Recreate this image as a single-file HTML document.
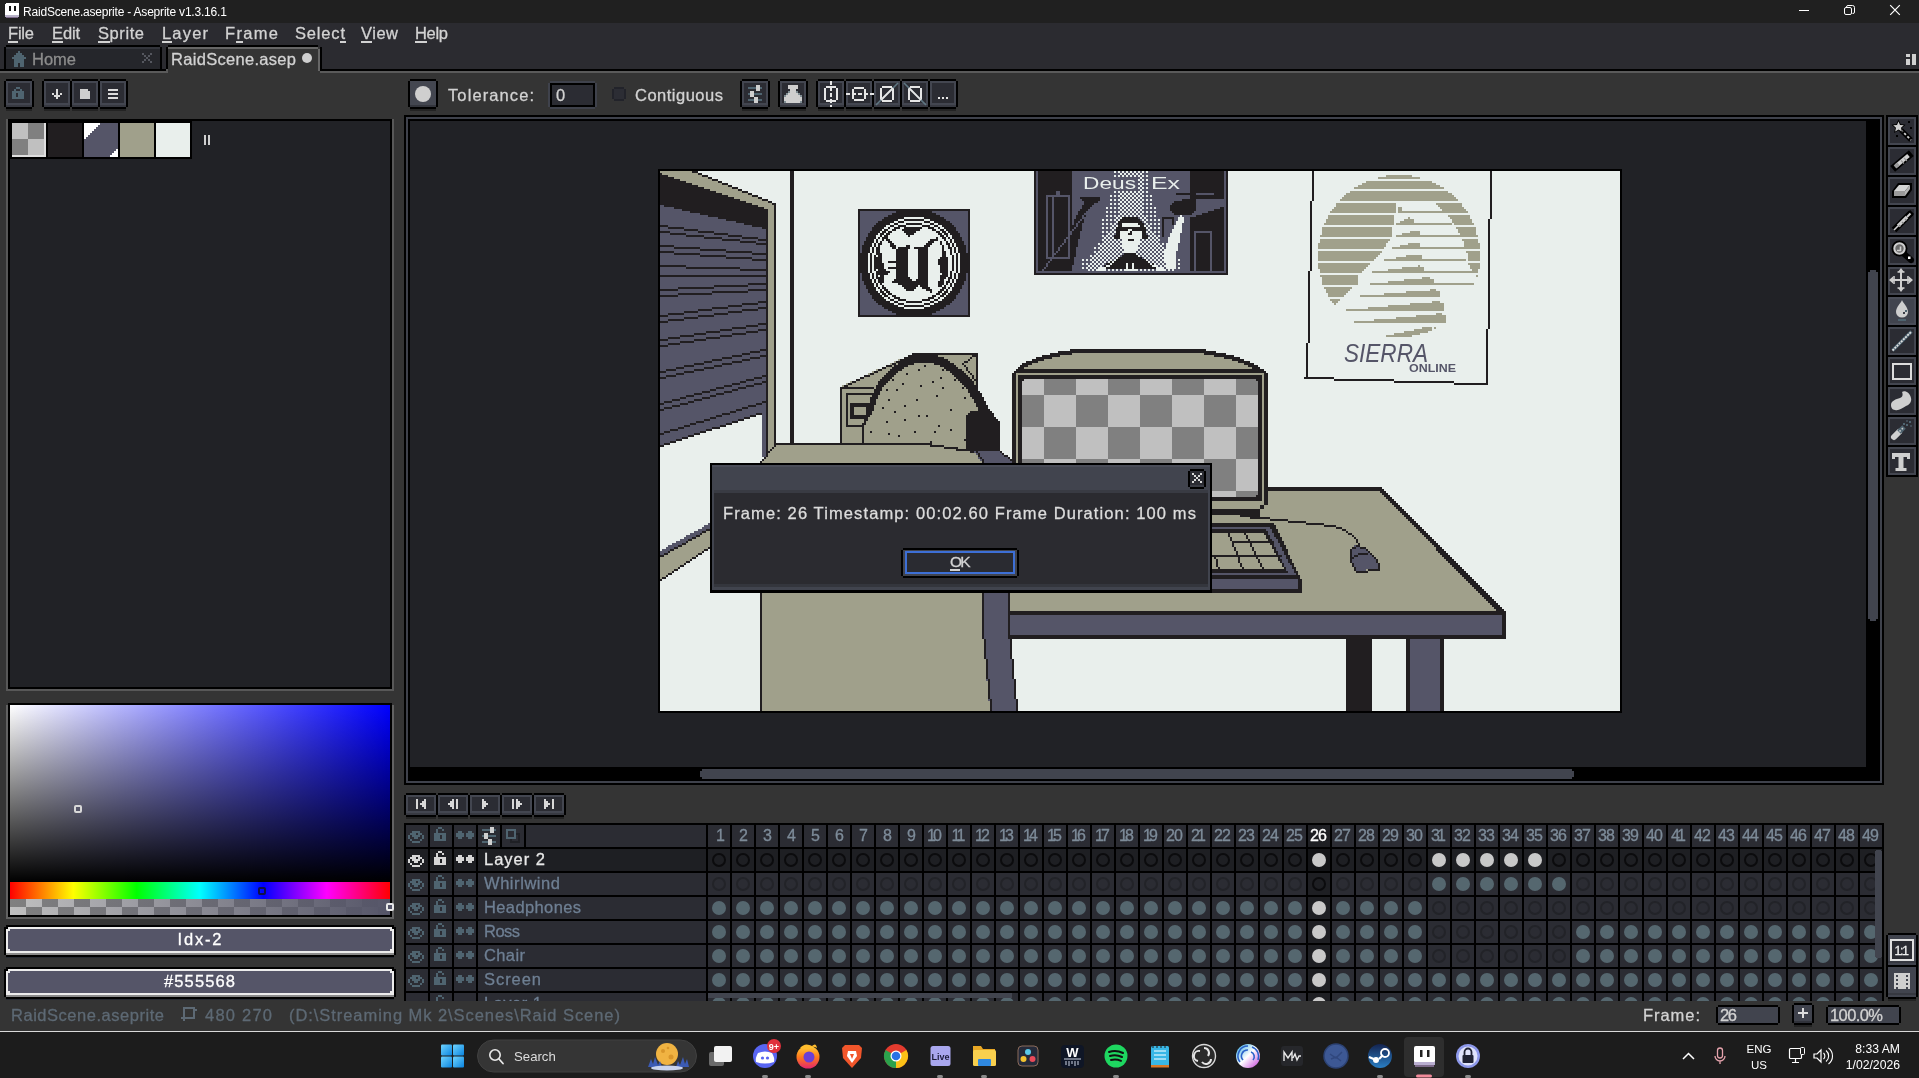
<!DOCTYPE html><html><head><meta charset="utf-8"><title>RaidScene.aseprite - Aseprite v1.3.16.1</title><style>
html,body{margin:0;padding:0}
body{width:1919px;height:1078px;overflow:hidden;background:#343434;position:relative;font-family:"Liberation Sans",sans-serif}
#r{position:absolute;left:0;top:0;width:1919px;height:1078px;overflow:hidden;will-change:transform}
#r div,#r span,#r svg{position:absolute;display:block}
#r svg svg, #r svg *{position:static}
.t{white-space:pre;line-height:normal;font-family:"Liberation Sans",sans-serif;-webkit-text-stroke:0.3px}
.w{white-space:pre;line-height:normal;font-family:"Liberation Sans",sans-serif}
.m u{text-decoration:none;background:linear-gradient(#d2d2d2,#d2d2d2) no-repeat 0 100%/100% 2px;padding-bottom:1px}
</style></head><body><div id="r"><!-- gen_base --><div style="left:0px;top:0px;width:1919px;height:23px;background:#202020;"></div><svg style="left:4px;top:3px" width="16" height="16" viewBox="0 0 16 16" shape-rendering="crispEdges"><rect x="1" y="0" width="14" height="13" rx="2" fill="#fff"/><rect x="1" y="12" width="14" height="2" fill="#b9b3c9"/><rect x="2" y="14" width="12" height="1" fill="#7d6b8a"/><rect x="5" y="3" width="2" height="5" fill="#111"/><rect x="10" y="3" width="2" height="5" fill="#111"/></svg><span class="w" style="left:23px;top:5px;font-size:12px;color:#fff;letter-spacing:-0.2px">RaidScene.aseprite - Aseprite v1.3.16.1</span><svg style="left:1780px;top:0" width="139" height="23" viewBox="0 0 139 23"><g stroke="#fff" stroke-width="1" fill="none"><path d="M19 10.5h10"/><rect x="64.5" y="7.500" width="7" height="7" rx="1.5"/><path d="M66.500 7.500v-0.500a1.500 1.500 0 0 1 1.500-1.500h4.500a2 2 0 0 1 2 2v4.500a1.500 1.500 0 0 1-1.500 1.500h-0.500"/><path d="M110.200 5.200l9.600 9.600M119.800 5.200l-9.600 9.600" stroke-width="1.200"/></g></svg><div style="left:0px;top:23px;width:1919px;height:48px;background:#2b2b30;"></div><span class="t m" style="left:8px;top:24.07px;font-size:16.5px;color:#d2d2d2;letter-spacing:-0.19px;"><u>F</u>ile</span><span class="t m" style="left:52px;top:24.07px;font-size:16.5px;color:#d2d2d2;letter-spacing:-0.14px;"><u>E</u>dit</span><span class="t m" style="left:98px;top:24.07px;font-size:16.5px;color:#d2d2d2;letter-spacing:0.58px;"><u>S</u>prite</span><span class="t m" style="left:162px;top:24.07px;font-size:16.5px;color:#d2d2d2;letter-spacing:1.18px;"><u>L</u>ayer</span><span class="t m" style="left:225px;top:24.07px;font-size:16.5px;color:#d2d2d2;letter-spacing:1.33px;">F<u>r</u>ame</span><span class="t m" style="left:295px;top:24.07px;font-size:16.5px;color:#d2d2d2;letter-spacing:0.83px;">Selec<u>t</u></span><span class="t m" style="left:361px;top:24.07px;font-size:16.5px;color:#d2d2d2;letter-spacing:0.51px;"><u>V</u>iew</span><span class="t m" style="left:415px;top:24.07px;font-size:16.5px;color:#d2d2d2;letter-spacing:-0.31px;"><u>H</u>elp</span><div style="left:0px;top:69px;width:1919px;height:2px;background:#000;"></div><div style="left:0px;top:71px;width:1919px;height:2px;background:#5a5a5a;"></div><div style="left:6px;top:45px;width:154px;height:2px;background:#000;"></div><div style="left:4px;top:47px;width:2px;height:22px;background:#000;"></div><div style="left:160px;top:47px;width:2px;height:22px;background:#000;"></div><div style="left:6px;top:47px;width:154px;height:22px;background:#25262b;"></div><div style="left:6px;top:47px;width:154px;height:2px;background:#33353c;"></div><svg style="left:12px;top:51px" width="14" height="16" viewBox="0 0 7 8" shape-rendering="crispEdges"><path d="M3 0h1v1h1v1h1v1h1v1h-1v4h-2v-2h-1v2h-2v-4h-1v-1h1v-1h1v-1h1z" fill="#4f6470"/></svg><span class="t" style="left:32px;top:50.07px;font-size:16.5px;color:#8c8c8c;letter-spacing:-0.0px;">Home</span><svg style="left:142px;top:53px" width="10" height="10" viewBox="0 0 5 5" shape-rendering="crispEdges"><path d="M0 0h1v1h-1zM4 0h1v1h-1zM1 1h1v1h-1zM3 1h1v1h-1zM2 2h1v1h-1zM1 3h1v1h-1zM3 3h1v1h-1zM0 4h1v1h-1zM4 4h1v1h-1z" fill="#55575f"/></svg><div style="left:168px;top:45px;width:150px;height:2px;background:#000;"></div><div style="left:166px;top:47px;width:2px;height:22px;background:#000;"></div><div style="left:320px;top:47px;width:2px;height:24px;background:#000;"></div><div style="left:168px;top:47px;width:152px;height:26px;background:#343434;"></div><div style="left:168px;top:47px;width:150px;height:2px;background:#666;"></div><div style="left:318px;top:49px;width:2px;height:22px;background:#666;"></div><div style="left:166px;top:47px;width:2px;height:2px;background:#000;"></div><div style="left:164px;top:69px;width:4px;height:2px;background:#000;"></div><div style="left:164px;top:71px;width:4px;height:2px;background:#5a5a5a;"></div><div style="left:166px;top:69px;width:2px;height:4px;background:#5a5a5a;"></div><span class="t" style="left:171px;top:50.07px;font-size:16.5px;color:#d2d2d2;letter-spacing:0.3px;">RaidScene.asep</span><div style="left:302px;top:53px;width:10px;height:10px;border-radius:5px;background:#cfcfcf"></div><div style="left:1906px;top:54px;width:4px;height:3px;background:#d0d0d0;"></div><div style="left:1906px;top:59px;width:4px;height:6px;background:#d0d0d0;"></div><div style="left:1912px;top:54px;width:4px;height:11px;background:#d0d0d0;"></div>
<!-- gen_left --><div style="left:6px;top:109px;width:26px;height:2px;background:#232323;"></div><div style="left:6px;top:79px;width:26px;height:30px;background:#000;"></div><div style="left:4px;top:81px;width:30px;height:26px;background:#000;"></div><div style="left:6px;top:81px;width:26px;height:26px;background:#434650;"></div><div style="left:6px;top:105px;width:26px;height:2px;background:#373941;"></div><div style="left:8px;top:83px;width:22px;height:20px;background:#2b2c33;"></div><svg style="left:12px;top:87px" width="12" height="12" viewBox="0 0 6 6" shape-rendering="crispEdges"><rect x="2" y="0" width="2" height="1" fill="#4f6470"/><rect x="1" y="1" width="1" height="1" fill="#4f6470"/><rect x="4" y="1" width="1" height="1" fill="#4f6470"/><rect x="0" y="2" width="6" height="1" fill="#4f6470"/><rect x="0" y="3" width="2" height="1" fill="#4f6470"/><rect x="3" y="3" width="3" height="1" fill="#4f6470"/><rect x="0" y="4" width="2" height="1" fill="#4f6470"/><rect x="3" y="4" width="3" height="1" fill="#4f6470"/><rect x="0" y="5" width="6" height="1" fill="#4f6470"/></svg><div style="left:44px;top:109px;width:26px;height:2px;background:#232323;"></div><div style="left:44px;top:79px;width:26px;height:30px;background:#000;"></div><div style="left:42px;top:81px;width:30px;height:26px;background:#000;"></div><div style="left:44px;top:81px;width:26px;height:26px;background:#434650;"></div><div style="left:44px;top:105px;width:26px;height:2px;background:#373941;"></div><div style="left:46px;top:83px;width:22px;height:20px;background:#2b2c33;"></div><div style="left:72px;top:109px;width:26px;height:2px;background:#232323;"></div><div style="left:72px;top:79px;width:26px;height:30px;background:#000;"></div><div style="left:70px;top:81px;width:30px;height:26px;background:#000;"></div><div style="left:72px;top:81px;width:26px;height:26px;background:#434650;"></div><div style="left:72px;top:105px;width:26px;height:2px;background:#373941;"></div><div style="left:74px;top:83px;width:22px;height:20px;background:#2b2c33;"></div><div style="left:100px;top:109px;width:26px;height:2px;background:#232323;"></div><div style="left:100px;top:79px;width:26px;height:30px;background:#000;"></div><div style="left:98px;top:81px;width:30px;height:26px;background:#000;"></div><div style="left:100px;top:81px;width:26px;height:26px;background:#434650;"></div><div style="left:100px;top:105px;width:26px;height:2px;background:#373941;"></div><div style="left:102px;top:83px;width:22px;height:20px;background:#2b2c33;"></div><svg style="left:52px;top:89px" width="10" height="10" viewBox="0 0 5 5" shape-rendering="crispEdges"><rect x="2" y="0" width="1" height="1" fill="#dcdcdc"/><rect x="2" y="1" width="1" height="1" fill="#dcdcdc"/><rect x="0" y="2" width="1" height="1" fill="#dcdcdc"/><rect x="2" y="2" width="1" height="1" fill="#dcdcdc"/><rect x="4" y="2" width="1" height="1" fill="#dcdcdc"/><rect x="1" y="3" width="3" height="1" fill="#dcdcdc"/><rect x="2" y="4" width="1" height="1" fill="#dcdcdc"/></svg><svg style="left:80px;top:89px" width="10" height="10" viewBox="0 0 5 5" shape-rendering="crispEdges"><rect x="0" y="0" width="4" height="1" fill="#cfcfcf"/><rect x="0" y="1" width="5" height="1" fill="#cfcfcf"/><rect x="0" y="2" width="5" height="1" fill="#cfcfcf"/><rect x="0" y="3" width="5" height="1" fill="#cfcfcf"/><rect x="0" y="4" width="5" height="1" fill="#cfcfcf"/></svg><svg style="left:108px;top:89px" width="10" height="10" viewBox="0 0 5 5" shape-rendering="crispEdges"><rect x="0" y="0" width="5" height="1" fill="#dcdcdc"/><rect x="0" y="2" width="5" height="1" fill="#dcdcdc"/><rect x="0" y="4" width="5" height="1" fill="#dcdcdc"/></svg><div style="left:6px;top:119px;width:388px;height:572px;background:#585858;"></div><div style="left:8px;top:119px;width:384px;height:570px;background:#000;"></div><div style="left:10px;top:121px;width:380px;height:566px;background:#212226;"></div><div style="left:10px;top:119px;width:182px;height:40px;background:#000;"></div><div style="left:12px;top:123px;width:34px;height:34px;background:#c0c0c0;"></div><div style="left:28px;top:123px;width:16px;height:16px;background:#808080;"></div><div style="left:12px;top:139px;width:16px;height:16px;background:#808080;"></div><div style="left:44px;top:123px;width:2px;height:34px;background:#dedede;"></div><div style="left:12px;top:155px;width:34px;height:2px;background:#dedede;"></div><div style="left:48px;top:123px;width:34px;height:34px;background:#211e20;"></div><div style="left:84px;top:123px;width:34px;height:34px;background:#555568;"></div><svg style="left:84px;top:123px" width="34" height="34" viewBox="0 0 17 17" shape-rendering="crispEdges"><path d="M0 0h8v1h-1v1h-1v1h-1v1h-1v1h-1v1h-1v1h-1v1h-1z" fill="#fff"/><path d="M17 17h-4v-1h1v-1h1v-1h1v-1h1z" fill="#fff"/></svg><div style="left:120px;top:123px;width:34px;height:34px;background:#a0a08b;"></div><div style="left:156px;top:123px;width:34px;height:34px;background:#e9efec;"></div><div style="left:204px;top:135px;width:2px;height:10px;background:#cfcfcf;"></div><div style="left:208px;top:135px;width:2px;height:10px;background:#cfcfcf;"></div><div style="left:6px;top:705px;width:388px;height:214px;background:#626262;"></div><div style="left:8px;top:703px;width:384px;height:214px;background:#000;"></div><div style="left:10px;top:705px;width:380px;height:177px;background:linear-gradient(to bottom,rgba(0,0,0,0),#000),linear-gradient(to right,#fff,#0000ff)"></div><div style="left:10px;top:882px;width:380px;height:17px;background:linear-gradient(to right,#f00 0%,#ff0 16.66%,#0f0 33.33%,#0ff 50%,#00f 66.66%,#f0f 83.33%,#f00 100%)"></div><div style="left:10px;top:899px;width:380px;height:16px;background:linear-gradient(to right,rgba(85,85,104,0),rgba(85,85,104,1)),repeating-conic-gradient(#c0c0c0 0% 25%,#808080 0% 50%) 0 0/32px 16px"></div><div style="left:74px;top:805px;width:4px;height:4px;border:2px solid #d8d8d8;border-radius:2px"></div><div style="left:258px;top:887px;width:4px;height:4px;border:2px solid #10104a;border-radius:2px"></div><div style="left:386px;top:903px;width:4px;height:4px;border:2px solid #e8e8e8;border-radius:2px;background:#555568"></div><div style="left:6px;top:957px;width:388px;height:1px;background:#262a31;"></div><div style="left:6px;top:925px;width:388px;height:32px;background:#000;"></div><div style="left:4px;top:927px;width:392px;height:28px;background:#000;"></div><div style="left:6px;top:927px;width:388px;height:26px;background:#ececec;"></div><div style="left:6px;top:953px;width:388px;height:2px;background:#8a8a8a;"></div><div style="left:8px;top:929px;width:384px;height:22px;background:#555568;"></div><div style="left:6px;top:927px;width:2px;height:2px;background:#000;"></div><div style="left:392px;top:927px;width:2px;height:2px;background:#000;"></div><div style="left:8px;top:929px;width:2px;height:2px;background:#ececec;"></div><div style="left:390px;top:929px;width:2px;height:2px;background:#ececec;"></div><div style="left:8px;top:949px;width:2px;height:2px;background:#ececec;"></div><div style="left:390px;top:949px;width:2px;height:2px;background:#ececec;"></div><span class="t" style="left:177.5px;top:930.07px;font-size:16.5px;color:#fff;letter-spacing:1.83px;">Idx-2</span><div style="left:6px;top:999px;width:388px;height:1px;background:#262a31;"></div><div style="left:6px;top:967px;width:388px;height:32px;background:#000;"></div><div style="left:4px;top:969px;width:392px;height:28px;background:#000;"></div><div style="left:6px;top:969px;width:388px;height:26px;background:#ececec;"></div><div style="left:6px;top:995px;width:388px;height:2px;background:#8a8a8a;"></div><div style="left:8px;top:971px;width:384px;height:22px;background:#555568;"></div><div style="left:6px;top:969px;width:2px;height:2px;background:#000;"></div><div style="left:392px;top:969px;width:2px;height:2px;background:#000;"></div><div style="left:8px;top:971px;width:2px;height:2px;background:#ececec;"></div><div style="left:390px;top:971px;width:2px;height:2px;background:#ececec;"></div><div style="left:8px;top:991px;width:2px;height:2px;background:#ececec;"></div><div style="left:390px;top:991px;width:2px;height:2px;background:#ececec;"></div><span class="t" style="left:164.0px;top:972.07px;font-size:16.5px;color:#fff;letter-spacing:1.13px;">#555568</span>
<!-- gen_ctx --><div style="left:410px;top:109px;width:26px;height:2px;background:#232323;"></div><div style="left:410px;top:79px;width:26px;height:30px;background:#000;"></div><div style="left:408px;top:81px;width:30px;height:26px;background:#000;"></div><div style="left:410px;top:81px;width:26px;height:26px;background:#434650;"></div><div style="left:410px;top:105px;width:26px;height:2px;background:#33353d;"></div><div style="left:412px;top:83px;width:22px;height:20px;background:#434650;"></div><div style="left:415px;top:86px;width:16px;height:16px;border-radius:50%;background:#cfcfcf"></div><span class="t" style="left:448px;top:86.07px;font-size:16.5px;color:#d2d2d2;letter-spacing:1.1px;">Tolerance:</span><div style="left:550px;top:81px;width:45px;height:28px;background:#3f424c;"></div><div style="left:548px;top:83px;width:49px;height:24px;background:#3f424c;"></div><div style="left:550px;top:83px;width:45px;height:24px;background:#000;"></div><div style="left:552px;top:85px;width:41px;height:20px;background:#2b2c33;"></div><span class="t" style="left:556px;top:86.07px;font-size:16.5px;color:#d2d2d2;letter-spacing:-1.18px;">0</span><div style="left:614px;top:87px;width:10px;height:14px;background:#22232a;"></div><div style="left:612px;top:89px;width:14px;height:10px;background:#22232a;"></div><div style="left:614px;top:89px;width:10px;height:10px;background:#2c2d34;"></div><span class="t" style="left:635px;top:86.07px;font-size:16.5px;color:#d2d2d2;letter-spacing:0.5px;">Contiguous</span><div style="left:742px;top:109px;width:26px;height:2px;background:#232323;"></div><div style="left:742px;top:79px;width:26px;height:30px;background:#000;"></div><div style="left:740px;top:81px;width:30px;height:26px;background:#000;"></div><div style="left:742px;top:81px;width:26px;height:26px;background:#434650;"></div><div style="left:742px;top:105px;width:26px;height:2px;background:#373941;"></div><div style="left:744px;top:83px;width:22px;height:20px;background:#2b2c33;"></div><svg style="left:748px;top:85px" width="14" height="18" viewBox="0 0 7 9" shape-rendering="crispEdges"><rect x="4" y="0" width="2" height="1" fill="#cfcfcf"/><rect x="0" y="1" width="4" height="1" fill="#4f6470"/><rect x="4" y="1" width="2" height="1" fill="#cfcfcf"/><rect x="6" y="1" width="1" height="1" fill="#4f6470"/><rect x="4" y="2" width="2" height="1" fill="#cfcfcf"/><rect x="1" y="3" width="2" height="1" fill="#cfcfcf"/><rect x="0" y="4" width="1" height="1" fill="#4f6470"/><rect x="1" y="4" width="2" height="1" fill="#cfcfcf"/><rect x="3" y="4" width="4" height="1" fill="#4f6470"/><rect x="1" y="5" width="2" height="1" fill="#cfcfcf"/><rect x="3" y="6" width="2" height="1" fill="#cfcfcf"/><rect x="0" y="7" width="3" height="1" fill="#4f6470"/><rect x="3" y="7" width="2" height="1" fill="#cfcfcf"/><rect x="5" y="7" width="2" height="1" fill="#4f6470"/><rect x="3" y="8" width="2" height="1" fill="#cfcfcf"/></svg><div style="left:780px;top:109px;width:26px;height:2px;background:#232323;"></div><div style="left:780px;top:79px;width:26px;height:30px;background:#000;"></div><div style="left:778px;top:81px;width:30px;height:26px;background:#000;"></div><div style="left:780px;top:81px;width:26px;height:26px;background:#434650;"></div><div style="left:780px;top:105px;width:26px;height:2px;background:#373941;"></div><div style="left:782px;top:83px;width:22px;height:20px;background:#2b2c33;"></div><svg style="left:784px;top:85px" width="18" height="18" viewBox="0 0 9 9" shape-rendering="crispEdges"><rect x="2" y="0" width="5" height="1" fill="#cfcfcf"/><rect x="2" y="1" width="5" height="1" fill="#cfcfcf"/><rect x="3" y="2" width="3" height="1" fill="#cfcfcf"/><rect x="2" y="3" width="1" height="1" fill="#7f8d93"/><rect x="3" y="3" width="3" height="1" fill="#cfcfcf"/><rect x="6" y="3" width="1" height="1" fill="#7f8d93"/><rect x="1" y="4" width="1" height="1" fill="#7f8d93"/><rect x="2" y="4" width="5" height="1" fill="#cfcfcf"/><rect x="7" y="4" width="1" height="1" fill="#7f8d93"/><rect x="0" y="5" width="1" height="1" fill="#7f8d93"/><rect x="1" y="5" width="7" height="1" fill="#cfcfcf"/><rect x="8" y="5" width="1" height="1" fill="#7f8d93"/><rect x="0" y="6" width="9" height="1" fill="#cfcfcf"/><rect x="0" y="7" width="9" height="1" fill="#cfcfcf"/><rect x="0" y="8" width="1" height="1" fill="#7f8d93"/><rect x="1" y="8" width="7" height="1" fill="#cfcfcf"/><rect x="8" y="8" width="1" height="1" fill="#7f8d93"/></svg><div style="left:818px;top:109px;width:26px;height:2px;background:#232323;"></div><div style="left:818px;top:79px;width:26px;height:30px;background:#000;"></div><div style="left:816px;top:81px;width:30px;height:26px;background:#000;"></div><div style="left:818px;top:81px;width:26px;height:26px;background:#434650;"></div><div style="left:818px;top:105px;width:26px;height:2px;background:#373941;"></div><div style="left:820px;top:83px;width:22px;height:20px;background:#2b2c33;"></div><div style="left:846px;top:109px;width:26px;height:2px;background:#232323;"></div><div style="left:846px;top:79px;width:26px;height:30px;background:#000;"></div><div style="left:844px;top:81px;width:30px;height:26px;background:#000;"></div><div style="left:846px;top:81px;width:26px;height:26px;background:#434650;"></div><div style="left:846px;top:105px;width:26px;height:2px;background:#373941;"></div><div style="left:848px;top:83px;width:22px;height:20px;background:#2b2c33;"></div><div style="left:874px;top:109px;width:26px;height:2px;background:#232323;"></div><div style="left:874px;top:79px;width:26px;height:30px;background:#000;"></div><div style="left:872px;top:81px;width:30px;height:26px;background:#000;"></div><div style="left:874px;top:81px;width:26px;height:26px;background:#434650;"></div><div style="left:874px;top:105px;width:26px;height:2px;background:#373941;"></div><div style="left:876px;top:83px;width:22px;height:20px;background:#2b2c33;"></div><div style="left:902px;top:109px;width:26px;height:2px;background:#232323;"></div><div style="left:902px;top:79px;width:26px;height:30px;background:#000;"></div><div style="left:900px;top:81px;width:30px;height:26px;background:#000;"></div><div style="left:902px;top:81px;width:26px;height:26px;background:#434650;"></div><div style="left:902px;top:105px;width:26px;height:2px;background:#373941;"></div><div style="left:904px;top:83px;width:22px;height:20px;background:#2b2c33;"></div><div style="left:930px;top:109px;width:26px;height:2px;background:#232323;"></div><div style="left:930px;top:79px;width:26px;height:30px;background:#000;"></div><div style="left:928px;top:81px;width:30px;height:26px;background:#000;"></div><div style="left:930px;top:81px;width:26px;height:26px;background:#434650;"></div><div style="left:930px;top:105px;width:26px;height:2px;background:#373941;"></div><div style="left:932px;top:83px;width:22px;height:20px;background:#2b2c33;"></div><svg style="left:816px;top:79px" width="142" height="30" viewBox="0 0 142 30" shape-rendering="crispEdges" fill="none" stroke-width="2"><path d="M9 9v12M21 9v12M10 8h10M10 22h10" stroke="#e6e6e6"/><path d="M15 2v26" stroke="#e6e6e6" stroke-dasharray="4 2"/><path d="M37 10v10M49 10v10M38 9h10M38 21h10" stroke="#e6e6e6"/><path d="M30 15h28" stroke="#e6e6e6" stroke-dasharray="4 2"/><path d="M65 9v12M77 9v12M66 8h10M66 22h10" stroke="#e6e6e6"/><path d="M60 26L82 4" stroke="#5f7682" shape-rendering="auto" stroke-width="1.600"/><path d="M65 21L77 9" stroke="#e6e6e6" shape-rendering="auto" stroke-width="1.800"/><path d="M93 9v12M105 9v12M94 8h10M94 22h10" stroke="#e6e6e6"/><path d="M88 4L110 26" stroke="#5f7682" shape-rendering="auto" stroke-width="1.600"/><path d="M93 9L105 21" stroke="#e6e6e6" shape-rendering="auto" stroke-width="1.800"/><path d="M122 19h2M126 19h2M130 19h2" stroke="#e6e6e6"/></svg>
<!-- gen_editor --><div style="left:404px;top:115px;width:1480px;height:670px;background:#000;"></div><div style="left:406px;top:117px;width:1476px;height:666px;background:#3f424c;"></div><div style="left:408px;top:119px;width:1472px;height:662px;background:#000;"></div><div style="left:410px;top:121px;width:1456px;height:646px;background:#212226;"></div><div style="left:1868px;top:272px;width:10px;height:347px;background:#41444e;"></div><div style="left:1870px;top:270px;width:6px;height:351px;background:#41444e;"></div><div style="left:702px;top:769px;width:870px;height:10px;background:#41444e;"></div><div style="left:700px;top:771px;width:874px;height:6px;background:#41444e;"></div><div style="left:658px;top:169px;width:964px;height:544px;background:#000;"></div><div style="left:1886px;top:115px;width:32px;height:32px;background:#000;"></div><div style="left:1888px;top:117px;width:28px;height:28px;background:#434650;"></div><div style="left:1890px;top:119px;width:24px;height:24px;background:#2b2c33;"></div><div style="left:1886px;top:145px;width:32px;height:32px;background:#000;"></div><div style="left:1888px;top:147px;width:28px;height:28px;background:#434650;"></div><div style="left:1890px;top:149px;width:24px;height:24px;background:#2b2c33;"></div><div style="left:1886px;top:175px;width:32px;height:32px;background:#000;"></div><div style="left:1888px;top:177px;width:28px;height:28px;background:#434650;"></div><div style="left:1890px;top:179px;width:24px;height:24px;background:#2b2c33;"></div><div style="left:1886px;top:205px;width:32px;height:32px;background:#000;"></div><div style="left:1888px;top:207px;width:28px;height:28px;background:#434650;"></div><div style="left:1890px;top:209px;width:24px;height:24px;background:#2b2c33;"></div><div style="left:1886px;top:235px;width:32px;height:32px;background:#000;"></div><div style="left:1888px;top:237px;width:28px;height:28px;background:#434650;"></div><div style="left:1890px;top:239px;width:24px;height:24px;background:#2b2c33;"></div><div style="left:1886px;top:265px;width:32px;height:32px;background:#000;"></div><div style="left:1888px;top:267px;width:28px;height:28px;background:#434650;"></div><div style="left:1890px;top:269px;width:24px;height:24px;background:#2b2c33;"></div><div style="left:1886px;top:295px;width:32px;height:32px;background:#000;"></div><div style="left:1888px;top:297px;width:28px;height:28px;background:#4a4d58;"></div><div style="left:1890px;top:299px;width:24px;height:24px;background:#41444e;"></div><div style="left:1886px;top:325px;width:32px;height:32px;background:#000;"></div><div style="left:1888px;top:327px;width:28px;height:28px;background:#434650;"></div><div style="left:1890px;top:329px;width:24px;height:24px;background:#2b2c33;"></div><div style="left:1886px;top:355px;width:32px;height:32px;background:#000;"></div><div style="left:1888px;top:357px;width:28px;height:28px;background:#434650;"></div><div style="left:1890px;top:359px;width:24px;height:24px;background:#2b2c33;"></div><div style="left:1886px;top:385px;width:32px;height:32px;background:#000;"></div><div style="left:1888px;top:387px;width:28px;height:28px;background:#434650;"></div><div style="left:1890px;top:389px;width:24px;height:24px;background:#2b2c33;"></div><div style="left:1886px;top:415px;width:32px;height:32px;background:#000;"></div><div style="left:1888px;top:417px;width:28px;height:28px;background:#434650;"></div><div style="left:1890px;top:419px;width:24px;height:24px;background:#2b2c33;"></div><div style="left:1886px;top:445px;width:32px;height:32px;background:#000;"></div><div style="left:1888px;top:447px;width:28px;height:28px;background:#434650;"></div><div style="left:1890px;top:449px;width:24px;height:24px;background:#2b2c33;"></div><svg style="left:1886px;top:115px" width="32" height="32" viewBox="0 0 32 32"><path d="M15 15L25 25" stroke="#000" stroke-width="5"/><path d="M15 15L25 25" stroke="#cfcfcf" stroke-width="1.800" stroke-dasharray="2.500 2"/><polygon points="12.5,4.5 14.6,9.1 19.6,9.7 15.9,13.1 16.9,18.1 12.5,15.6 8.1,18.1 9.1,13.1 5.4,9.7 10.4,9.1" fill="#000"/><polygon points="12.5,6.4 14.0,9.9 17.8,10.3 15.0,12.8 15.8,16.5 12.5,14.6 9.2,16.5 10.0,12.8 7.2,10.3 11.0,9.9" fill="#cfcfcf"/><rect x="22" y="6" width="2" height="2" fill="#000"/><rect x="24" y="12" width="2" height="2" fill="#000"/><rect x="10" y="20" width="2" height="2" fill="#000"/></svg><svg style="left:1886px;top:145px" width="32" height="32" viewBox="0 0 32 32"><path d="M9.500 21.500L22.500 10.500" stroke="#000" stroke-width="7.500" stroke-linecap="square"/><path d="M10 21L22.500 10.500" stroke="#cfcfcf" stroke-width="4"/><path d="M9 22L12.500 19" stroke="#9a9a9a" stroke-width="4"/><path d="M15 15.500l3 3M18 13l3 3" stroke="#9a9a9a" stroke-width="1.200"/></svg><svg style="left:1886px;top:175px" width="32" height="32" viewBox="0 0 32 32"><polygon points="12,8 26,8 26,15 20,23 6,23 6,16" fill="#000"/><polygon points="13,10 24,10 19,16 8,16" fill="#d4d4d4"/><polygon points="8,16 19,16 19,21 8,21" fill="#9a9a9a"/><polygon points="19,16 24,10 24,14 19,21" fill="#b4b4b4"/></svg><svg style="left:1886px;top:205px" width="32" height="32" viewBox="0 0 32 32"><path d="M8 25L25 8" stroke="#000" stroke-width="6.500"/><path d="M22 7l4 4" stroke="#000" stroke-width="6"/><path d="M8 25L12 21" stroke="#cfcfcf" stroke-width="1.600"/><path d="M12 21L21 12" stroke="#cfcfcf" stroke-width="3.400"/><path d="M21 12L24.500 8.500" stroke="#cfcfcf" stroke-width="2"/><path d="M13 20l1.500 1.500M16 17l1.500 1.500M19 14l1.500 1.500" stroke="#888" stroke-width="1.400"/></svg><svg style="left:1886px;top:235px" width="32" height="32" viewBox="0 0 32 32"><path d="M17 18L25 25" stroke="#000" stroke-width="6" stroke-linecap="round"/><circle cx="13.500" cy="13.500" r="8" fill="#000"/><circle cx="13.500" cy="13.500" r="5.200" fill="#6a6a6a" stroke="#cfcfcf" stroke-width="2"/><path d="M11 15.500h3.500v-4" stroke="#cfcfcf" stroke-width="1.600" fill="none"/><rect x="22" y="21.500" width="2.500" height="2.500" fill="#fff"/></svg><svg style="left:1886px;top:265px" width="32" height="32" viewBox="0 0 32 32"><path d="M15 5v20M5 15h20" stroke="#cfcfcf" stroke-width="2"/><path d="M15 3l3 4h-6zM15 27l3-4h-6zM3 15l4-3.500v7zM27 15l-4-3.500v7z" fill="#cfcfcf"/><path d="M8 11v8M22 11v8M11.500 7h7M11.500 23h7" stroke="#cfcfcf" stroke-width="1.600"/></svg><svg style="left:1886px;top:295px" width="32" height="32" viewBox="0 0 32 32"><path d="M16 5c1 3 6 7 6 12a6 5.500 0 0 1-12 0c0-5 5-9 6-12z" fill="#cfcfcf"/><rect x="17" y="17" width="2" height="2" fill="#3a3c45"/><rect x="19" y="15" width="2" height="2" fill="#4f6470"/><rect x="12" y="24" width="8" height="2" fill="#4f6470"/></svg><svg style="left:1886px;top:325px" width="32" height="32" viewBox="0 0 32 32"><path d="M6.500 25.500L25.500 6.500" stroke="#4f6470" stroke-width="3.200"/><path d="M6.500 25.500L25.500 6.500" stroke="#e0e0e0" stroke-width="1.800" stroke-dasharray="2 1"/></svg><svg style="left:1886px;top:355px" width="32" height="32" viewBox="0 0 32 32"><rect x="7" y="9" width="18" height="15" fill="none" stroke="#dcdcdc" stroke-width="2"/></svg><svg style="left:1886px;top:385px" width="32" height="32" viewBox="0 0 32 32"><path d="M5 20c0-4 5-6 9-7c3-1 3-4 2-6c3-2 8 1 9 6c1 4-2 7-5 8c-4 2-7 5-11 4c-3 0-4-3-4-5z" fill="#cfcfcf"/></svg><svg style="left:1886px;top:415px" width="32" height="32" viewBox="0 0 32 32"><path d="M8 22L13 17" stroke="#cfcfcf" stroke-width="6" stroke-linecap="round"/><path d="M13 17L18 12" stroke="#4f6470" stroke-width="5"/><path d="M13.500 16.500l4.500-4.500" stroke="#cfcfcf" stroke-width="1.600" stroke-dasharray="1.600 1.600"/><rect x="20" y="9" width="2" height="2" fill="#4f6470"/><rect x="23" y="6" width="2" height="2" fill="#4f6470"/><rect x="20" y="5" width="2" height="2" fill="#3f4a55"/><rect x="24" y="10" width="2" height="2" fill="#3f4a55"/><rect x="17" y="8" width="2" height="2" fill="#4f6470"/></svg><svg style="left:1886px;top:445px" width="32" height="32" viewBox="0 0 32 32"><path d="M6 8h18v6h-3v-2h-3.500v11h3v3h-11v-3h3v-11h-3.500v2h-3z" fill="#cfcfcf"/></svg><div style="left:1888px;top:999px;width:28px;height:2px;background:#232323;"></div><div style="left:1888px;top:933px;width:28px;height:66px;background:#000;"></div><div style="left:1886px;top:935px;width:32px;height:62px;background:#000;"></div><div style="left:1888px;top:935px;width:28px;height:30px;background:#41444e;"></div><div style="left:1888px;top:961px;width:28px;height:2px;background:#363840;"></div><div style="left:1888px;top:967px;width:28px;height:30px;background:#41444e;"></div><div style="left:1888px;top:993px;width:28px;height:2px;background:#363840;"></div><div style="left:1890px;top:939px;width:24px;height:22px;background:#e0e0e0;"></div><div style="left:1892px;top:941px;width:20px;height:18px;background:#2b2c33;"></div><span class="t" style="left:1894.5px;top:944.19px;font-size:12.5px;color:#f0f0f0;letter-spacing:-1.44px;">1:1</span><svg style="left:1894px;top:973px" width="16" height="16" viewBox="0 0 8 8" shape-rendering="crispEdges"><rect x="0" y="0" width="8" height="1" fill="#cfcfcf"/><rect x="0" y="1" width="1" height="1" fill="#cfcfcf"/><rect x="2" y="1" width="4" height="1" fill="#cfcfcf"/><rect x="7" y="1" width="1" height="1" fill="#cfcfcf"/><rect x="0" y="2" width="8" height="1" fill="#cfcfcf"/><rect x="0" y="3" width="1" height="1" fill="#cfcfcf"/><rect x="2" y="3" width="4" height="1" fill="#cfcfcf"/><rect x="7" y="3" width="1" height="1" fill="#cfcfcf"/><rect x="0" y="4" width="8" height="1" fill="#cfcfcf"/><rect x="0" y="5" width="1" height="1" fill="#cfcfcf"/><rect x="2" y="5" width="4" height="1" fill="#cfcfcf"/><rect x="7" y="5" width="1" height="1" fill="#cfcfcf"/><rect x="0" y="6" width="8" height="1" fill="#cfcfcf"/><rect x="0" y="7" width="1" height="1" fill="#cfcfcf"/><rect x="2" y="7" width="4" height="1" fill="#cfcfcf"/><rect x="7" y="7" width="1" height="1" fill="#cfcfcf"/></svg>
<!-- gen_art --><svg style="left:660px;top:171px" width="960" height="540" viewBox="0 0 480 270" shape-rendering="crispEdges"><rect width="480" height="270" fill="#e9efec"/><path fill="#a0a08b" d="M0 0h16v1h-16zM1 1h18v1h-18zM4 2h17v1h-17zM363 2h13v1h-13zM7 3h17v1h-17zM359 3h21v1h-21zM10 4h16v1h-16zM13 5h16v1h-16zM353 5h33v1h-33zM16 6h15v1h-15zM351 6h37v1h-37zM19 7h15v1h-15zM349 7h41v1h-41zM22 8h14v1h-14zM347 8h45v1h-45zM25 9h14v1h-14zM28 10h13v1h-13zM345 10h49v1h-49zM31 11h13v1h-13zM343 11h53v1h-53zM34 12h12v1h-12zM342 12h55v1h-55zM37 13h12v1h-12zM341 13h57v1h-57zM40 14h11v1h-11zM340 14h59v1h-59zM43 15h11v1h-11zM46 16h10v1h-10zM388 16h13v1h-13zM338 16h30v2h-30zM49 17h8v1h-8zM389 17h12v1h-12zM52 18h5v1h-5zM337 18h31v1h-31zM390 18h12v1h-12zM369 18h2v2h-2zM336 19h32v1h-32zM391 19h12v1h-12zM335 20h33v1h-33zM369 20h35v1h-35zM394 22h11v1h-11zM334 22h33v2h-33zM374 23h1v1h-1zM395 23h10v1h-10zM372 24h5v1h-5zM333 24h34v2h-34zM396 24h10v2h-10zM370 25h7v1h-7zM332 26h35v1h-35zM368 26h28v1h-28zM397 26h10v1h-10zM398 28h10v1h-10zM399 29h9v2h-9zM375 30h5v1h-5zM331 28h35v4h-35zM371 31h9v1h-9zM400 31h8v1h-8zM330 32h36v1h-36zM368 32h41v1h-41zM330 34h35v1h-35zM401 34h8v1h-8zM330 35h34v1h-34zM402 35h7v1h-7zM374 36h6v1h-6zM329 36h34v2h-34zM402 36h8v2h-8zM370 37h10v1h-10zM329 38h33v1h-33zM366 38h44v1h-44zM329 40h32v1h-32zM403 40h7v1h-7zM329 41h31v1h-31zM329 42h30v1h-30zM373 42h8v1h-8zM329 43h29v1h-29zM368 43h13v1h-13zM404 41h6v4h-6zM329 44h28v1h-28zM362 44h41v1h-41zM329 46h26v1h-26zM404 46h6v1h-6zM329 47h25v1h-25zM379 47h1v1h-1zM405 47h5v2h-5zM329 48h24v1h-24zM371 48h11v1h-11zM330 49h22v1h-22zM364 49h18v1h-18zM406 49h3v1h-3zM330 50h21v1h-21zM356 50h53v1h-53zM330 52h19v1h-19zM408 52h1v1h-1zM381 53h4v1h-4zM372 54h15v1h-15zM364 55h23v1h-23zM331 53h18v4h-18zM355 56h52v1h-52zM332 58h14v1h-14zM333 59h12v1h-12zM385 59h3v1h-3zM333 60h11v1h-11zM373 60h17v1h-17zM334 61h9v1h-9zM362 61h28v1h-28zM334 62h8v1h-8zM350 62h40v1h-40zM335 64h5v1h-5zM336 65h3v1h-3zM386 65h4v1h-4zM337 66h1v1h-1zM375 66h17v1h-17zM364 67h28v1h-28zM354 68h38v1h-38zM343 69h49v1h-49zM388 71h3v1h-3zM378 72h15v1h-15zM368 73h25v1h-25zM357 74h36v1h-36zM347 75h46v1h-46zM381 78h5v1h-5zM387 78h1v1h-1zM377 79h9v1h-9zM372 80h12v1h-12zM367 81h13v1h-13zM363 82h13v1h-13zM206 91h66v1h-66zM139 92h17v1h-17zM200 92h77v1h-77zM142 93h13v1h-13zM156 93h2v1h-2zM196 93h86v1h-86zM119 94h1v1h-1zM144 94h10v1h-10zM155 94h3v1h-3zM192 94h94v1h-94zM117 95h1v1h-1zM145 95h7v1h-7zM154 95h4v1h-4zM189 95h100v1h-100zM115 96h1v1h-1zM118 96h1v1h-1zM127 96h10v1h-10zM147 96h4v1h-4zM152 96h6v1h-6zM186 96h106v1h-106zM116 97h1v1h-1zM124 97h8v1h-8zM133 97h7v1h-7zM148 97h4v1h-4zM153 97h5v1h-5zM184 97h110v1h-110zM113 98h3v1h-3zM122 98h20v1h-20zM149 98h4v1h-4zM182 98h114v1h-114zM154 98h4v2h-4zM108 99h1v1h-1zM111 99h4v1h-4zM121 99h8v1h-8zM130 99h11v1h-11zM142 99h1v1h-1zM151 99h2v1h-2zM106 100h1v1h-1zM109 100h5v1h-5zM119 100h26v1h-26zM152 100h2v1h-2zM155 100h3v1h-3zM104 101h1v1h-1zM107 101h6v1h-6zM118 101h5v1h-5zM124 101h22v1h-22zM153 101h2v1h-2zM156 101h2v1h-2zM178 101h124v1h-124zM105 102h7v1h-7zM117 102h30v1h-30zM154 102h2v1h-2zM157 102h1v2h-1zM102 103h9v1h-9zM116 103h24v1h-24zM141 103h7v1h-7zM155 103h1v1h-1zM100 104h10v1h-10zM115 104h1v1h-1zM117 104h30v1h-30zM148 104h1v1h-1zM156 104h1v1h-1zM95 105h1v1h-1zM98 105h11v1h-11zM114 105h22v1h-22zM137 105h13v1h-13zM157 105h1v2h-1zM93 106h1v1h-1zM96 106h13v1h-13zM113 106h8v1h-8zM122 106h29v1h-29zM91 107h1v1h-1zM94 107h14v1h-14zM112 107h18v1h-18zM131 107h21v1h-21zM107 108h1v1h-1zM111 108h30v1h-30zM142 108h9v1h-9zM152 108h1v1h-1zM111 109h2v1h-2zM114 109h4v1h-4zM119 109h35v1h-35zM91 109h16v2h-16zM110 110h44v1h-44zM110 111h45v1h-45zM94 112h12v1h-12zM109 112h29v1h-29zM139 112h16v1h-16zM109 113h43v1h-43zM153 113h3v1h-3zM108 114h6v1h-6zM115 114h13v1h-13zM129 114h28v1h-28zM94 113h11v3h-11zM108 115h49v1h-49zM108 116h50v1h-50zM107 117h15v1h-15zM123 117h35v1h-35zM107 118h4v1h-4zM112 118h47v1h-47zM107 119h38v1h-38zM146 119h13v1h-13zM106 120h11v1h-11zM118 120h37v1h-37zM97 118h6v4h-6zM106 121h48v1h-48zM105 122h24v1h-24zM130 122h3v1h-3zM134 122h19v1h-19zM94 116h1v8h-1zM104 123h49v1h-49zM104 124h18v1h-18zM123 124h30v1h-30zM94 124h8v2h-8zM103 125h10v1h-10zM114 125h39v1h-39zM94 126h7v1h-7zM103 126h50v1h-50zM91 111h2v17h-2zM102 127h37v1h-37zM140 127h13v1h-13zM102 128h51v1h-51zM102 129h43v1h-43zM146 129h7v1h-7zM102 130h3v1h-3zM106 130h21v1h-21zM128 130h9v1h-9zM138 130h15v1h-15zM102 131h12v1h-12zM115 131h38v1h-38zM102 132h17v1h-17zM120 132h33v1h-33zM102 133h51v1h-51zM102 134h50v1h-50zM91 128h10v8h-10zM102 135h33v1h-33zM136 135h17v2h-17zM54 19h3v119h-3zM58 137h77v1h-77zM142 137h11v1h-11zM54 138h2v1h-2zM57 138h85v1h-85zM149 138h4v1h-4zM54 139h1v1h-1zM56 139h92v1h-92zM55 140h100v1h-100zM54 141h104v1h-104zM54 142h105v1h-105zM53 143h106v1h-106zM52 144h108v1h-108zM51 145h110v1h-110zM304 160h56v1h-56zM51 146h111v16h-111zM304 161h57v1h-57zM304 162h58v1h-58zM304 163h59v1h-59zM178 102h1v63h-1zM301 102h1v63h-1zM304 164h60v1h-60zM304 165h61v1h-61zM178 165h124v2h-124zM304 166h62v1h-62zM302 167h65v1h-65zM175 158h1v11h-1zM180 167h120v2h-120zM302 168h66v1h-66zM300 169h69v1h-69zM300 170h70v1h-70zM175 169h11v3h-11zM300 171h71v1h-71zM175 172h115v1h-115zM300 172h72v1h-72zM175 173h120v1h-120zM305 173h68v1h-68zM175 174h130v1h-130zM314 174h60v1h-60zM175 175h139v1h-139zM323 175h52v1h-52zM307 176h16v1h-16zM332 176h44v1h-44zM308 177h24v1h-24zM338 177h39v1h-39zM308 178h30v1h-30zM341 178h37v1h-37zM309 179h32v1h-32zM343 179h36v1h-36zM175 176h25v5h-25zM23 180h2v1h-2zM309 180h34v1h-34zM344 180h36v1h-36zM21 181h4v1h-4zM285 181h7v1h-7zM293 181h9v1h-9zM310 181h34v1h-34zM346 181h35v1h-35zM175 181h109v2h-109zM20 182h5v1h-5zM285 182h8v1h-8zM310 182h36v1h-36zM347 182h35v1h-35zM294 182h9v2h-9zM18 183h7v1h-7zM286 183h7v1h-7zM311 183h36v1h-36zM348 183h35v1h-35zM175 183h110v2h-110zM16 184h9v1h-9zM286 184h8v1h-8zM295 184h9v1h-9zM311 184h37v1h-37zM349 184h35v1h-35zM14 185h11v1h-11zM312 185h36v1h-36zM349 185h36v1h-36zM13 186h12v1h-12zM296 186h9v1h-9zM312 186h37v1h-37zM350 186h36v1h-36zM175 185h111v3h-111zM287 186h8v2h-8zM11 187h14v1h-14zM296 187h10v1h-10zM313 187h34v1h-34zM350 187h37v1h-37zM9 188h15v1h-15zM297 188h9v1h-9zM313 188h33v1h-33zM353 188h35v1h-35zM175 188h112v2h-112zM288 188h8v2h-8zM7 189h15v1h-15zM297 189h10v1h-10zM354 189h34v1h-34zM5 190h16v1h-16zM298 190h9v1h-9zM355 190h34v1h-34zM314 189h31v3h-31zM175 190h113v2h-113zM289 190h8v2h-8zM4 191h15v1h-15zM298 191h10v1h-10zM356 191h34v1h-34zM51 162h112v31h-112zM2 192h16v1h-16zM175 192h101v1h-101zM357 192h34v1h-34zM315 192h30v2h-30zM0 193h16v1h-16zM175 193h102v1h-102zM278 193h11v1h-11zM290 193h8v1h-8zM299 193h10v1h-10zM358 193h34v1h-34zM0 194h15v1h-15zM300 194h9v1h-9zM359 194h34v1h-34zM279 194h10v2h-10zM290 194h9v2h-9zM316 194h29v2h-29zM0 195h13v1h-13zM300 195h10v1h-10zM359 195h35v1h-35zM0 196h12v1h-12zM360 196h35v1h-35zM175 194h103v4h-103zM279 196h11v2h-11zM291 196h9v2h-9zM301 196h10v2h-10zM317 196h29v2h-29zM0 197h10v1h-10zM360 197h36v1h-36zM0 198h9v1h-9zM175 198h104v1h-104zM280 198h11v1h-11zM292 198h9v1h-9zM302 198h10v1h-10zM360 198h37v1h-37zM318 198h29v2h-29zM0 199h7v1h-7zM353 199h1v1h-1zM360 199h38v1h-38zM0 200h6v1h-6zM319 200h29v1h-29zM354 200h45v1h-45zM0 201h4v1h-4zM319 201h81v1h-81zM0 202h3v1h-3zM320 202h81v1h-81zM0 203h1v1h-1zM320 203h82v1h-82zM51 193h113v12h-113zM321 204h82v1h-82zM321 205h83v1h-83zM321 206h84v1h-84zM321 207h85v1h-85zM321 208h86v1h-86zM321 209h87v1h-87zM175 199h25v12h-25zM321 210h88v1h-88zM175 211h235v1h-235zM175 212h236v1h-236zM175 213h237v1h-237zM175 214h238v1h-238zM175 215h239v1h-239zM175 216h240v1h-240zM175 217h241v1h-241zM175 218h242v1h-242zM175 219h243v1h-243zM51 205h110v29h-110zM51 234h111v10h-111zM51 244h112v11h-112zM51 255h113v10h-113zM51 265h114v5h-114z"/><path fill="#211e20" d="M16 0h3v1h-3zM0 1h1v1h-1zM19 1h2v1h-2zM0 2h4v1h-4zM21 2h3v1h-3zM0 3h7v1h-7zM24 3h2v1h-2zM0 4h10v1h-10zM26 4h3v1h-3zM0 5h13v1h-13zM29 5h2v1h-2zM0 6h16v1h-16zM31 6h3v1h-3zM0 7h19v1h-19zM34 7h2v1h-2zM0 8h22v1h-22zM36 8h3v1h-3zM189 0h17v10h-17zM0 9h25v1h-25zM39 9h2v1h-2zM265 0h17v11h-17zM0 10h28v1h-28zM41 10h3v1h-3zM189 10h9v2h-9zM200 10h6v2h-6zM0 11h31v1h-31zM44 11h2v1h-2zM258 11h10v1h-10zM277 11h5v1h-5zM0 12h34v1h-34zM46 12h3v1h-3zM265 12h17v2h-17zM0 13h37v1h-37zM49 13h2v1h-2zM210 13h10v1h-10zM326 0h1v15h-1zM0 14h40v1h-40zM51 14h3v1h-3zM211 14h9v1h-9zM261 14h7v1h-7zM0 15h43v1h-43zM54 15h2v1h-2zM212 15h7v1h-7zM257 15h11v1h-11zM0 16h46v1h-46zM56 16h2v1h-2zM212 16h5v1h-5zM256 16h12v1h-12zM2 17h47v1h-47zM211 17h5v1h-5zM7 18h45v1h-45zM211 18h4v1h-4zM280 18h2v1h-2zM255 17h13v3h-13zM11 19h43v1h-43zM99 19h56v1h-56zM210 19h4v1h-4zM277 19h5v1h-5zM15 20h39v1h-39zM118 20h18v1h-18zM209 20h4v1h-4zM256 20h11v1h-11zM274 20h8v1h-8zM20 21h34v1h-34zM116 21h22v1h-22zM209 21h3v1h-3zM257 21h9v1h-9zM271 21h11v1h-11zM24 22h30v1h-30zM114 22h26v1h-26zM212 22h1v1h-1zM268 22h14v1h-14zM415 0h1v24h-1zM208 22h3v2h-3zM29 23h25v1h-25zM112 23h10v1h-10zM132 23h10v1h-10zM231 23h8v1h-8zM251 23h6v1h-6zM33 24h21v1h-21zM111 24h8v1h-8zM122 24h10v1h-10zM135 24h8v1h-8zM207 24h3v1h-3zM211 24h1v1h-1zM230 24h10v1h-10zM38 25h16v1h-16zM109 25h8v1h-8zM119 25h3v1h-3zM132 25h3v1h-3zM137 25h8v1h-8zM207 25h2v1h-2zM210 25h2v1h-2zM229 25h12v1h-12zM205 12h1v15h-1zM256 24h1v3h-1zM42 26h12v1h-12zM108 26h7v1h-7zM117 26h2v1h-2zM123 26h8v1h-8zM135 26h2v1h-2zM139 26h7v1h-7zM207 26h1v1h-1zM239 26h3v1h-3zM209 26h2v2h-2zM229 26h2v2h-2zM0 27h4v1h-4zM46 27h8v1h-8zM107 27h6v1h-6zM115 27h2v1h-2zM119 27h4v1h-4zM131 27h4v1h-4zM137 27h2v1h-2zM141 27h6v1h-6zM205 27h3v1h-3zM240 27h2v1h-2zM4 28h8v1h-8zM51 28h3v1h-3zM106 28h6v1h-6zM114 28h1v1h-1zM117 28h3v1h-3zM122 28h9v1h-9zM134 28h3v1h-3zM139 28h1v1h-1zM142 28h6v1h-6zM205 28h2v1h-2zM208 28h3v1h-3zM228 28h15v1h-15zM265 23h17v7h-17zM12 29h7v1h-7zM106 29h5v1h-5zM112 29h2v1h-2zM116 29h2v1h-2zM121 29h9v1h-9zM136 29h2v1h-2zM140 29h2v1h-2zM143 29h5v1h-5zM205 29h1v1h-1zM207 29h4v1h-4zM228 29h6v1h-6zM236 29h7v1h-7zM0 30h5v1h-5zM19 30h8v1h-8zM105 30h5v1h-5zM111 30h2v1h-2zM114 30h2v1h-2zM122 30h6v1h-6zM138 30h2v1h-2zM141 30h2v1h-2zM144 30h5v1h-5zM235 30h1v1h-1zM206 30h4v2h-4zM228 30h2v2h-2zM241 30h2v2h-2zM5 31h8v1h-8zM27 31h7v1h-7zM104 31h5v1h-5zM110 31h2v1h-2zM113 31h2v1h-2zM123 31h4v1h-4zM139 31h2v1h-2zM142 31h2v1h-2zM145 31h5v1h-5zM234 31h2v1h-2zM197 13h7v20h-7zM251 24h1v9h-1zM13 32h9v1h-9zM34 32h7v1h-7zM104 32h4v1h-4zM110 32h1v1h-1zM112 32h2v1h-2zM124 32h1v1h-1zM140 32h2v1h-2zM143 32h1v1h-1zM146 32h4v1h-4zM53 29h1v5h-1zM205 32h5v2h-5zM227 32h3v2h-3zM241 32h3v2h-3zM22 33h9v1h-9zM41 33h8v1h-8zM103 33h5v1h-5zM109 33h1v1h-1zM111 33h3v1h-3zM138 33h1v1h-1zM141 33h2v1h-2zM144 33h1v1h-1zM146 33h5v1h-5zM197 33h6v1h-6zM31 34h9v1h-9zM49 34h5v1h-5zM103 34h4v1h-4zM111 34h1v1h-1zM113 34h2v1h-2zM135 34h4v1h-4zM142 34h1v1h-1zM147 34h4v1h-4zM234 34h3v1h-3zM108 34h1v2h-1zM145 34h1v2h-1zM197 34h5v2h-5zM203 34h1v2h-1zM40 35h8v1h-8zM53 35h1v1h-1zM102 35h5v1h-5zM110 35h1v1h-1zM114 35h2v1h-2zM134 35h3v1h-3zM143 35h1v1h-1zM147 35h5v1h-5zM140 35h1v2h-1zM48 36h6v1h-6zM102 36h4v1h-4zM109 36h2v1h-2zM115 36h2v1h-2zM133 36h3v1h-3zM143 36h2v1h-2zM148 36h4v1h-4zM197 36h4v1h-4zM202 36h2v1h-2zM205 34h4v4h-4zM107 36h1v2h-1zM146 36h1v2h-1zM0 37h7v1h-7zM101 37h5v1h-5zM109 37h1v1h-1zM115 37h3v1h-3zM123 37h2v1h-2zM132 37h3v1h-3zM144 37h1v1h-1zM148 37h5v1h-5zM197 37h3v1h-3zM201 37h3v1h-3zM7 38h13v1h-13zM116 38h2v1h-2zM119 38h6v1h-6zM127 38h7v1h-7zM144 38h2v1h-2zM141 37h1v3h-1zM197 38h2v2h-2zM200 38h4v2h-4zM20 39h13v1h-13zM99 20h1v21h-1zM154 20h1v21h-1zM53 37h1v4h-1zM101 38h4v3h-4zM106 38h1v3h-1zM108 38h2v3h-2zM147 38h1v3h-1zM149 38h4v3h-4zM0 40h7v1h-7zM33 40h13v1h-13zM197 40h1v1h-1zM199 40h5v1h-5zM145 39h1v3h-1zM7 41h13v1h-13zM46 41h8v1h-8zM108 41h3v1h-3zM198 41h6v1h-6zM232 41h6v1h-6zM194 13h2v30h-2zM205 38h3v5h-3zM141 40h2v3h-2zM20 42h13v1h-13zM107 42h1v1h-1zM109 42h2v1h-2zM197 42h7v1h-7zM231 42h8v1h-8zM189 12h4v32h-4zM53 42h1v2h-1zM33 43h13v1h-13zM140 43h4v1h-4zM205 43h2v1h-2zM229 43h12v1h-12zM118 39h6v6h-6zM46 44h8v1h-8zM189 44h6v1h-6zM196 44h11v1h-11zM228 44h15v1h-15zM107 43h4v3h-4zM114 45h10v1h-10zM189 45h5v1h-5zM195 45h12v1h-12zM225 45h1v1h-1zM227 45h17v1h-17zM139 44h5v3h-5zM194 46h13v1h-13zM223 46h2v1h-2zM226 46h7v1h-7zM237 46h8v1h-8zM246 46h1v1h-1zM118 46h6v2h-6zM189 46h4v2h-4zM0 47h13v1h-13zM194 47h12v1h-12zM222 47h1v1h-1zM225 47h8v1h-8zM237 47h9v1h-9zM53 45h1v4h-1zM107 46h5v3h-5zM234 46h2v3h-2zM13 48h27v1h-27zM114 48h10v1h-10zM189 48h3v1h-3zM193 48h13v1h-13zM223 48h10v1h-10zM237 48h11v1h-11zM325 15h1v35h-1zM265 30h2v20h-2zM276 30h6v20h-6zM268 31h7v19h-7zM146 42h1v8h-1zM40 49h14v1h-14zM107 49h1v1h-1zM109 49h4v1h-4zM189 49h2v1h-2zM192 49h14v1h-14zM187 0h1v51h-1zM283 0h1v51h-1zM99 41h5v10h-5zM105 41h1v10h-1zM148 41h1v10h-1zM150 41h5v10h-5zM140 47h4v4h-4zM108 50h7v1h-7zM53 50h1v2h-1zM108 51h6v1h-6zM141 51h3v1h-3zM187 51h97v1h-97zM118 49h6v4h-6zM145 50h1v3h-1zM0 52h54v1h-54zM108 52h1v1h-1zM110 52h2v1h-2zM140 52h4v1h-4zM129 39h5v15h-5zM101 51h4v3h-4zM106 51h1v3h-1zM147 51h1v3h-1zM149 51h4v3h-4zM108 53h4v1h-4zM118 53h7v1h-7zM140 53h3v1h-3zM144 53h2v1h-2zM101 54h5v1h-5zM117 54h9v1h-9zM128 54h6v1h-6zM140 54h2v1h-2zM144 54h1v1h-1zM148 54h5v1h-5zM53 53h1v3h-1zM107 54h1v2h-1zM109 54h3v2h-3zM146 54h1v2h-1zM102 55h4v1h-4zM116 55h18v1h-18zM143 55h2v1h-2zM148 55h4v1h-4zM139 55h3v2h-3zM44 56h10v1h-10zM102 56h5v1h-5zM110 56h1v1h-1zM119 56h15v1h-15zM143 56h1v1h-1zM147 56h5v1h-5zM108 56h1v2h-1zM145 56h1v2h-1zM27 57h17v1h-17zM103 57h4v1h-4zM111 57h1v1h-1zM121 57h8v1h-8zM130 57h4v1h-4zM139 57h2v1h-2zM142 57h1v1h-1zM147 57h4v1h-4zM53 57h1v2h-1zM9 58h18v1h-18zM103 58h5v1h-5zM109 58h1v1h-1zM111 58h2v1h-2zM122 58h6v1h-6zM131 58h4v1h-4zM141 58h2v1h-2zM144 58h1v1h-1zM146 58h5v1h-5zM0 59h9v1h-9zM44 59h10v1h-10zM104 59h4v1h-4zM110 59h1v1h-1zM112 59h2v1h-2zM123 59h4v1h-4zM133 59h3v1h-3zM140 59h2v1h-2zM143 59h1v1h-1zM146 59h4v1h-4zM26 60h18v1h-18zM104 60h5v1h-5zM110 60h2v1h-2zM113 60h2v1h-2zM135 60h1v1h-1zM139 60h2v1h-2zM142 60h2v1h-2zM145 60h5v1h-5zM9 61h17v1h-17zM105 61h5v1h-5zM111 61h2v1h-2zM114 61h2v1h-2zM138 61h2v1h-2zM141 61h2v1h-2zM144 61h5v1h-5zM0 62h9v1h-9zM106 62h5v1h-5zM112 62h2v1h-2zM116 62h2v1h-2zM136 62h2v1h-2zM140 62h2v1h-2zM143 62h5v1h-5zM106 63h6v1h-6zM114 63h1v1h-1zM117 63h3v1h-3zM134 63h3v1h-3zM139 63h1v1h-1zM142 63h6v1h-6zM53 60h1v5h-1zM107 64h6v1h-6zM115 64h2v1h-2zM119 64h4v1h-4zM131 64h4v1h-4zM137 64h2v1h-2zM141 64h6v1h-6zM49 65h5v1h-5zM108 65h7v1h-7zM117 65h2v1h-2zM123 65h8v1h-8zM135 65h2v1h-2zM139 65h7v1h-7zM41 66h8v1h-8zM109 66h8v1h-8zM119 66h3v1h-3zM132 66h3v1h-3zM137 66h8v1h-8zM53 66h1v2h-1zM34 67h7v1h-7zM111 67h8v1h-8zM122 67h10v1h-10zM135 67h8v1h-8zM26 68h8v1h-8zM49 68h5v1h-5zM112 68h10v1h-10zM132 68h10v1h-10zM19 69h7v1h-7zM41 69h8v1h-8zM114 69h26v1h-26zM12 70h7v1h-7zM34 70h7v1h-7zM116 70h22v1h-22zM99 51h1v21h-1zM154 51h1v21h-1zM4 71h8v1h-8zM27 71h7v1h-7zM118 71h18v1h-18zM0 72h4v1h-4zM19 72h8v1h-8zM99 72h56v1h-56zM12 73h7v1h-7zM4 74h8v1h-8zM53 69h1v7h-1zM0 75h4v1h-4zM49 76h5v1h-5zM43 77h6v1h-6zM414 24h1v55h-1zM53 77h1v2h-1zM36 78h7v1h-7zM30 79h6v1h-6zM49 79h5v1h-5zM23 80h7v1h-7zM43 80h6v1h-6zM17 81h6v1h-6zM36 81h7v1h-7zM10 82h7v1h-7zM30 82h6v1h-6zM4 83h6v1h-6zM23 83h7v1h-7zM0 84h4v1h-4zM17 84h6v1h-6zM324 50h1v36h-1zM10 85h7v1h-7zM4 86h6v1h-6zM0 87h4v1h-4zM53 80h1v9h-1zM50 89h4v1h-4zM205 89h68v1h-68zM45 90h5v1h-5zM199 90h79v1h-79zM53 90h1v2h-1zM41 91h4v1h-4zM126 91h33v1h-33zM195 91h11v1h-11zM272 91h11v1h-11zM36 92h5v1h-5zM50 92h4v1h-4zM124 92h15v1h-15zM156 92h3v1h-3zM191 92h9v1h-9zM277 92h10v1h-10zM31 93h5v1h-5zM45 93h5v1h-5zM122 93h20v1h-20zM155 93h1v1h-1zM188 93h8v1h-8zM282 93h8v1h-8zM26 94h5v1h-5zM41 94h4v1h-4zM120 94h24v1h-24zM154 94h1v1h-1zM186 94h6v1h-6zM286 94h6v1h-6zM22 95h4v1h-4zM36 95h5v1h-5zM118 95h27v1h-27zM152 95h2v1h-2zM183 95h6v1h-6zM289 95h6v1h-6zM17 96h5v1h-5zM31 96h5v1h-5zM116 96h2v1h-2zM119 96h8v1h-8zM137 96h10v1h-10zM151 96h1v1h-1zM181 96h5v1h-5zM292 96h5v1h-5zM12 97h5v1h-5zM27 97h4v1h-4zM113 97h3v1h-3zM117 97h7v1h-7zM132 97h1v1h-1zM140 97h8v1h-8zM152 97h1v1h-1zM180 97h4v1h-4zM294 97h5v1h-5zM8 98h4v1h-4zM22 98h5v1h-5zM111 98h2v1h-2zM116 98h6v1h-6zM142 98h7v1h-7zM179 98h3v1h-3zM296 98h4v1h-4zM153 98h1v2h-1zM3 99h5v1h-5zM17 99h5v1h-5zM109 99h2v1h-2zM115 99h6v1h-6zM129 99h1v1h-1zM141 99h1v1h-1zM143 99h8v1h-8zM178 99h124v1h-124zM0 100h3v1h-3zM12 100h5v1h-5zM107 100h2v1h-2zM114 100h5v1h-5zM145 100h7v1h-7zM154 100h1v1h-1zM177 100h126v1h-126zM53 93h1v9h-1zM8 101h4v1h-4zM105 101h2v1h-2zM113 101h5v1h-5zM123 101h1v1h-1zM146 101h7v1h-7zM155 101h1v1h-1zM323 86h1v17h-1zM3 102h5v1h-5zM51 102h3v1h-3zM102 102h3v1h-3zM112 102h5v1h-5zM147 102h7v1h-7zM158 93h1v11h-1zM156 102h1v2h-1zM179 102h122v2h-122zM0 103h3v1h-3zM47 103h4v1h-4zM100 103h2v1h-2zM111 103h5v1h-5zM140 103h1v1h-1zM148 103h7v1h-7zM322 103h15v1h-15zM53 103h1v2h-1zM43 104h4v1h-4zM98 104h2v1h-2zM110 104h5v1h-5zM116 104h1v1h-1zM147 104h1v1h-1zM149 104h7v1h-7zM157 104h2v1h-2zM179 104h3v1h-3zM298 104h3v1h-3zM337 104h30v1h-30zM413 79h1v27h-1zM40 105h3v1h-3zM51 105h3v1h-3zM96 105h2v1h-2zM109 105h5v1h-5zM136 105h1v1h-1zM150 105h7v1h-7zM367 105h30v1h-30zM158 105h1v2h-1zM36 106h4v1h-4zM47 106h4v1h-4zM94 106h2v1h-2zM109 106h4v1h-4zM121 106h1v1h-1zM151 106h6v1h-6zM397 106h17v1h-17zM32 107h4v1h-4zM43 107h4v1h-4zM92 107h2v1h-2zM108 107h4v1h-4zM130 107h1v1h-1zM152 107h7v1h-7zM28 108h4v1h-4zM39 108h4v1h-4zM90 108h17v1h-17zM108 108h3v1h-3zM141 108h1v1h-1zM151 108h1v1h-1zM153 108h6v1h-6zM25 109h3v1h-3zM36 109h3v1h-3zM107 109h4v1h-4zM113 109h1v1h-1zM118 109h1v1h-1zM154 109h5v1h-5zM21 110h4v1h-4zM32 110h4v1h-4zM107 110h3v1h-3zM154 110h6v1h-6zM17 111h4v1h-4zM28 111h4v1h-4zM93 111h17v1h-17zM155 111h6v2h-6zM13 112h4v1h-4zM25 112h3v1h-3zM106 112h3v1h-3zM138 112h1v1h-1zM10 113h3v1h-3zM21 113h4v1h-4zM105 113h4v1h-4zM152 113h1v1h-1zM156 113h6v1h-6zM53 106h1v9h-1zM6 114h4v1h-4zM17 114h4v1h-4zM114 114h1v1h-1zM128 114h1v1h-1zM157 114h5v1h-5zM105 114h3v2h-3zM2 115h4v1h-4zM14 115h3v1h-3zM51 115h3v1h-3zM157 115h6v1h-6zM0 116h2v1h-2zM10 116h4v1h-4zM48 116h3v1h-3zM95 116h13v1h-13zM158 116h5v1h-5zM6 117h4v1h-4zM44 117h4v1h-4zM95 117h12v1h-12zM122 117h1v1h-1zM158 117h6v1h-6zM2 118h4v1h-4zM41 118h3v1h-3zM111 118h1v1h-1zM159 118h5v1h-5zM103 118h4v2h-4zM0 119h2v1h-2zM38 119h3v1h-3zM145 119h1v1h-1zM159 119h6v1h-6zM35 120h3v1h-3zM117 120h1v1h-1zM155 120h11v1h-11zM95 118h2v4h-2zM103 120h3v2h-3zM31 121h4v1h-4zM48 121h3v1h-3zM154 121h13v1h-13zM28 122h3v1h-3zM45 122h3v1h-3zM95 122h10v1h-10zM129 122h1v1h-1zM133 122h1v1h-1zM153 122h14v1h-14zM25 123h3v1h-3zM42 123h3v1h-3zM95 123h9v1h-9zM153 123h15v1h-15zM22 124h3v1h-3zM39 124h3v1h-3zM102 124h2v1h-2zM122 124h1v1h-1zM153 124h16v1h-16zM18 125h4v1h-4zM36 125h3v1h-3zM102 125h1v1h-1zM113 125h1v1h-1zM93 112h1v15h-1zM15 126h3v1h-3zM33 126h3v1h-3zM101 126h2v1h-2zM12 127h3v1h-3zM30 127h3v1h-3zM93 127h9v1h-9zM139 127h1v1h-1zM9 128h3v1h-3zM26 128h4v1h-4zM5 129h4v1h-4zM23 129h3v1h-3zM145 129h1v1h-1zM2 130h3v1h-3zM20 130h3v1h-3zM105 130h1v1h-1zM127 130h1v1h-1zM137 130h1v1h-1zM0 131h2v1h-2zM17 131h3v1h-3zM114 131h1v1h-1zM14 132h3v1h-3zM119 132h1v1h-1zM153 125h17v9h-17zM11 133h3v1h-3zM8 134h3v1h-3zM152 134h18v1h-18zM65 0h2v136h-2zM57 17h1v119h-1zM90 109h1v27h-1zM101 128h1v8h-1zM5 135h3v1h-3zM135 135h1v1h-1zM2 136h3v1h-3zM57 136h79v1h-79zM0 137h2v1h-2zM57 137h1v1h-1zM135 137h7v1h-7zM153 135h17v4h-17zM56 138h1v1h-1zM142 138h7v1h-7zM53 116h1v24h-1zM55 139h1v1h-1zM148 139h22v1h-22zM53 140h2v1h-2zM155 140h2v1h-2zM158 140h1v1h-1zM170 140h1v1h-1zM171 141h1v1h-1zM53 141h1v2h-1zM159 141h1v2h-1zM172 142h2v1h-2zM176 101h2v43h-2zM52 143h1v1h-1zM160 143h1v1h-1zM174 143h1v1h-1zM51 144h1v1h-1zM175 144h3v1h-3zM161 144h1v2h-1zM162 146h1v1h-1zM302 101h2v57h-2zM302 158h59v1h-59zM302 159h60v1h-60zM360 160h3v1h-3zM179 105h2v57h-2zM299 105h2v57h-2zM361 161h3v1h-3zM179 162h3v1h-3zM298 162h3v1h-3zM362 162h3v1h-3zM363 163h3v1h-3zM179 163h122v2h-122zM364 164h3v1h-3zM365 165h3v1h-3zM176 145h2v22h-2zM302 160h2v7h-2zM366 166h3v1h-3zM367 167h3v1h-3zM176 167h4v2h-4zM300 167h2v2h-2zM368 168h3v1h-3zM369 169h3v1h-3zM370 170h3v1h-3zM186 169h114v3h-114zM371 171h3v1h-3zM290 172h10v1h-10zM372 172h3v1h-3zM295 173h10v1h-10zM373 173h3v1h-3zM305 174h9v1h-9zM374 174h3v1h-3zM314 175h9v1h-9zM375 175h3v1h-3zM200 176h107v1h-107zM323 176h9v1h-9zM376 176h3v1h-3zM200 177h108v1h-108zM332 177h6v1h-6zM377 177h3v1h-3zM25 178h1v1h-1zM305 178h3v1h-3zM338 178h3v1h-3zM378 178h3v1h-3zM23 179h2v1h-2zM200 179h103v1h-103zM341 179h2v1h-2zM379 179h3v1h-3zM306 179h3v2h-3zM21 180h2v1h-2zM200 180h104v1h-104zM343 180h1v1h-1zM380 180h3v1h-3zM20 181h1v1h-1zM292 181h1v1h-1zM302 181h2v1h-2zM344 181h2v1h-2zM381 181h3v1h-3zM284 181h1v2h-1zM307 181h3v2h-3zM18 182h2v1h-2zM346 182h1v1h-1zM382 182h3v1h-3zM293 182h1v2h-1zM303 182h2v2h-2zM16 183h2v1h-2zM308 183h3v1h-3zM347 183h1v1h-1zM383 183h3v1h-3zM285 183h1v2h-1zM14 184h2v1h-2zM294 184h1v1h-1zM304 184h2v1h-2zM309 184h2v1h-2zM384 184h3v1h-3zM348 184h1v2h-1zM13 185h1v1h-1zM286 185h21v1h-21zM309 185h3v1h-3zM385 185h3v1h-3zM11 186h2v1h-2zM305 186h2v1h-2zM310 186h2v1h-2zM349 186h1v1h-1zM386 186h3v1h-3zM286 186h1v2h-1zM295 186h1v2h-1zM9 187h2v1h-2zM25 187h1v1h-1zM306 187h1v1h-1zM310 187h3v1h-3zM348 187h2v1h-2zM387 187h3v1h-3zM7 188h2v1h-2zM24 188h1v1h-1zM306 188h2v1h-2zM311 188h2v1h-2zM346 188h2v1h-2zM350 188h3v1h-3zM388 188h3v1h-3zM287 188h1v2h-1zM296 188h1v2h-1zM5 189h2v1h-2zM22 189h2v1h-2zM307 189h1v1h-1zM311 189h3v1h-3zM353 189h1v1h-1zM388 189h4v1h-4zM4 190h1v1h-1zM21 190h1v1h-1zM307 190h2v1h-2zM354 190h1v1h-1zM389 190h4v1h-4zM288 190h1v2h-1zM297 190h1v2h-1zM312 190h2v2h-2zM2 191h2v1h-2zM19 191h2v1h-2zM308 191h1v1h-1zM349 191h5v1h-5zM355 191h1v1h-1zM390 191h4v1h-4zM345 189h1v4h-1zM0 192h2v1h-2zM18 192h1v1h-1zM276 192h35v1h-35zM347 192h2v1h-2zM356 192h1v1h-1zM391 192h4v1h-4zM313 192h2v2h-2zM16 193h2v1h-2zM277 193h1v1h-1zM298 193h1v1h-1zM309 193h1v1h-1zM345 193h2v1h-2zM357 193h1v1h-1zM392 193h4v1h-4zM15 194h1v1h-1zM309 194h2v1h-2zM393 194h4v1h-4zM289 193h1v3h-1zM299 194h1v2h-1zM314 194h2v2h-2zM345 194h1v2h-1zM358 194h1v2h-1zM13 195h2v1h-2zM310 195h1v1h-1zM394 195h4v1h-4zM12 196h1v1h-1zM315 196h2v1h-2zM395 196h4v1h-4zM278 194h1v4h-1zM290 196h1v2h-1zM300 196h1v2h-1zM311 196h1v2h-1zM346 196h1v2h-1zM10 197h2v1h-2zM316 197h1v1h-1zM396 197h4v1h-4zM359 196h1v3h-1zM9 198h1v1h-1zM279 198h1v1h-1zM291 198h1v1h-1zM301 198h1v1h-1zM312 198h1v1h-1zM316 198h2v1h-2zM397 198h4v1h-4zM347 198h1v2h-1zM7 199h2v1h-2zM200 199h113v1h-113zM317 199h1v1h-1zM354 199h6v1h-6zM398 199h4v1h-4zM6 200h1v1h-1zM200 200h114v1h-114zM317 200h2v1h-2zM348 200h6v1h-6zM399 200h4v1h-4zM4 201h2v1h-2zM318 201h1v1h-1zM400 201h4v1h-4zM3 202h1v1h-1zM401 202h4v1h-4zM200 202h120v2h-120zM1 203h2v1h-2zM402 203h4v1h-4zM0 204h1v1h-1zM403 204h4v1h-4zM404 205h4v1h-4zM405 206h4v1h-4zM406 207h4v1h-4zM319 204h2v5h-2zM407 208h4v1h-4zM408 209h4v1h-4zM200 209h121v2h-121zM409 210h4v1h-4zM410 211h4v1h-4zM411 212h4v1h-4zM412 213h4v1h-4zM413 214h4v1h-4zM414 215h4v1h-4zM415 216h4v1h-4zM416 217h4v1h-4zM417 218h4v1h-4zM174 205h1v15h-1zM418 219h4v1h-4zM174 220h249v2h-249zM174 222h1v10h-1zM421 222h2v10h-2zM161 205h1v29h-1zM174 232h249v2h-249zM162 234h1v10h-1zM175 234h1v10h-1zM163 244h1v10h-1zM176 244h1v10h-1zM164 254h1v10h-1zM177 254h1v10h-1zM50 145h1v125h-1zM343 234h13v36h-13zM373 234h2v36h-2zM390 234h2v36h-2zM165 264h1v6h-1zM178 264h1v6h-1z"/><path fill="#555568" d="M206 0h21v1h-21zM228 0h1v1h-1zM230 0h1v1h-1zM232 0h1v1h-1zM234 0h1v1h-1zM236 0h1v1h-1zM238 0h1v1h-1zM240 0h1v1h-1zM242 0h1v1h-1zM244 0h21v1h-21zM206 1h24v1h-24zM231 1h1v1h-1zM233 1h1v1h-1zM235 1h1v1h-1zM237 1h1v1h-1zM239 1h1v1h-1zM241 1h24v1h-24zM206 2h21v1h-21zM228 2h1v1h-1zM230 2h1v1h-1zM232 2h1v1h-1zM234 2h1v1h-1zM236 2h1v1h-1zM238 2h1v1h-1zM240 2h1v1h-1zM242 2h1v1h-1zM244 2h21v1h-21zM206 3h34v1h-34zM241 3h24v1h-24zM206 4h33v1h-33zM240 4h1v1h-1zM242 4h1v1h-1zM244 4h21v1h-21zM206 5h34v1h-34zM241 5h24v1h-24zM206 6h33v1h-33zM240 6h1v1h-1zM242 6h1v1h-1zM244 6h21v1h-21zM206 7h34v1h-34zM241 7h24v1h-24zM206 8h33v1h-33zM240 8h1v1h-1zM242 8h1v1h-1zM244 8h21v1h-21zM206 9h34v1h-34zM241 9h24v1h-24zM206 10h21v1h-21zM228 10h1v1h-1zM230 10h1v1h-1zM232 10h1v1h-1zM234 10h1v1h-1zM236 10h1v1h-1zM238 10h1v1h-1zM240 10h1v1h-1zM242 10h1v1h-1zM244 10h21v1h-21zM198 10h2v2h-2zM206 11h24v1h-24zM231 11h1v1h-1zM233 11h1v1h-1zM235 11h1v1h-1zM237 11h1v1h-1zM239 11h1v1h-1zM241 11h17v1h-17zM268 11h9v1h-9zM193 12h12v1h-12zM206 12h19v1h-19zM226 12h1v1h-1zM228 12h1v1h-1zM230 12h1v1h-1zM232 12h1v1h-1zM234 12h1v1h-1zM236 12h1v1h-1zM238 12h1v1h-1zM240 12h1v1h-1zM242 12h1v1h-1zM244 12h1v1h-1zM246 12h19v1h-19zM282 0h1v14h-1zM206 13h4v1h-4zM220 13h10v1h-10zM231 13h1v1h-1zM233 13h1v1h-1zM235 13h1v1h-1zM237 13h1v1h-1zM239 13h1v1h-1zM241 13h24v1h-24zM206 14h5v1h-5zM220 14h5v1h-5zM226 14h1v1h-1zM228 14h1v1h-1zM230 14h1v1h-1zM232 14h1v1h-1zM234 14h1v1h-1zM236 14h1v1h-1zM238 14h1v1h-1zM240 14h1v1h-1zM242 14h1v1h-1zM244 14h1v1h-1zM246 14h15v1h-15zM219 15h11v1h-11zM231 15h1v1h-1zM233 15h1v1h-1zM235 15h1v1h-1zM237 15h1v1h-1zM239 15h1v1h-1zM241 15h16v1h-16zM206 15h6v2h-6zM217 16h8v1h-8zM226 16h1v1h-1zM228 16h1v1h-1zM230 16h1v1h-1zM232 16h1v1h-1zM234 16h1v1h-1zM236 16h1v1h-1zM238 16h1v1h-1zM240 16h1v1h-1zM242 16h1v1h-1zM244 16h1v1h-1zM246 16h10v1h-10zM268 14h15v4h-15zM0 17h2v1h-2zM216 17h14v1h-14zM231 17h1v1h-1zM233 17h1v1h-1zM235 17h1v1h-1zM237 17h1v1h-1zM239 17h1v1h-1zM241 17h14v1h-14zM206 17h5v2h-5zM0 18h7v1h-7zM215 18h8v1h-8zM224 18h1v1h-1zM226 18h1v1h-1zM228 18h1v1h-1zM230 18h1v1h-1zM232 18h1v1h-1zM234 18h1v1h-1zM236 18h1v1h-1zM238 18h1v1h-1zM240 18h1v1h-1zM242 18h1v1h-1zM244 18h1v1h-1zM246 18h1v1h-1zM248 18h7v1h-7zM268 18h12v1h-12zM0 19h11v1h-11zM206 19h4v1h-4zM214 19h16v1h-16zM231 19h1v1h-1zM233 19h1v1h-1zM235 19h1v1h-1zM237 19h1v1h-1zM239 19h1v1h-1zM241 19h14v1h-14zM268 19h9v1h-9zM0 20h15v1h-15zM100 20h18v1h-18zM136 20h18v1h-18zM213 20h10v1h-10zM224 20h1v1h-1zM226 20h1v1h-1zM228 20h1v1h-1zM230 20h1v1h-1zM232 20h1v1h-1zM234 20h1v1h-1zM236 20h1v1h-1zM238 20h1v1h-1zM240 20h1v1h-1zM242 20h1v1h-1zM244 20h1v1h-1zM246 20h1v1h-1zM248 20h8v1h-8zM267 20h7v1h-7zM206 20h3v2h-3zM0 21h20v1h-20zM100 21h16v1h-16zM138 21h16v1h-16zM212 21h18v1h-18zM231 21h1v1h-1zM233 21h1v1h-1zM235 21h1v1h-1zM237 21h1v1h-1zM239 21h1v1h-1zM241 21h16v1h-16zM266 21h5v1h-5zM0 22h24v1h-24zM100 22h14v1h-14zM140 22h14v1h-14zM211 22h1v1h-1zM213 22h10v1h-10zM224 22h1v1h-1zM226 22h1v1h-1zM228 22h1v1h-1zM230 22h1v1h-1zM232 22h1v1h-1zM234 22h1v1h-1zM236 22h1v1h-1zM238 22h1v1h-1zM240 22h1v1h-1zM242 22h1v1h-1zM244 22h1v1h-1zM246 22h1v1h-1zM248 22h12v1h-12zM261 22h7v1h-7zM206 22h2v2h-2zM0 23h29v1h-29zM100 23h12v1h-12zM142 23h12v1h-12zM211 23h17v1h-17zM229 23h1v1h-1zM239 23h1v1h-1zM241 23h1v1h-1zM243 23h8v1h-8zM257 23h2v2h-2zM0 24h33v1h-33zM100 24h11v1h-11zM143 24h11v1h-11zM210 24h1v1h-1zM212 24h9v1h-9zM222 24h1v1h-1zM224 24h1v1h-1zM226 24h1v1h-1zM228 24h1v1h-1zM240 24h1v1h-1zM242 24h1v1h-1zM244 24h1v1h-1zM246 24h1v1h-1zM248 24h1v1h-1zM250 24h1v1h-1zM262 23h3v3h-3zM0 25h38v1h-38zM100 25h9v1h-9zM145 25h9v1h-9zM209 25h1v1h-1zM212 25h16v1h-16zM241 25h1v1h-1zM243 25h8v1h-8zM206 24h1v3h-1zM252 24h4v3h-4zM257 25h1v2h-1zM0 26h42v1h-42zM100 26h8v1h-8zM146 26h8v1h-8zM211 26h10v1h-10zM222 26h1v1h-1zM224 26h1v1h-1zM226 26h1v1h-1zM228 26h1v1h-1zM242 26h1v1h-1zM244 26h1v1h-1zM246 26h1v1h-1zM248 26h1v1h-1zM250 26h1v1h-1zM208 26h1v2h-1zM4 27h42v1h-42zM100 27h7v1h-7zM147 27h7v1h-7zM211 27h15v1h-15zM227 27h1v1h-1zM243 27h1v1h-1zM245 27h6v1h-6zM252 27h5v2h-5zM0 28h4v1h-4zM12 28h39v1h-39zM207 28h1v1h-1zM211 28h10v1h-10zM222 28h1v1h-1zM224 28h1v1h-1zM226 28h1v1h-1zM244 28h1v1h-1zM246 28h1v1h-1zM248 28h1v1h-1zM250 28h1v1h-1zM204 13h1v17h-1zM100 28h6v2h-6zM148 28h6v2h-6zM0 29h12v1h-12zM19 29h34v1h-34zM206 29h1v1h-1zM211 29h15v1h-15zM227 29h1v1h-1zM243 29h1v1h-1zM245 29h6v1h-6zM261 26h4v5h-4zM252 29h4v2h-4zM5 30h14v1h-14zM27 30h26v1h-26zM100 30h5v1h-5zM149 30h5v1h-5zM210 30h11v1h-11zM222 30h1v1h-1zM224 30h1v1h-1zM226 30h1v1h-1zM244 30h1v1h-1zM246 30h1v1h-1zM248 30h1v1h-1zM250 30h1v1h-1zM267 30h9v1h-9zM204 30h2v2h-2zM0 31h5v1h-5zM13 31h14v1h-14zM34 31h19v1h-19zM210 31h14v1h-14zM225 31h1v1h-1zM227 31h1v1h-1zM243 31h1v1h-1zM245 31h1v1h-1zM247 31h4v1h-4zM100 31h4v2h-4zM150 31h4v2h-4zM252 31h3v2h-3zM0 32h13v1h-13zM22 32h12v1h-12zM41 32h12v1h-12zM204 32h1v1h-1zM210 32h11v1h-11zM222 32h1v1h-1zM224 32h1v1h-1zM226 32h1v1h-1zM244 32h1v1h-1zM246 32h1v1h-1zM248 32h1v1h-1zM250 32h1v1h-1zM0 33h22v1h-22zM31 33h10v1h-10zM49 33h4v1h-4zM203 33h2v1h-2zM210 33h12v1h-12zM223 33h1v1h-1zM225 33h1v1h-1zM245 33h1v1h-1zM247 33h1v1h-1zM249 33h5v1h-5zM100 33h3v2h-3zM151 33h3v2h-3zM0 34h31v1h-31zM40 34h9v1h-9zM209 34h12v1h-12zM222 34h1v1h-1zM224 34h1v1h-1zM226 34h1v1h-1zM228 34h1v1h-1zM230 34h1v1h-1zM240 34h1v1h-1zM242 34h1v1h-1zM244 34h1v1h-1zM246 34h1v1h-1zM248 34h1v1h-1zM250 34h4v1h-4zM260 31h5v5h-5zM202 34h1v2h-1zM0 35h40v1h-40zM48 35h5v1h-5zM209 35h13v1h-13zM223 35h1v1h-1zM225 35h1v1h-1zM227 35h1v1h-1zM229 35h1v1h-1zM241 35h1v1h-1zM243 35h1v1h-1zM245 35h1v1h-1zM247 35h1v1h-1zM249 35h5v1h-5zM100 35h2v2h-2zM152 35h2v2h-2zM0 36h48v1h-48zM201 36h1v1h-1zM209 36h10v1h-10zM220 36h1v1h-1zM222 36h1v1h-1zM224 36h1v1h-1zM226 36h1v1h-1zM228 36h1v1h-1zM230 36h1v1h-1zM240 36h1v1h-1zM242 36h1v1h-1zM244 36h1v1h-1zM246 36h1v1h-1zM248 36h1v1h-1zM250 36h1v1h-1zM252 36h1v1h-1zM7 37h46v1h-46zM200 37h1v1h-1zM209 37h11v1h-11zM221 37h1v1h-1zM223 37h1v1h-1zM225 37h1v1h-1zM227 37h1v1h-1zM229 37h1v1h-1zM239 37h1v1h-1zM241 37h1v1h-1zM243 37h1v1h-1zM245 37h1v1h-1zM247 37h1v1h-1zM249 37h1v1h-1zM251 37h2v1h-2zM0 38h7v1h-7zM20 38h33v1h-33zM208 38h9v1h-9zM218 38h1v1h-1zM220 38h1v1h-1zM222 38h1v1h-1zM224 38h1v1h-1zM226 38h1v1h-1zM228 38h1v1h-1zM230 38h1v1h-1zM240 38h1v1h-1zM242 38h1v1h-1zM244 38h1v1h-1zM246 38h1v1h-1zM248 38h1v1h-1zM250 38h1v1h-1zM252 38h1v1h-1zM259 36h6v4h-6zM199 38h1v2h-1zM0 39h20v1h-20zM33 39h20v1h-20zM208 39h12v1h-12zM221 39h1v1h-1zM223 39h1v1h-1zM225 39h1v1h-1zM227 39h1v1h-1zM229 39h1v1h-1zM231 39h1v1h-1zM239 39h1v1h-1zM241 39h1v1h-1zM243 39h1v1h-1zM245 39h1v1h-1zM247 39h1v1h-1zM249 39h1v1h-1zM251 39h1v1h-1zM196 13h1v28h-1zM100 37h1v4h-1zM153 37h1v4h-1zM7 40h26v1h-26zM46 40h7v1h-7zM198 40h1v1h-1zM208 40h9v1h-9zM218 40h1v1h-1zM220 40h1v1h-1zM222 40h1v1h-1zM224 40h1v1h-1zM226 40h1v1h-1zM228 40h1v1h-1zM230 40h1v1h-1zM238 40h1v1h-1zM240 40h1v1h-1zM242 40h1v1h-1zM244 40h1v1h-1zM246 40h1v1h-1zM248 40h1v1h-1zM250 40h1v1h-1zM0 41h7v1h-7zM20 41h26v1h-26zM196 41h2v1h-2zM208 41h10v1h-10zM219 41h1v1h-1zM221 41h1v1h-1zM223 41h1v1h-1zM225 41h1v1h-1zM227 41h1v1h-1zM229 41h1v1h-1zM231 41h1v1h-1zM239 41h1v1h-1zM241 41h1v1h-1zM243 41h1v1h-1zM245 41h1v1h-1zM247 41h1v1h-1zM249 41h1v1h-1zM251 41h1v1h-1zM193 13h1v30h-1zM204 34h1v9h-1zM0 42h20v1h-20zM33 42h20v1h-20zM196 42h1v1h-1zM208 42h7v1h-7zM216 42h1v1h-1zM218 42h1v1h-1zM220 42h1v1h-1zM222 42h1v1h-1zM224 42h1v1h-1zM226 42h1v1h-1zM228 42h1v1h-1zM230 42h1v1h-1zM240 42h1v1h-1zM242 42h1v1h-1zM244 42h1v1h-1zM246 42h1v1h-1zM248 42h1v1h-1zM250 42h1v1h-1zM258 40h7v4h-7zM0 43h33v1h-33zM46 43h7v1h-7zM193 43h12v1h-12zM207 43h9v1h-9zM217 43h1v1h-1zM219 43h1v1h-1zM221 43h1v1h-1zM223 43h1v1h-1zM225 43h1v1h-1zM227 43h1v1h-1zM241 43h1v1h-1zM243 43h1v1h-1zM245 43h1v1h-1zM247 43h1v1h-1zM249 43h1v1h-1zM251 43h1v1h-1zM0 44h46v1h-46zM195 44h1v1h-1zM207 44h4v1h-4zM212 44h1v1h-1zM214 44h1v1h-1zM216 44h1v1h-1zM218 44h1v1h-1zM220 44h1v1h-1zM222 44h1v1h-1zM224 44h1v1h-1zM226 44h1v1h-1zM244 44h1v1h-1zM246 44h1v1h-1zM248 44h1v1h-1zM250 44h1v1h-1zM258 44h1v1h-1zM260 44h5v1h-5zM194 45h1v1h-1zM207 45h9v1h-9zM217 45h1v1h-1zM219 45h1v1h-1zM221 45h1v1h-1zM223 45h1v1h-1zM245 45h1v1h-1zM247 45h1v1h-1zM249 45h1v1h-1zM251 45h1v1h-1zM258 45h7v1h-7zM0 45h53v2h-53zM207 46h4v1h-4zM212 46h1v1h-1zM214 46h1v1h-1zM216 46h1v1h-1zM218 46h1v1h-1zM220 46h1v1h-1zM222 46h1v1h-1zM248 46h1v1h-1zM250 46h1v1h-1zM252 46h1v1h-1zM258 46h1v1h-1zM260 46h5v1h-5zM193 46h1v2h-1zM13 47h40v1h-40zM206 47h8v1h-8zM215 47h1v1h-1zM217 47h1v1h-1zM219 47h1v1h-1zM221 47h1v1h-1zM249 47h1v1h-1zM251 47h1v1h-1zM258 47h7v1h-7zM0 48h13v1h-13zM40 48h13v1h-13zM192 48h1v1h-1zM206 48h5v1h-5zM212 48h1v1h-1zM214 48h1v1h-1zM216 48h1v1h-1zM218 48h1v1h-1zM252 48h1v1h-1zM258 48h1v1h-1zM260 48h5v1h-5zM188 0h1v50h-1zM282 18h1v32h-1zM267 31h1v19h-1zM275 31h1v19h-1zM0 49h40v1h-40zM191 49h1v1h-1zM206 49h8v1h-8zM215 49h1v1h-1zM217 49h1v1h-1zM223 49h1v1h-1zM225 49h1v1h-1zM227 49h1v1h-1zM229 49h1v1h-1zM231 49h1v1h-1zM239 49h1v1h-1zM241 49h1v1h-1zM243 49h1v1h-1zM245 49h1v1h-1zM247 49h1v1h-1zM253 49h1v1h-1zM255 49h1v1h-1zM257 49h8v1h-8zM188 50h95v1h-95zM0 50h53v2h-53zM100 51h1v4h-1zM153 51h1v4h-1zM0 53h53v3h-53zM100 55h2v2h-2zM152 55h2v2h-2zM0 56h44v1h-44zM0 57h27v1h-27zM44 57h9v1h-9zM100 57h3v2h-3zM151 57h3v2h-3zM0 58h9v1h-9zM27 58h26v1h-26zM9 59h35v1h-35zM100 59h4v2h-4zM150 59h4v2h-4zM0 60h26v1h-26zM44 60h9v1h-9zM0 61h9v1h-9zM26 61h27v1h-27zM100 61h5v1h-5zM149 61h5v1h-5zM9 62h44v1h-44zM100 62h6v2h-6zM148 62h6v2h-6zM0 63h53v2h-53zM100 64h7v1h-7zM147 64h7v1h-7zM0 65h49v1h-49zM100 65h8v1h-8zM146 65h8v1h-8zM0 66h41v1h-41zM49 66h4v1h-4zM100 66h9v1h-9zM145 66h9v1h-9zM0 67h34v1h-34zM41 67h12v1h-12zM100 67h11v1h-11zM143 67h11v1h-11zM0 68h26v1h-26zM34 68h15v1h-15zM100 68h12v1h-12zM142 68h12v1h-12zM0 69h19v1h-19zM26 69h15v1h-15zM49 69h4v1h-4zM100 69h14v1h-14zM140 69h14v1h-14zM0 70h12v1h-12zM19 70h15v1h-15zM41 70h12v1h-12zM100 70h16v1h-16zM138 70h16v1h-16zM0 71h4v1h-4zM12 71h15v1h-15zM34 71h19v1h-19zM100 71h18v1h-18zM136 71h18v1h-18zM4 72h15v1h-15zM27 72h26v1h-26zM0 73h12v1h-12zM19 73h34v1h-34zM0 74h4v1h-4zM12 74h41v1h-41zM4 75h49v1h-49zM0 76h49v1h-49zM0 77h43v1h-43zM49 77h4v1h-4zM0 78h36v1h-36zM43 78h10v1h-10zM0 79h30v1h-30zM36 79h13v1h-13zM0 80h23v1h-23zM30 80h13v1h-13zM49 80h4v1h-4zM0 81h17v1h-17zM23 81h13v1h-13zM43 81h10v1h-10zM0 82h10v1h-10zM17 82h13v1h-13zM36 82h17v1h-17zM0 83h4v1h-4zM10 83h13v1h-13zM30 83h23v1h-23zM4 84h13v1h-13zM23 84h30v1h-30zM0 85h10v1h-10zM17 85h36v1h-36zM0 86h4v1h-4zM10 86h43v1h-43zM4 87h49v1h-49zM0 88h53v1h-53zM0 89h50v1h-50zM0 90h45v1h-45zM50 90h3v1h-3zM0 91h41v1h-41zM45 91h8v1h-8zM0 92h36v1h-36zM41 92h9v1h-9zM0 93h31v1h-31zM36 93h9v1h-9zM50 93h3v1h-3zM0 94h26v1h-26zM31 94h10v1h-10zM45 94h8v1h-8zM0 95h22v1h-22zM26 95h10v1h-10zM41 95h12v1h-12zM0 96h17v1h-17zM22 96h9v1h-9zM36 96h17v1h-17zM0 97h12v1h-12zM17 97h10v1h-10zM31 97h22v1h-22zM0 98h8v1h-8zM12 98h10v1h-10zM27 98h26v1h-26zM0 99h3v1h-3zM8 99h9v1h-9zM22 99h31v1h-31zM3 100h9v1h-9zM17 100h36v1h-36zM0 101h8v1h-8zM12 101h41v1h-41zM0 102h3v1h-3zM8 102h43v1h-43zM3 103h44v1h-44zM51 103h2v1h-2zM0 104h43v1h-43zM47 104h6v1h-6zM0 105h40v1h-40zM43 105h8v1h-8zM0 106h36v1h-36zM40 106h7v1h-7zM51 106h2v1h-2zM0 107h32v1h-32zM36 107h7v1h-7zM47 107h6v1h-6zM0 108h28v1h-28zM32 108h7v1h-7zM43 108h10v1h-10zM0 109h25v1h-25zM28 109h8v1h-8zM39 109h14v1h-14zM0 110h21v1h-21zM25 110h7v1h-7zM36 110h17v1h-17zM0 111h17v1h-17zM21 111h7v1h-7zM32 111h21v1h-21zM0 112h13v1h-13zM17 112h8v1h-8zM28 112h25v1h-25zM0 113h10v1h-10zM13 113h8v1h-8zM25 113h28v1h-28zM0 114h6v1h-6zM10 114h7v1h-7zM21 114h32v1h-32zM0 115h2v1h-2zM6 115h8v1h-8zM17 115h34v1h-34zM2 116h8v1h-8zM14 116h34v1h-34zM51 116h2v1h-2zM0 117h6v1h-6zM10 117h34v1h-34zM48 117h5v1h-5zM0 118h2v1h-2zM6 118h35v1h-35zM44 118h9v1h-9zM2 119h36v1h-36zM41 119h12v1h-12zM0 120h35v1h-35zM38 120h15v1h-15zM0 121h31v1h-31zM35 121h13v1h-13zM0 122h28v1h-28zM31 122h14v1h-14zM0 123h25v1h-25zM28 123h14v1h-14zM0 124h22v1h-22zM25 124h14v1h-14zM0 125h18v1h-18zM22 125h14v1h-14zM0 126h15v1h-15zM18 126h15v1h-15zM0 127h12v1h-12zM15 127h15v1h-15zM0 128h9v1h-9zM12 128h14v1h-14zM0 129h5v1h-5zM9 129h14v1h-14zM0 130h2v1h-2zM5 130h15v1h-15zM2 131h15v1h-15zM0 132h14v1h-14zM0 133h11v1h-11zM0 134h8v1h-8zM0 135h5v1h-5zM0 136h2v1h-2zM157 140h1v1h-1zM159 140h11v1h-11zM158 141h1v1h-1zM160 141h11v1h-11zM51 121h2v22h-2zM160 142h12v1h-12zM159 143h1v1h-1zM161 143h13v1h-13zM160 144h1v1h-1zM162 144h13v1h-13zM162 145h14v1h-14zM24 176h1v1h-1zM22 177h3v1h-3zM21 178h4v1h-4zM200 178h105v1h-105zM19 179h4v1h-4zM303 179h3v1h-3zM17 180h4v1h-4zM304 180h2v1h-2zM15 181h5v1h-5zM304 181h3v1h-3zM13 182h5v1h-5zM305 182h2v1h-2zM12 183h4v1h-4zM305 183h3v1h-3zM10 184h4v1h-4zM306 184h3v1h-3zM8 185h5v1h-5zM307 185h2v1h-2zM6 186h5v1h-5zM307 186h3v2h-3zM4 187h5v1h-5zM347 187h1v1h-1zM3 188h4v1h-4zM348 188h2v1h-2zM308 188h3v2h-3zM1 189h4v1h-4zM346 189h7v1h-7zM0 190h4v1h-4zM346 190h8v1h-8zM309 190h3v2h-3zM0 191h2v1h-2zM346 191h3v1h-3zM354 191h1v1h-1zM311 192h2v1h-2zM346 192h1v1h-1zM349 192h7v1h-7zM310 193h3v1h-3zM347 193h10v1h-10zM311 194h3v2h-3zM346 194h12v2h-12zM312 196h3v1h-3zM347 196h12v2h-12zM312 197h4v1h-4zM313 198h3v1h-3zM348 198h11v1h-11zM313 199h4v1h-4zM348 199h5v1h-5zM314 200h3v1h-3zM200 201h118v1h-118zM200 204h119v5h-119zM175 222h246v10h-246zM162 205h12v29h-12zM163 234h12v10h-12zM164 244h12v10h-12zM163 254h1v1h-1zM165 254h12v10h-12zM164 264h1v1h-1zM375 234h15v36h-15zM166 264h12v6h-12z"/><path fill="#c0c0c0" d="M182 104h10v1h-10zM208 104h16v8h-16zM240 104h16v8h-16zM272 104h16v8h-16zM181 105h11v7h-11zM192 112h16v16h-16zM224 112h16v16h-16zM256 112h16v16h-16zM288 112h11v16h-11zM181 128h11v16h-11zM208 128h16v16h-16zM240 128h16v16h-16zM272 128h16v16h-16zM192 144h16v16h-16zM224 144h16v16h-16zM256 144h16v16h-16zM288 144h11v16h-11zM181 160h11v2h-11zM208 160h16v3h-16zM240 160h16v3h-16zM272 160h16v3h-16zM182 162h10v1h-10z"/><path fill="#808080" d="M288 104h10v1h-10zM192 104h16v8h-16zM224 104h16v8h-16zM256 104h16v8h-16zM288 105h11v7h-11zM181 112h11v16h-11zM208 112h16v16h-16zM240 112h16v16h-16zM272 112h16v16h-16zM192 128h16v16h-16zM224 128h16v16h-16zM256 128h16v16h-16zM288 128h11v16h-11zM181 144h11v16h-11zM208 144h16v16h-16zM240 144h16v16h-16zM272 144h16v16h-16zM288 160h11v2h-11zM192 160h16v3h-16zM224 160h16v3h-16zM256 160h16v3h-16zM288 162h10v1h-10z"/><g font-family="Liberation Sans, sans-serif"><text x="211.5" y="9.2" font-size="8.2" fill="#e9efec" textLength="26.5" lengthAdjust="spacingAndGlyphs">Deus</text><text x="245.5" y="9.2" font-size="8.2" fill="#e9efec" textLength="14.5" lengthAdjust="spacingAndGlyphs">Ex</text><text x="342" y="95.5" font-size="12.5" fill="#555568" font-style="italic" textLength="42" lengthAdjust="spacingAndGlyphs">SIERRA</text><text x="374.5" y="100.6" font-size="5.2" fill="#555568" font-weight="bold" textLength="23.5" lengthAdjust="spacingAndGlyphs">ONLINE</text></g></svg>
<!-- gen_timeline --><div style="left:406px;top:817px;width:30px;height:2px;background:#232323;"></div><div style="left:406px;top:793px;width:30px;height:24px;background:#000;"></div><div style="left:404px;top:795px;width:34px;height:20px;background:#000;"></div><div style="left:406px;top:795px;width:30px;height:20px;background:#434650;"></div><div style="left:406px;top:813px;width:30px;height:2px;background:#373941;"></div><div style="left:408px;top:797px;width:26px;height:14px;background:#2b2c33;"></div><div style="left:438px;top:817px;width:30px;height:2px;background:#232323;"></div><div style="left:438px;top:793px;width:30px;height:24px;background:#000;"></div><div style="left:436px;top:795px;width:34px;height:20px;background:#000;"></div><div style="left:438px;top:795px;width:30px;height:20px;background:#434650;"></div><div style="left:438px;top:813px;width:30px;height:2px;background:#373941;"></div><div style="left:440px;top:797px;width:26px;height:14px;background:#2b2c33;"></div><div style="left:470px;top:817px;width:30px;height:2px;background:#232323;"></div><div style="left:470px;top:793px;width:30px;height:24px;background:#000;"></div><div style="left:468px;top:795px;width:34px;height:20px;background:#000;"></div><div style="left:470px;top:795px;width:30px;height:20px;background:#434650;"></div><div style="left:470px;top:813px;width:30px;height:2px;background:#373941;"></div><div style="left:472px;top:797px;width:26px;height:14px;background:#2b2c33;"></div><div style="left:502px;top:817px;width:30px;height:2px;background:#232323;"></div><div style="left:502px;top:793px;width:30px;height:24px;background:#000;"></div><div style="left:500px;top:795px;width:34px;height:20px;background:#000;"></div><div style="left:502px;top:795px;width:30px;height:20px;background:#434650;"></div><div style="left:502px;top:813px;width:30px;height:2px;background:#373941;"></div><div style="left:504px;top:797px;width:26px;height:14px;background:#2b2c33;"></div><div style="left:534px;top:817px;width:30px;height:2px;background:#232323;"></div><div style="left:534px;top:793px;width:30px;height:24px;background:#000;"></div><div style="left:532px;top:795px;width:34px;height:20px;background:#000;"></div><div style="left:534px;top:795px;width:30px;height:20px;background:#434650;"></div><div style="left:534px;top:813px;width:30px;height:2px;background:#373941;"></div><div style="left:536px;top:797px;width:26px;height:14px;background:#2b2c33;"></div><svg style="left:416px;top:799px" width="10" height="10" viewBox="0 0 5 5" shape-rendering="crispEdges"><rect x="0" y="0" width="1" height="1" fill="#d8d8d8"/><rect x="4" y="0" width="1" height="1" fill="#d8d8d8"/><rect x="0" y="1" width="1" height="1" fill="#d8d8d8"/><rect x="3" y="1" width="2" height="1" fill="#d8d8d8"/><rect x="0" y="2" width="1" height="1" fill="#d8d8d8"/><rect x="2" y="2" width="3" height="1" fill="#d8d8d8"/><rect x="0" y="3" width="1" height="1" fill="#d8d8d8"/><rect x="3" y="3" width="2" height="1" fill="#d8d8d8"/><rect x="0" y="4" width="1" height="1" fill="#d8d8d8"/><rect x="4" y="4" width="1" height="1" fill="#d8d8d8"/></svg><svg style="left:448px;top:799px" width="10" height="10" viewBox="0 0 5 5" shape-rendering="crispEdges"><rect x="2" y="0" width="1" height="1" fill="#d8d8d8"/><rect x="4" y="0" width="1" height="1" fill="#d8d8d8"/><rect x="1" y="1" width="2" height="1" fill="#d8d8d8"/><rect x="4" y="1" width="1" height="1" fill="#d8d8d8"/><rect x="0" y="2" width="3" height="1" fill="#d8d8d8"/><rect x="4" y="2" width="1" height="1" fill="#d8d8d8"/><rect x="1" y="3" width="2" height="1" fill="#d8d8d8"/><rect x="4" y="3" width="1" height="1" fill="#d8d8d8"/><rect x="2" y="4" width="1" height="1" fill="#d8d8d8"/><rect x="4" y="4" width="1" height="1" fill="#d8d8d8"/></svg><svg style="left:482px;top:799px" width="6" height="10" viewBox="0 0 3 5" shape-rendering="crispEdges"><rect x="0" y="0" width="1" height="1" fill="#d8d8d8"/><rect x="0" y="1" width="2" height="1" fill="#d8d8d8"/><rect x="0" y="2" width="3" height="1" fill="#d8d8d8"/><rect x="0" y="3" width="2" height="1" fill="#d8d8d8"/><rect x="0" y="4" width="1" height="1" fill="#d8d8d8"/></svg><svg style="left:512px;top:799px" width="10" height="10" viewBox="0 0 5 5" shape-rendering="crispEdges"><rect x="0" y="0" width="1" height="1" fill="#d8d8d8"/><rect x="2" y="0" width="1" height="1" fill="#d8d8d8"/><rect x="0" y="1" width="1" height="1" fill="#d8d8d8"/><rect x="2" y="1" width="2" height="1" fill="#d8d8d8"/><rect x="0" y="2" width="1" height="1" fill="#d8d8d8"/><rect x="2" y="2" width="3" height="1" fill="#d8d8d8"/><rect x="0" y="3" width="1" height="1" fill="#d8d8d8"/><rect x="2" y="3" width="2" height="1" fill="#d8d8d8"/><rect x="0" y="4" width="1" height="1" fill="#d8d8d8"/><rect x="2" y="4" width="1" height="1" fill="#d8d8d8"/></svg><svg style="left:544px;top:799px" width="10" height="10" viewBox="0 0 5 5" shape-rendering="crispEdges"><rect x="0" y="0" width="1" height="1" fill="#d8d8d8"/><rect x="4" y="0" width="1" height="1" fill="#d8d8d8"/><rect x="0" y="1" width="2" height="1" fill="#d8d8d8"/><rect x="4" y="1" width="1" height="1" fill="#d8d8d8"/><rect x="0" y="2" width="3" height="1" fill="#d8d8d8"/><rect x="4" y="2" width="1" height="1" fill="#d8d8d8"/><rect x="0" y="3" width="2" height="1" fill="#d8d8d8"/><rect x="4" y="3" width="1" height="1" fill="#d8d8d8"/><rect x="0" y="4" width="1" height="1" fill="#d8d8d8"/><rect x="4" y="4" width="1" height="1" fill="#d8d8d8"/></svg><div style="left:404px;top:823px;width:1480px;height:178px;background:#000;"></div><div style="left:406px;top:825px;width:22px;height:22px;background:#2b2c33;"></div><div style="left:430px;top:825px;width:22px;height:22px;background:#2b2c33;"></div><div style="left:454px;top:825px;width:22px;height:22px;background:#2b2c33;"></div><div style="left:478px;top:825px;width:22px;height:22px;background:#2b2c33;"></div><div style="left:502px;top:825px;width:22px;height:22px;background:#2b2c33;"></div><div style="left:526px;top:825px;width:180px;height:22px;background:#2b2c33;"></div><svg style="left:408px;top:831px" width="16" height="12" viewBox="0 0 8 6" shape-rendering="crispEdges"><rect x="2" y="0" width="4" height="1" fill="#4f6470"/><rect x="1" y="1" width="3" height="1" fill="#4f6470"/><rect x="5" y="1" width="2" height="1" fill="#4f6470"/><rect x="0" y="2" width="1" height="1" fill="#4f6470"/><rect x="2" y="2" width="4" height="1" fill="#4f6470"/><rect x="7" y="2" width="1" height="1" fill="#4f6470"/><rect x="0" y="3" width="1" height="1" fill="#4f6470"/><rect x="3" y="3" width="2" height="1" fill="#4f6470"/><rect x="7" y="3" width="1" height="1" fill="#4f6470"/><rect x="1" y="4" width="1" height="1" fill="#4f6470"/><rect x="6" y="4" width="1" height="1" fill="#4f6470"/><rect x="2" y="5" width="4" height="1" fill="#4f6470"/></svg><svg style="left:434px;top:827px" width="12" height="14" viewBox="0 0 6 7" shape-rendering="crispEdges"><rect x="2" y="0" width="2" height="1" fill="#4f6470"/><rect x="1" y="1" width="1" height="1" fill="#4f6470"/><rect x="4" y="1" width="1" height="1" fill="#4f6470"/><rect x="1" y="2" width="1" height="1" fill="#4f6470"/><rect x="0" y="3" width="6" height="1" fill="#4f6470"/><rect x="0" y="4" width="3" height="1" fill="#4f6470"/><rect x="4" y="4" width="2" height="1" fill="#4f6470"/><rect x="0" y="5" width="3" height="1" fill="#4f6470"/><rect x="4" y="5" width="2" height="1" fill="#4f6470"/><rect x="0" y="6" width="6" height="1" fill="#4f6470"/></svg><svg style="left:456px;top:831px" width="18" height="8" viewBox="0 0 9 4" shape-rendering="crispEdges"><rect x="1" y="0" width="2" height="1" fill="#4f6470"/><rect x="6" y="0" width="2" height="1" fill="#4f6470"/><rect x="0" y="1" width="4" height="1" fill="#4f6470"/><rect x="5" y="1" width="4" height="1" fill="#4f6470"/><rect x="0" y="2" width="4" height="1" fill="#4f6470"/><rect x="5" y="2" width="4" height="1" fill="#4f6470"/><rect x="1" y="3" width="2" height="1" fill="#4f6470"/><rect x="6" y="3" width="2" height="1" fill="#4f6470"/></svg><svg style="left:482px;top:827px" width="14" height="18" viewBox="0 0 7 9" shape-rendering="crispEdges"><rect x="4" y="0" width="2" height="1" fill="#cfcfcf"/><rect x="0" y="1" width="4" height="1" fill="#4f6470"/><rect x="4" y="1" width="2" height="1" fill="#cfcfcf"/><rect x="6" y="1" width="1" height="1" fill="#4f6470"/><rect x="4" y="2" width="2" height="1" fill="#cfcfcf"/><rect x="1" y="3" width="2" height="1" fill="#cfcfcf"/><rect x="0" y="4" width="1" height="1" fill="#4f6470"/><rect x="1" y="4" width="2" height="1" fill="#cfcfcf"/><rect x="3" y="4" width="4" height="1" fill="#4f6470"/><rect x="1" y="5" width="2" height="1" fill="#cfcfcf"/><rect x="3" y="6" width="2" height="1" fill="#cfcfcf"/><rect x="0" y="7" width="3" height="1" fill="#4f6470"/><rect x="3" y="7" width="2" height="1" fill="#cfcfcf"/><rect x="5" y="7" width="2" height="1" fill="#4f6470"/><rect x="3" y="8" width="2" height="1" fill="#cfcfcf"/></svg><svg style="left:506px;top:829px" width="14" height="14" viewBox="0 0 7 7" shape-rendering="crispEdges"><rect x="0" y="0" width="5" height="1" fill="#4f6470"/><rect x="0" y="1" width="1" height="1" fill="#4f6470"/><rect x="4" y="1" width="1" height="1" fill="#4f6470"/><rect x="0" y="2" width="1" height="1" fill="#4f6470"/><rect x="4" y="2" width="1" height="1" fill="#4f6470"/><rect x="5" y="2" width="2" height="1" fill="#1f2025"/><rect x="0" y="3" width="1" height="1" fill="#4f6470"/><rect x="4" y="3" width="1" height="1" fill="#4f6470"/><rect x="6" y="3" width="1" height="1" fill="#1f2025"/><rect x="0" y="4" width="5" height="1" fill="#4f6470"/><rect x="6" y="4" width="1" height="1" fill="#1f2025"/><rect x="2" y="5" width="1" height="1" fill="#1f2025"/><rect x="6" y="5" width="1" height="1" fill="#1f2025"/><rect x="2" y="6" width="5" height="1" fill="#1f2025"/></svg><div style="left:708px;top:825px;width:22px;height:22px;background:#2b2c33;"></div><span class="t" style="left:716.0px;top:827.02px;font-size:16px;color:#7d8b99;letter-spacing:-3.9px;">1</span><div style="left:732px;top:825px;width:22px;height:22px;background:#2b2c33;"></div><span class="t" style="left:739.0px;top:827.02px;font-size:16px;color:#7d8b99;letter-spacing:-1.9px;">2</span><div style="left:756px;top:825px;width:22px;height:22px;background:#2b2c33;"></div><span class="t" style="left:763.0px;top:827.02px;font-size:16px;color:#7d8b99;letter-spacing:-1.9px;">3</span><div style="left:780px;top:825px;width:22px;height:22px;background:#2b2c33;"></div><span class="t" style="left:787.0px;top:827.02px;font-size:16px;color:#7d8b99;letter-spacing:-1.9px;">4</span><div style="left:804px;top:825px;width:22px;height:22px;background:#2b2c33;"></div><span class="t" style="left:811.0px;top:827.02px;font-size:16px;color:#7d8b99;letter-spacing:-1.9px;">5</span><div style="left:828px;top:825px;width:22px;height:22px;background:#2b2c33;"></div><span class="t" style="left:835.0px;top:827.02px;font-size:16px;color:#7d8b99;letter-spacing:-1.9px;">6</span><div style="left:852px;top:825px;width:22px;height:22px;background:#2b2c33;"></div><span class="t" style="left:859.0px;top:827.02px;font-size:16px;color:#7d8b99;letter-spacing:-1.9px;">7</span><div style="left:876px;top:825px;width:22px;height:22px;background:#2b2c33;"></div><span class="t" style="left:883.0px;top:827.02px;font-size:16px;color:#7d8b99;letter-spacing:-1.9px;">8</span><div style="left:900px;top:825px;width:22px;height:22px;background:#2b2c33;"></div><span class="t" style="left:907.0px;top:827.02px;font-size:16px;color:#7d8b99;letter-spacing:-1.9px;">9</span><div style="left:924px;top:825px;width:22px;height:22px;background:#2b2c33;"></div><span class="t" style="left:927.0px;top:827.02px;font-size:16px;color:#7d8b99;letter-spacing:-2.8px;">10</span><div style="left:948px;top:825px;width:22px;height:22px;background:#2b2c33;"></div><span class="t" style="left:951.5px;top:827.02px;font-size:16px;color:#7d8b99;letter-spacing:-2.61px;">11</span><div style="left:972px;top:825px;width:22px;height:22px;background:#2b2c33;"></div><span class="t" style="left:975.0px;top:827.02px;font-size:16px;color:#7d8b99;letter-spacing:-2.8px;">12</span><div style="left:996px;top:825px;width:22px;height:22px;background:#2b2c33;"></div><span class="t" style="left:999.0px;top:827.02px;font-size:16px;color:#7d8b99;letter-spacing:-2.8px;">13</span><div style="left:1020px;top:825px;width:22px;height:22px;background:#2b2c33;"></div><span class="t" style="left:1023.0px;top:827.02px;font-size:16px;color:#7d8b99;letter-spacing:-2.8px;">14</span><div style="left:1044px;top:825px;width:22px;height:22px;background:#2b2c33;"></div><span class="t" style="left:1047.0px;top:827.02px;font-size:16px;color:#7d8b99;letter-spacing:-2.8px;">15</span><div style="left:1068px;top:825px;width:22px;height:22px;background:#2b2c33;"></div><span class="t" style="left:1071.0px;top:827.02px;font-size:16px;color:#7d8b99;letter-spacing:-2.8px;">16</span><div style="left:1092px;top:825px;width:22px;height:22px;background:#2b2c33;"></div><span class="t" style="left:1095.0px;top:827.02px;font-size:16px;color:#7d8b99;letter-spacing:-2.8px;">17</span><div style="left:1116px;top:825px;width:22px;height:22px;background:#2b2c33;"></div><span class="t" style="left:1119.0px;top:827.02px;font-size:16px;color:#7d8b99;letter-spacing:-2.8px;">18</span><div style="left:1140px;top:825px;width:22px;height:22px;background:#2b2c33;"></div><span class="t" style="left:1143.0px;top:827.02px;font-size:16px;color:#7d8b99;letter-spacing:-2.8px;">19</span><div style="left:1164px;top:825px;width:22px;height:22px;background:#2b2c33;"></div><span class="t" style="left:1166.0px;top:827.02px;font-size:16px;color:#7d8b99;letter-spacing:-0.8px;">20</span><div style="left:1188px;top:825px;width:22px;height:22px;background:#2b2c33;"></div><span class="t" style="left:1191.0px;top:827.02px;font-size:16px;color:#7d8b99;letter-spacing:-2.8px;">21</span><div style="left:1212px;top:825px;width:22px;height:22px;background:#2b2c33;"></div><span class="t" style="left:1214.0px;top:827.02px;font-size:16px;color:#7d8b99;letter-spacing:-0.8px;">22</span><div style="left:1236px;top:825px;width:22px;height:22px;background:#2b2c33;"></div><span class="t" style="left:1238.0px;top:827.02px;font-size:16px;color:#7d8b99;letter-spacing:-0.8px;">23</span><div style="left:1260px;top:825px;width:22px;height:22px;background:#2b2c33;"></div><span class="t" style="left:1262.0px;top:827.02px;font-size:16px;color:#7d8b99;letter-spacing:-0.8px;">24</span><div style="left:1284px;top:825px;width:22px;height:22px;background:#2b2c33;"></div><span class="t" style="left:1286.0px;top:827.02px;font-size:16px;color:#7d8b99;letter-spacing:-0.8px;">25</span><div style="left:1308px;top:825px;width:22px;height:22px;background:#1e1f23;"></div><span class="t" style="left:1310.0px;top:827.02px;font-size:16px;color:#fff;letter-spacing:-0.8px;">26</span><div style="left:1332px;top:825px;width:22px;height:22px;background:#2b2c33;"></div><span class="t" style="left:1334.0px;top:827.02px;font-size:16px;color:#7d8b99;letter-spacing:-0.8px;">27</span><div style="left:1356px;top:825px;width:22px;height:22px;background:#2b2c33;"></div><span class="t" style="left:1358.0px;top:827.02px;font-size:16px;color:#7d8b99;letter-spacing:-0.8px;">28</span><div style="left:1380px;top:825px;width:22px;height:22px;background:#2b2c33;"></div><span class="t" style="left:1382.0px;top:827.02px;font-size:16px;color:#7d8b99;letter-spacing:-0.8px;">29</span><div style="left:1404px;top:825px;width:22px;height:22px;background:#2b2c33;"></div><span class="t" style="left:1406.0px;top:827.02px;font-size:16px;color:#7d8b99;letter-spacing:-0.8px;">30</span><div style="left:1428px;top:825px;width:22px;height:22px;background:#2b2c33;"></div><span class="t" style="left:1431.0px;top:827.02px;font-size:16px;color:#7d8b99;letter-spacing:-2.8px;">31</span><div style="left:1452px;top:825px;width:22px;height:22px;background:#2b2c33;"></div><span class="t" style="left:1454.0px;top:827.02px;font-size:16px;color:#7d8b99;letter-spacing:-0.8px;">32</span><div style="left:1476px;top:825px;width:22px;height:22px;background:#2b2c33;"></div><span class="t" style="left:1478.0px;top:827.02px;font-size:16px;color:#7d8b99;letter-spacing:-0.8px;">33</span><div style="left:1500px;top:825px;width:22px;height:22px;background:#2b2c33;"></div><span class="t" style="left:1502.0px;top:827.02px;font-size:16px;color:#7d8b99;letter-spacing:-0.8px;">34</span><div style="left:1524px;top:825px;width:22px;height:22px;background:#2b2c33;"></div><span class="t" style="left:1526.0px;top:827.02px;font-size:16px;color:#7d8b99;letter-spacing:-0.8px;">35</span><div style="left:1548px;top:825px;width:22px;height:22px;background:#2b2c33;"></div><span class="t" style="left:1550.0px;top:827.02px;font-size:16px;color:#7d8b99;letter-spacing:-0.8px;">36</span><div style="left:1572px;top:825px;width:22px;height:22px;background:#2b2c33;"></div><span class="t" style="left:1574.0px;top:827.02px;font-size:16px;color:#7d8b99;letter-spacing:-0.8px;">37</span><div style="left:1596px;top:825px;width:22px;height:22px;background:#2b2c33;"></div><span class="t" style="left:1598.0px;top:827.02px;font-size:16px;color:#7d8b99;letter-spacing:-0.8px;">38</span><div style="left:1620px;top:825px;width:22px;height:22px;background:#2b2c33;"></div><span class="t" style="left:1622.0px;top:827.02px;font-size:16px;color:#7d8b99;letter-spacing:-0.8px;">39</span><div style="left:1644px;top:825px;width:22px;height:22px;background:#2b2c33;"></div><span class="t" style="left:1646.0px;top:827.02px;font-size:16px;color:#7d8b99;letter-spacing:-0.8px;">40</span><div style="left:1668px;top:825px;width:22px;height:22px;background:#2b2c33;"></div><span class="t" style="left:1671.0px;top:827.02px;font-size:16px;color:#7d8b99;letter-spacing:-2.8px;">41</span><div style="left:1692px;top:825px;width:22px;height:22px;background:#2b2c33;"></div><span class="t" style="left:1694.0px;top:827.02px;font-size:16px;color:#7d8b99;letter-spacing:-0.8px;">42</span><div style="left:1716px;top:825px;width:22px;height:22px;background:#2b2c33;"></div><span class="t" style="left:1718.0px;top:827.02px;font-size:16px;color:#7d8b99;letter-spacing:-0.8px;">43</span><div style="left:1740px;top:825px;width:22px;height:22px;background:#2b2c33;"></div><span class="t" style="left:1742.0px;top:827.02px;font-size:16px;color:#7d8b99;letter-spacing:-0.8px;">44</span><div style="left:1764px;top:825px;width:22px;height:22px;background:#2b2c33;"></div><span class="t" style="left:1766.0px;top:827.02px;font-size:16px;color:#7d8b99;letter-spacing:-0.8px;">45</span><div style="left:1788px;top:825px;width:22px;height:22px;background:#2b2c33;"></div><span class="t" style="left:1790.0px;top:827.02px;font-size:16px;color:#7d8b99;letter-spacing:-0.8px;">46</span><div style="left:1812px;top:825px;width:22px;height:22px;background:#2b2c33;"></div><span class="t" style="left:1814.0px;top:827.02px;font-size:16px;color:#7d8b99;letter-spacing:-0.8px;">47</span><div style="left:1836px;top:825px;width:22px;height:22px;background:#2b2c33;"></div><span class="t" style="left:1838.0px;top:827.02px;font-size:16px;color:#7d8b99;letter-spacing:-0.8px;">48</span><div style="left:1860px;top:825px;width:22px;height:22px;background:#2b2c33;"></div><span class="t" style="left:1862.0px;top:827.02px;font-size:16px;color:#7d8b99;letter-spacing:-0.8px;">49</span><div style="left:406px;top:849px;width:22px;height:22px;background:#1e1f23;"></div><div style="left:430px;top:849px;width:22px;height:22px;background:#1e1f23;"></div><div style="left:454px;top:849px;width:22px;height:22px;background:#1e1f23;"></div><div style="left:478px;top:849px;width:228px;height:22px;background:#1e1f23;"></div><svg style="left:408px;top:855px" width="16" height="12" viewBox="0 0 8 6" shape-rendering="crispEdges"><rect x="2" y="0" width="4" height="1" fill="#d6d6d6"/><rect x="1" y="1" width="3" height="1" fill="#d6d6d6"/><rect x="5" y="1" width="2" height="1" fill="#d6d6d6"/><rect x="0" y="2" width="1" height="1" fill="#d6d6d6"/><rect x="2" y="2" width="4" height="1" fill="#d6d6d6"/><rect x="7" y="2" width="1" height="1" fill="#d6d6d6"/><rect x="0" y="3" width="1" height="1" fill="#d6d6d6"/><rect x="3" y="3" width="2" height="1" fill="#d6d6d6"/><rect x="7" y="3" width="1" height="1" fill="#d6d6d6"/><rect x="1" y="4" width="1" height="1" fill="#d6d6d6"/><rect x="6" y="4" width="1" height="1" fill="#d6d6d6"/><rect x="2" y="5" width="4" height="1" fill="#d6d6d6"/></svg><svg style="left:434px;top:851px" width="12" height="14" viewBox="0 0 6 7" shape-rendering="crispEdges"><rect x="2" y="0" width="2" height="1" fill="#d6d6d6"/><rect x="1" y="1" width="1" height="1" fill="#d6d6d6"/><rect x="4" y="1" width="1" height="1" fill="#d6d6d6"/><rect x="1" y="2" width="1" height="1" fill="#d6d6d6"/><rect x="0" y="3" width="6" height="1" fill="#d6d6d6"/><rect x="0" y="4" width="3" height="1" fill="#d6d6d6"/><rect x="4" y="4" width="2" height="1" fill="#d6d6d6"/><rect x="0" y="5" width="3" height="1" fill="#d6d6d6"/><rect x="4" y="5" width="2" height="1" fill="#d6d6d6"/><rect x="0" y="6" width="6" height="1" fill="#d6d6d6"/></svg><svg style="left:456px;top:855px" width="18" height="8" viewBox="0 0 9 4" shape-rendering="crispEdges"><rect x="1" y="0" width="2" height="1" fill="#d6d6d6"/><rect x="6" y="0" width="2" height="1" fill="#d6d6d6"/><rect x="0" y="1" width="4" height="1" fill="#d6d6d6"/><rect x="5" y="1" width="4" height="1" fill="#d6d6d6"/><rect x="0" y="2" width="4" height="1" fill="#d6d6d6"/><rect x="5" y="2" width="4" height="1" fill="#d6d6d6"/><rect x="1" y="3" width="2" height="1" fill="#d6d6d6"/><rect x="6" y="3" width="2" height="1" fill="#d6d6d6"/></svg><span class="t" style="left:484px;top:850.07px;font-size:16.5px;color:#e8e8e8;letter-spacing:0.99px;">Layer 2</span><div style="left:406px;top:873px;width:22px;height:22px;background:#2b2c33;"></div><div style="left:430px;top:873px;width:22px;height:22px;background:#2b2c33;"></div><div style="left:454px;top:873px;width:22px;height:22px;background:#2b2c33;"></div><div style="left:478px;top:873px;width:228px;height:22px;background:#2b2c33;"></div><svg style="left:408px;top:879px" width="16" height="12" viewBox="0 0 8 6" shape-rendering="crispEdges"><rect x="2" y="0" width="4" height="1" fill="#4f6470"/><rect x="1" y="1" width="3" height="1" fill="#4f6470"/><rect x="5" y="1" width="2" height="1" fill="#4f6470"/><rect x="0" y="2" width="1" height="1" fill="#4f6470"/><rect x="2" y="2" width="4" height="1" fill="#4f6470"/><rect x="7" y="2" width="1" height="1" fill="#4f6470"/><rect x="0" y="3" width="1" height="1" fill="#4f6470"/><rect x="3" y="3" width="2" height="1" fill="#4f6470"/><rect x="7" y="3" width="1" height="1" fill="#4f6470"/><rect x="1" y="4" width="1" height="1" fill="#4f6470"/><rect x="6" y="4" width="1" height="1" fill="#4f6470"/><rect x="2" y="5" width="4" height="1" fill="#4f6470"/></svg><svg style="left:434px;top:875px" width="12" height="14" viewBox="0 0 6 7" shape-rendering="crispEdges"><rect x="2" y="0" width="2" height="1" fill="#4f6470"/><rect x="1" y="1" width="1" height="1" fill="#4f6470"/><rect x="4" y="1" width="1" height="1" fill="#4f6470"/><rect x="1" y="2" width="1" height="1" fill="#4f6470"/><rect x="0" y="3" width="6" height="1" fill="#4f6470"/><rect x="0" y="4" width="3" height="1" fill="#4f6470"/><rect x="4" y="4" width="2" height="1" fill="#4f6470"/><rect x="0" y="5" width="3" height="1" fill="#4f6470"/><rect x="4" y="5" width="2" height="1" fill="#4f6470"/><rect x="0" y="6" width="6" height="1" fill="#4f6470"/></svg><svg style="left:456px;top:879px" width="18" height="8" viewBox="0 0 9 4" shape-rendering="crispEdges"><rect x="1" y="0" width="2" height="1" fill="#4f6470"/><rect x="6" y="0" width="2" height="1" fill="#4f6470"/><rect x="0" y="1" width="4" height="1" fill="#4f6470"/><rect x="5" y="1" width="4" height="1" fill="#4f6470"/><rect x="0" y="2" width="4" height="1" fill="#4f6470"/><rect x="5" y="2" width="4" height="1" fill="#4f6470"/><rect x="1" y="3" width="2" height="1" fill="#4f6470"/><rect x="6" y="3" width="2" height="1" fill="#4f6470"/></svg><span class="t" style="left:484px;top:874.07px;font-size:16.5px;color:#6e7f93;letter-spacing:0.56px;">Whirlwind</span><div style="left:406px;top:897px;width:22px;height:22px;background:#2b2c33;"></div><div style="left:430px;top:897px;width:22px;height:22px;background:#2b2c33;"></div><div style="left:454px;top:897px;width:22px;height:22px;background:#2b2c33;"></div><div style="left:478px;top:897px;width:228px;height:22px;background:#2b2c33;"></div><svg style="left:408px;top:903px" width="16" height="12" viewBox="0 0 8 6" shape-rendering="crispEdges"><rect x="2" y="0" width="4" height="1" fill="#4f6470"/><rect x="1" y="1" width="3" height="1" fill="#4f6470"/><rect x="5" y="1" width="2" height="1" fill="#4f6470"/><rect x="0" y="2" width="1" height="1" fill="#4f6470"/><rect x="2" y="2" width="4" height="1" fill="#4f6470"/><rect x="7" y="2" width="1" height="1" fill="#4f6470"/><rect x="0" y="3" width="1" height="1" fill="#4f6470"/><rect x="3" y="3" width="2" height="1" fill="#4f6470"/><rect x="7" y="3" width="1" height="1" fill="#4f6470"/><rect x="1" y="4" width="1" height="1" fill="#4f6470"/><rect x="6" y="4" width="1" height="1" fill="#4f6470"/><rect x="2" y="5" width="4" height="1" fill="#4f6470"/></svg><svg style="left:434px;top:899px" width="12" height="14" viewBox="0 0 6 7" shape-rendering="crispEdges"><rect x="2" y="0" width="2" height="1" fill="#4f6470"/><rect x="1" y="1" width="1" height="1" fill="#4f6470"/><rect x="4" y="1" width="1" height="1" fill="#4f6470"/><rect x="1" y="2" width="1" height="1" fill="#4f6470"/><rect x="0" y="3" width="6" height="1" fill="#4f6470"/><rect x="0" y="4" width="3" height="1" fill="#4f6470"/><rect x="4" y="4" width="2" height="1" fill="#4f6470"/><rect x="0" y="5" width="3" height="1" fill="#4f6470"/><rect x="4" y="5" width="2" height="1" fill="#4f6470"/><rect x="0" y="6" width="6" height="1" fill="#4f6470"/></svg><svg style="left:456px;top:903px" width="18" height="8" viewBox="0 0 9 4" shape-rendering="crispEdges"><rect x="1" y="0" width="2" height="1" fill="#4f6470"/><rect x="6" y="0" width="2" height="1" fill="#4f6470"/><rect x="0" y="1" width="4" height="1" fill="#4f6470"/><rect x="5" y="1" width="4" height="1" fill="#4f6470"/><rect x="0" y="2" width="4" height="1" fill="#4f6470"/><rect x="5" y="2" width="4" height="1" fill="#4f6470"/><rect x="1" y="3" width="2" height="1" fill="#4f6470"/><rect x="6" y="3" width="2" height="1" fill="#4f6470"/></svg><span class="t" style="left:484px;top:898.07px;font-size:16.5px;color:#6e7f93;letter-spacing:0.38px;">Headphones</span><div style="left:406px;top:921px;width:22px;height:22px;background:#2b2c33;"></div><div style="left:430px;top:921px;width:22px;height:22px;background:#2b2c33;"></div><div style="left:454px;top:921px;width:22px;height:22px;background:#2b2c33;"></div><div style="left:478px;top:921px;width:228px;height:22px;background:#2b2c33;"></div><svg style="left:408px;top:927px" width="16" height="12" viewBox="0 0 8 6" shape-rendering="crispEdges"><rect x="2" y="0" width="4" height="1" fill="#4f6470"/><rect x="1" y="1" width="3" height="1" fill="#4f6470"/><rect x="5" y="1" width="2" height="1" fill="#4f6470"/><rect x="0" y="2" width="1" height="1" fill="#4f6470"/><rect x="2" y="2" width="4" height="1" fill="#4f6470"/><rect x="7" y="2" width="1" height="1" fill="#4f6470"/><rect x="0" y="3" width="1" height="1" fill="#4f6470"/><rect x="3" y="3" width="2" height="1" fill="#4f6470"/><rect x="7" y="3" width="1" height="1" fill="#4f6470"/><rect x="1" y="4" width="1" height="1" fill="#4f6470"/><rect x="6" y="4" width="1" height="1" fill="#4f6470"/><rect x="2" y="5" width="4" height="1" fill="#4f6470"/></svg><svg style="left:434px;top:923px" width="12" height="14" viewBox="0 0 6 7" shape-rendering="crispEdges"><rect x="2" y="0" width="2" height="1" fill="#4f6470"/><rect x="1" y="1" width="1" height="1" fill="#4f6470"/><rect x="4" y="1" width="1" height="1" fill="#4f6470"/><rect x="1" y="2" width="1" height="1" fill="#4f6470"/><rect x="0" y="3" width="6" height="1" fill="#4f6470"/><rect x="0" y="4" width="3" height="1" fill="#4f6470"/><rect x="4" y="4" width="2" height="1" fill="#4f6470"/><rect x="0" y="5" width="3" height="1" fill="#4f6470"/><rect x="4" y="5" width="2" height="1" fill="#4f6470"/><rect x="0" y="6" width="6" height="1" fill="#4f6470"/></svg><svg style="left:456px;top:927px" width="18" height="8" viewBox="0 0 9 4" shape-rendering="crispEdges"><rect x="1" y="0" width="2" height="1" fill="#4f6470"/><rect x="6" y="0" width="2" height="1" fill="#4f6470"/><rect x="0" y="1" width="4" height="1" fill="#4f6470"/><rect x="5" y="1" width="4" height="1" fill="#4f6470"/><rect x="0" y="2" width="4" height="1" fill="#4f6470"/><rect x="5" y="2" width="4" height="1" fill="#4f6470"/><rect x="1" y="3" width="2" height="1" fill="#4f6470"/><rect x="6" y="3" width="2" height="1" fill="#4f6470"/></svg><span class="t" style="left:484px;top:922.07px;font-size:16.5px;color:#6e7f93;letter-spacing:-0.53px;">Ross</span><div style="left:406px;top:945px;width:22px;height:22px;background:#2b2c33;"></div><div style="left:430px;top:945px;width:22px;height:22px;background:#2b2c33;"></div><div style="left:454px;top:945px;width:22px;height:22px;background:#2b2c33;"></div><div style="left:478px;top:945px;width:228px;height:22px;background:#2b2c33;"></div><svg style="left:408px;top:951px" width="16" height="12" viewBox="0 0 8 6" shape-rendering="crispEdges"><rect x="2" y="0" width="4" height="1" fill="#4f6470"/><rect x="1" y="1" width="3" height="1" fill="#4f6470"/><rect x="5" y="1" width="2" height="1" fill="#4f6470"/><rect x="0" y="2" width="1" height="1" fill="#4f6470"/><rect x="2" y="2" width="4" height="1" fill="#4f6470"/><rect x="7" y="2" width="1" height="1" fill="#4f6470"/><rect x="0" y="3" width="1" height="1" fill="#4f6470"/><rect x="3" y="3" width="2" height="1" fill="#4f6470"/><rect x="7" y="3" width="1" height="1" fill="#4f6470"/><rect x="1" y="4" width="1" height="1" fill="#4f6470"/><rect x="6" y="4" width="1" height="1" fill="#4f6470"/><rect x="2" y="5" width="4" height="1" fill="#4f6470"/></svg><svg style="left:434px;top:947px" width="12" height="14" viewBox="0 0 6 7" shape-rendering="crispEdges"><rect x="2" y="0" width="2" height="1" fill="#4f6470"/><rect x="1" y="1" width="1" height="1" fill="#4f6470"/><rect x="4" y="1" width="1" height="1" fill="#4f6470"/><rect x="1" y="2" width="1" height="1" fill="#4f6470"/><rect x="0" y="3" width="6" height="1" fill="#4f6470"/><rect x="0" y="4" width="3" height="1" fill="#4f6470"/><rect x="4" y="4" width="2" height="1" fill="#4f6470"/><rect x="0" y="5" width="3" height="1" fill="#4f6470"/><rect x="4" y="5" width="2" height="1" fill="#4f6470"/><rect x="0" y="6" width="6" height="1" fill="#4f6470"/></svg><svg style="left:456px;top:951px" width="18" height="8" viewBox="0 0 9 4" shape-rendering="crispEdges"><rect x="1" y="0" width="2" height="1" fill="#4f6470"/><rect x="6" y="0" width="2" height="1" fill="#4f6470"/><rect x="0" y="1" width="4" height="1" fill="#4f6470"/><rect x="5" y="1" width="4" height="1" fill="#4f6470"/><rect x="0" y="2" width="4" height="1" fill="#4f6470"/><rect x="5" y="2" width="4" height="1" fill="#4f6470"/><rect x="1" y="3" width="2" height="1" fill="#4f6470"/><rect x="6" y="3" width="2" height="1" fill="#4f6470"/></svg><span class="t" style="left:484px;top:946.07px;font-size:16.5px;color:#6e7f93;letter-spacing:0.39px;">Chair</span><div style="left:406px;top:969px;width:22px;height:22px;background:#2b2c33;"></div><div style="left:430px;top:969px;width:22px;height:22px;background:#2b2c33;"></div><div style="left:454px;top:969px;width:22px;height:22px;background:#2b2c33;"></div><div style="left:478px;top:969px;width:228px;height:22px;background:#2b2c33;"></div><svg style="left:408px;top:975px" width="16" height="12" viewBox="0 0 8 6" shape-rendering="crispEdges"><rect x="2" y="0" width="4" height="1" fill="#4f6470"/><rect x="1" y="1" width="3" height="1" fill="#4f6470"/><rect x="5" y="1" width="2" height="1" fill="#4f6470"/><rect x="0" y="2" width="1" height="1" fill="#4f6470"/><rect x="2" y="2" width="4" height="1" fill="#4f6470"/><rect x="7" y="2" width="1" height="1" fill="#4f6470"/><rect x="0" y="3" width="1" height="1" fill="#4f6470"/><rect x="3" y="3" width="2" height="1" fill="#4f6470"/><rect x="7" y="3" width="1" height="1" fill="#4f6470"/><rect x="1" y="4" width="1" height="1" fill="#4f6470"/><rect x="6" y="4" width="1" height="1" fill="#4f6470"/><rect x="2" y="5" width="4" height="1" fill="#4f6470"/></svg><svg style="left:434px;top:971px" width="12" height="14" viewBox="0 0 6 7" shape-rendering="crispEdges"><rect x="2" y="0" width="2" height="1" fill="#4f6470"/><rect x="1" y="1" width="1" height="1" fill="#4f6470"/><rect x="4" y="1" width="1" height="1" fill="#4f6470"/><rect x="1" y="2" width="1" height="1" fill="#4f6470"/><rect x="0" y="3" width="6" height="1" fill="#4f6470"/><rect x="0" y="4" width="3" height="1" fill="#4f6470"/><rect x="4" y="4" width="2" height="1" fill="#4f6470"/><rect x="0" y="5" width="3" height="1" fill="#4f6470"/><rect x="4" y="5" width="2" height="1" fill="#4f6470"/><rect x="0" y="6" width="6" height="1" fill="#4f6470"/></svg><svg style="left:456px;top:975px" width="18" height="8" viewBox="0 0 9 4" shape-rendering="crispEdges"><rect x="1" y="0" width="2" height="1" fill="#4f6470"/><rect x="6" y="0" width="2" height="1" fill="#4f6470"/><rect x="0" y="1" width="4" height="1" fill="#4f6470"/><rect x="5" y="1" width="4" height="1" fill="#4f6470"/><rect x="0" y="2" width="4" height="1" fill="#4f6470"/><rect x="5" y="2" width="4" height="1" fill="#4f6470"/><rect x="1" y="3" width="2" height="1" fill="#4f6470"/><rect x="6" y="3" width="2" height="1" fill="#4f6470"/></svg><span class="t" style="left:484px;top:970.07px;font-size:16.5px;color:#6e7f93;letter-spacing:0.94px;">Screen</span><div style="left:406px;top:993px;width:22px;height:8px;background:#2b2c33;"></div><div style="left:430px;top:993px;width:22px;height:8px;background:#2b2c33;"></div><div style="left:454px;top:993px;width:22px;height:8px;background:#2b2c33;"></div><div style="left:478px;top:993px;width:228px;height:8px;background:#2b2c33;"></div><div style="left:404px;top:993px;width:304px;height:8px;overflow:hidden"><svg style="left:30px;top:2px" width="12" height="14" viewBox="0 0 6 7" shape-rendering="crispEdges"><rect x="2" y="0" width="2" height="1" fill="#4f6470"/><rect x="1" y="1" width="1" height="1" fill="#4f6470"/><rect x="4" y="1" width="1" height="1" fill="#4f6470"/><rect x="1" y="2" width="1" height="1" fill="#4f6470"/><rect x="0" y="3" width="6" height="1" fill="#4f6470"/><rect x="0" y="4" width="3" height="1" fill="#4f6470"/><rect x="4" y="4" width="2" height="1" fill="#4f6470"/><rect x="0" y="5" width="3" height="1" fill="#4f6470"/><rect x="4" y="5" width="2" height="1" fill="#4f6470"/><rect x="0" y="6" width="6" height="1" fill="#4f6470"/></svg><span class="t" style="left:80px;top:1.07px;font-size:16.5px;color:#6e7f93;letter-spacing:0.49px;">Layer 1</span></div><svg style="left:404px;top:823px" width="1480" height="178" viewBox="0 0 1480 178"><rect x="304" y="26" width="22" height="22" fill="#1e1f23"/><circle cx="315" cy="37" r="6" fill="none" stroke="#0b0b0d" stroke-width="2"/><rect x="328" y="26" width="22" height="22" fill="#1e1f23"/><circle cx="339" cy="37" r="6" fill="none" stroke="#0b0b0d" stroke-width="2"/><rect x="352" y="26" width="22" height="22" fill="#1e1f23"/><circle cx="363" cy="37" r="6" fill="none" stroke="#0b0b0d" stroke-width="2"/><rect x="376" y="26" width="22" height="22" fill="#1e1f23"/><circle cx="387" cy="37" r="6" fill="none" stroke="#0b0b0d" stroke-width="2"/><rect x="400" y="26" width="22" height="22" fill="#1e1f23"/><circle cx="411" cy="37" r="6" fill="none" stroke="#0b0b0d" stroke-width="2"/><rect x="424" y="26" width="22" height="22" fill="#1e1f23"/><circle cx="435" cy="37" r="6" fill="none" stroke="#0b0b0d" stroke-width="2"/><rect x="448" y="26" width="22" height="22" fill="#1e1f23"/><circle cx="459" cy="37" r="6" fill="none" stroke="#0b0b0d" stroke-width="2"/><rect x="472" y="26" width="22" height="22" fill="#1e1f23"/><circle cx="483" cy="37" r="6" fill="none" stroke="#0b0b0d" stroke-width="2"/><rect x="496" y="26" width="22" height="22" fill="#1e1f23"/><circle cx="507" cy="37" r="6" fill="none" stroke="#0b0b0d" stroke-width="2"/><rect x="520" y="26" width="22" height="22" fill="#1e1f23"/><circle cx="531" cy="37" r="6" fill="none" stroke="#0b0b0d" stroke-width="2"/><rect x="544" y="26" width="22" height="22" fill="#1e1f23"/><circle cx="555" cy="37" r="6" fill="none" stroke="#0b0b0d" stroke-width="2"/><rect x="568" y="26" width="22" height="22" fill="#1e1f23"/><circle cx="579" cy="37" r="6" fill="none" stroke="#0b0b0d" stroke-width="2"/><rect x="592" y="26" width="22" height="22" fill="#1e1f23"/><circle cx="603" cy="37" r="6" fill="none" stroke="#0b0b0d" stroke-width="2"/><rect x="616" y="26" width="22" height="22" fill="#1e1f23"/><circle cx="627" cy="37" r="6" fill="none" stroke="#0b0b0d" stroke-width="2"/><rect x="640" y="26" width="22" height="22" fill="#1e1f23"/><circle cx="651" cy="37" r="6" fill="none" stroke="#0b0b0d" stroke-width="2"/><rect x="664" y="26" width="22" height="22" fill="#1e1f23"/><circle cx="675" cy="37" r="6" fill="none" stroke="#0b0b0d" stroke-width="2"/><rect x="688" y="26" width="22" height="22" fill="#1e1f23"/><circle cx="699" cy="37" r="6" fill="none" stroke="#0b0b0d" stroke-width="2"/><rect x="712" y="26" width="22" height="22" fill="#1e1f23"/><circle cx="723" cy="37" r="6" fill="none" stroke="#0b0b0d" stroke-width="2"/><rect x="736" y="26" width="22" height="22" fill="#1e1f23"/><circle cx="747" cy="37" r="6" fill="none" stroke="#0b0b0d" stroke-width="2"/><rect x="760" y="26" width="22" height="22" fill="#1e1f23"/><circle cx="771" cy="37" r="6" fill="none" stroke="#0b0b0d" stroke-width="2"/><rect x="784" y="26" width="22" height="22" fill="#1e1f23"/><circle cx="795" cy="37" r="6" fill="none" stroke="#0b0b0d" stroke-width="2"/><rect x="808" y="26" width="22" height="22" fill="#1e1f23"/><circle cx="819" cy="37" r="6" fill="none" stroke="#0b0b0d" stroke-width="2"/><rect x="832" y="26" width="22" height="22" fill="#1e1f23"/><circle cx="843" cy="37" r="6" fill="none" stroke="#0b0b0d" stroke-width="2"/><rect x="856" y="26" width="22" height="22" fill="#1e1f23"/><circle cx="867" cy="37" r="6" fill="none" stroke="#0b0b0d" stroke-width="2"/><rect x="880" y="26" width="22" height="22" fill="#1e1f23"/><circle cx="891" cy="37" r="6" fill="none" stroke="#0b0b0d" stroke-width="2"/><rect x="904" y="26" width="22" height="22" fill="#131417"/><circle cx="915" cy="37" r="7" fill="#c9c9c9"/><rect x="928" y="26" width="22" height="22" fill="#1e1f23"/><circle cx="939" cy="37" r="6" fill="none" stroke="#0b0b0d" stroke-width="2"/><rect x="952" y="26" width="22" height="22" fill="#1e1f23"/><circle cx="963" cy="37" r="6" fill="none" stroke="#0b0b0d" stroke-width="2"/><rect x="976" y="26" width="22" height="22" fill="#1e1f23"/><circle cx="987" cy="37" r="6" fill="none" stroke="#0b0b0d" stroke-width="2"/><rect x="1000" y="26" width="22" height="22" fill="#1e1f23"/><circle cx="1011" cy="37" r="6" fill="none" stroke="#0b0b0d" stroke-width="2"/><rect x="1024" y="26" width="22" height="22" fill="#1e1f23"/><circle cx="1035" cy="37" r="7" fill="#c9c9c9"/><rect x="1048" y="26" width="22" height="22" fill="#1e1f23"/><circle cx="1059" cy="37" r="7" fill="#c9c9c9"/><rect x="1072" y="26" width="22" height="22" fill="#1e1f23"/><circle cx="1083" cy="37" r="7" fill="#c9c9c9"/><rect x="1096" y="26" width="22" height="22" fill="#1e1f23"/><circle cx="1107" cy="37" r="7" fill="#c9c9c9"/><rect x="1120" y="26" width="22" height="22" fill="#1e1f23"/><circle cx="1131" cy="37" r="7" fill="#c9c9c9"/><rect x="1144" y="26" width="22" height="22" fill="#1e1f23"/><circle cx="1155" cy="37" r="6" fill="none" stroke="#0b0b0d" stroke-width="2"/><rect x="1168" y="26" width="22" height="22" fill="#1e1f23"/><circle cx="1179" cy="37" r="6" fill="none" stroke="#0b0b0d" stroke-width="2"/><rect x="1192" y="26" width="22" height="22" fill="#1e1f23"/><circle cx="1203" cy="37" r="6" fill="none" stroke="#0b0b0d" stroke-width="2"/><rect x="1216" y="26" width="22" height="22" fill="#1e1f23"/><circle cx="1227" cy="37" r="6" fill="none" stroke="#0b0b0d" stroke-width="2"/><rect x="1240" y="26" width="22" height="22" fill="#1e1f23"/><circle cx="1251" cy="37" r="6" fill="none" stroke="#0b0b0d" stroke-width="2"/><rect x="1264" y="26" width="22" height="22" fill="#1e1f23"/><circle cx="1275" cy="37" r="6" fill="none" stroke="#0b0b0d" stroke-width="2"/><rect x="1288" y="26" width="22" height="22" fill="#1e1f23"/><circle cx="1299" cy="37" r="6" fill="none" stroke="#0b0b0d" stroke-width="2"/><rect x="1312" y="26" width="22" height="22" fill="#1e1f23"/><circle cx="1323" cy="37" r="6" fill="none" stroke="#0b0b0d" stroke-width="2"/><rect x="1336" y="26" width="22" height="22" fill="#1e1f23"/><circle cx="1347" cy="37" r="6" fill="none" stroke="#0b0b0d" stroke-width="2"/><rect x="1360" y="26" width="22" height="22" fill="#1e1f23"/><circle cx="1371" cy="37" r="6" fill="none" stroke="#0b0b0d" stroke-width="2"/><rect x="1384" y="26" width="22" height="22" fill="#1e1f23"/><circle cx="1395" cy="37" r="6" fill="none" stroke="#0b0b0d" stroke-width="2"/><rect x="1408" y="26" width="22" height="22" fill="#1e1f23"/><circle cx="1419" cy="37" r="6" fill="none" stroke="#0b0b0d" stroke-width="2"/><rect x="1432" y="26" width="22" height="22" fill="#1e1f23"/><circle cx="1443" cy="37" r="6" fill="none" stroke="#0b0b0d" stroke-width="2"/><rect x="1456" y="26" width="22" height="22" fill="#1e1f23"/><circle cx="1467" cy="37" r="6" fill="none" stroke="#0b0b0d" stroke-width="2"/><rect x="304" y="50" width="22" height="22" fill="#2b2c33"/><circle cx="315" cy="61" r="6" fill="none" stroke="#222328" stroke-width="2"/><rect x="328" y="50" width="22" height="22" fill="#2b2c33"/><circle cx="339" cy="61" r="6" fill="none" stroke="#222328" stroke-width="2"/><rect x="352" y="50" width="22" height="22" fill="#2b2c33"/><circle cx="363" cy="61" r="6" fill="none" stroke="#222328" stroke-width="2"/><rect x="376" y="50" width="22" height="22" fill="#2b2c33"/><circle cx="387" cy="61" r="6" fill="none" stroke="#222328" stroke-width="2"/><rect x="400" y="50" width="22" height="22" fill="#2b2c33"/><circle cx="411" cy="61" r="6" fill="none" stroke="#222328" stroke-width="2"/><rect x="424" y="50" width="22" height="22" fill="#2b2c33"/><circle cx="435" cy="61" r="6" fill="none" stroke="#222328" stroke-width="2"/><rect x="448" y="50" width="22" height="22" fill="#2b2c33"/><circle cx="459" cy="61" r="6" fill="none" stroke="#222328" stroke-width="2"/><rect x="472" y="50" width="22" height="22" fill="#2b2c33"/><circle cx="483" cy="61" r="6" fill="none" stroke="#222328" stroke-width="2"/><rect x="496" y="50" width="22" height="22" fill="#2b2c33"/><circle cx="507" cy="61" r="6" fill="none" stroke="#222328" stroke-width="2"/><rect x="520" y="50" width="22" height="22" fill="#2b2c33"/><circle cx="531" cy="61" r="6" fill="none" stroke="#222328" stroke-width="2"/><rect x="544" y="50" width="22" height="22" fill="#2b2c33"/><circle cx="555" cy="61" r="6" fill="none" stroke="#222328" stroke-width="2"/><rect x="568" y="50" width="22" height="22" fill="#2b2c33"/><circle cx="579" cy="61" r="6" fill="none" stroke="#222328" stroke-width="2"/><rect x="592" y="50" width="22" height="22" fill="#2b2c33"/><circle cx="603" cy="61" r="6" fill="none" stroke="#222328" stroke-width="2"/><rect x="616" y="50" width="22" height="22" fill="#2b2c33"/><circle cx="627" cy="61" r="6" fill="none" stroke="#222328" stroke-width="2"/><rect x="640" y="50" width="22" height="22" fill="#2b2c33"/><circle cx="651" cy="61" r="6" fill="none" stroke="#222328" stroke-width="2"/><rect x="664" y="50" width="22" height="22" fill="#2b2c33"/><circle cx="675" cy="61" r="6" fill="none" stroke="#222328" stroke-width="2"/><rect x="688" y="50" width="22" height="22" fill="#2b2c33"/><circle cx="699" cy="61" r="6" fill="none" stroke="#222328" stroke-width="2"/><rect x="712" y="50" width="22" height="22" fill="#2b2c33"/><circle cx="723" cy="61" r="6" fill="none" stroke="#222328" stroke-width="2"/><rect x="736" y="50" width="22" height="22" fill="#2b2c33"/><circle cx="747" cy="61" r="6" fill="none" stroke="#222328" stroke-width="2"/><rect x="760" y="50" width="22" height="22" fill="#2b2c33"/><circle cx="771" cy="61" r="6" fill="none" stroke="#222328" stroke-width="2"/><rect x="784" y="50" width="22" height="22" fill="#2b2c33"/><circle cx="795" cy="61" r="6" fill="none" stroke="#222328" stroke-width="2"/><rect x="808" y="50" width="22" height="22" fill="#2b2c33"/><circle cx="819" cy="61" r="6" fill="none" stroke="#222328" stroke-width="2"/><rect x="832" y="50" width="22" height="22" fill="#2b2c33"/><circle cx="843" cy="61" r="6" fill="none" stroke="#222328" stroke-width="2"/><rect x="856" y="50" width="22" height="22" fill="#2b2c33"/><circle cx="867" cy="61" r="6" fill="none" stroke="#222328" stroke-width="2"/><rect x="880" y="50" width="22" height="22" fill="#2b2c33"/><circle cx="891" cy="61" r="6" fill="none" stroke="#222328" stroke-width="2"/><rect x="904" y="50" width="22" height="22" fill="#1e1f23"/><circle cx="915" cy="61" r="6" fill="none" stroke="#0b0b0d" stroke-width="2"/><rect x="928" y="50" width="22" height="22" fill="#2b2c33"/><circle cx="939" cy="61" r="6" fill="none" stroke="#222328" stroke-width="2"/><rect x="952" y="50" width="22" height="22" fill="#2b2c33"/><circle cx="963" cy="61" r="6" fill="none" stroke="#222328" stroke-width="2"/><rect x="976" y="50" width="22" height="22" fill="#2b2c33"/><circle cx="987" cy="61" r="6" fill="none" stroke="#222328" stroke-width="2"/><rect x="1000" y="50" width="22" height="22" fill="#2b2c33"/><circle cx="1011" cy="61" r="6" fill="none" stroke="#222328" stroke-width="2"/><rect x="1024" y="50" width="22" height="22" fill="#2b2c33"/><circle cx="1035" cy="61" r="7" fill="#55676f"/><rect x="1048" y="50" width="22" height="22" fill="#2b2c33"/><circle cx="1059" cy="61" r="7" fill="#55676f"/><rect x="1072" y="50" width="22" height="22" fill="#2b2c33"/><circle cx="1083" cy="61" r="7" fill="#55676f"/><rect x="1096" y="50" width="22" height="22" fill="#2b2c33"/><circle cx="1107" cy="61" r="7" fill="#55676f"/><rect x="1120" y="50" width="22" height="22" fill="#2b2c33"/><circle cx="1131" cy="61" r="7" fill="#55676f"/><rect x="1144" y="50" width="22" height="22" fill="#2b2c33"/><circle cx="1155" cy="61" r="7" fill="#55676f"/><rect x="1168" y="50" width="22" height="22" fill="#2b2c33"/><circle cx="1179" cy="61" r="6" fill="none" stroke="#222328" stroke-width="2"/><rect x="1192" y="50" width="22" height="22" fill="#2b2c33"/><circle cx="1203" cy="61" r="6" fill="none" stroke="#222328" stroke-width="2"/><rect x="1216" y="50" width="22" height="22" fill="#2b2c33"/><circle cx="1227" cy="61" r="6" fill="none" stroke="#222328" stroke-width="2"/><rect x="1240" y="50" width="22" height="22" fill="#2b2c33"/><circle cx="1251" cy="61" r="6" fill="none" stroke="#222328" stroke-width="2"/><rect x="1264" y="50" width="22" height="22" fill="#2b2c33"/><circle cx="1275" cy="61" r="6" fill="none" stroke="#222328" stroke-width="2"/><rect x="1288" y="50" width="22" height="22" fill="#2b2c33"/><circle cx="1299" cy="61" r="6" fill="none" stroke="#222328" stroke-width="2"/><rect x="1312" y="50" width="22" height="22" fill="#2b2c33"/><circle cx="1323" cy="61" r="6" fill="none" stroke="#222328" stroke-width="2"/><rect x="1336" y="50" width="22" height="22" fill="#2b2c33"/><circle cx="1347" cy="61" r="6" fill="none" stroke="#222328" stroke-width="2"/><rect x="1360" y="50" width="22" height="22" fill="#2b2c33"/><circle cx="1371" cy="61" r="6" fill="none" stroke="#222328" stroke-width="2"/><rect x="1384" y="50" width="22" height="22" fill="#2b2c33"/><circle cx="1395" cy="61" r="6" fill="none" stroke="#222328" stroke-width="2"/><rect x="1408" y="50" width="22" height="22" fill="#2b2c33"/><circle cx="1419" cy="61" r="6" fill="none" stroke="#222328" stroke-width="2"/><rect x="1432" y="50" width="22" height="22" fill="#2b2c33"/><circle cx="1443" cy="61" r="6" fill="none" stroke="#222328" stroke-width="2"/><rect x="1456" y="50" width="22" height="22" fill="#2b2c33"/><circle cx="1467" cy="61" r="6" fill="none" stroke="#222328" stroke-width="2"/><rect x="304" y="74" width="22" height="22" fill="#2b2c33"/><circle cx="315" cy="85" r="7" fill="#55676f"/><rect x="328" y="74" width="22" height="22" fill="#2b2c33"/><circle cx="339" cy="85" r="7" fill="#55676f"/><rect x="352" y="74" width="22" height="22" fill="#2b2c33"/><circle cx="363" cy="85" r="7" fill="#55676f"/><rect x="376" y="74" width="22" height="22" fill="#2b2c33"/><circle cx="387" cy="85" r="7" fill="#55676f"/><rect x="400" y="74" width="22" height="22" fill="#2b2c33"/><circle cx="411" cy="85" r="7" fill="#55676f"/><rect x="424" y="74" width="22" height="22" fill="#2b2c33"/><circle cx="435" cy="85" r="7" fill="#55676f"/><rect x="448" y="74" width="22" height="22" fill="#2b2c33"/><circle cx="459" cy="85" r="7" fill="#55676f"/><rect x="472" y="74" width="22" height="22" fill="#2b2c33"/><circle cx="483" cy="85" r="7" fill="#55676f"/><rect x="496" y="74" width="22" height="22" fill="#2b2c33"/><circle cx="507" cy="85" r="7" fill="#55676f"/><rect x="520" y="74" width="22" height="22" fill="#2b2c33"/><circle cx="531" cy="85" r="7" fill="#55676f"/><rect x="544" y="74" width="22" height="22" fill="#2b2c33"/><circle cx="555" cy="85" r="7" fill="#55676f"/><rect x="568" y="74" width="22" height="22" fill="#2b2c33"/><circle cx="579" cy="85" r="7" fill="#55676f"/><rect x="592" y="74" width="22" height="22" fill="#2b2c33"/><circle cx="603" cy="85" r="7" fill="#55676f"/><rect x="616" y="74" width="22" height="22" fill="#2b2c33"/><circle cx="627" cy="85" r="7" fill="#55676f"/><rect x="640" y="74" width="22" height="22" fill="#2b2c33"/><circle cx="651" cy="85" r="7" fill="#55676f"/><rect x="664" y="74" width="22" height="22" fill="#2b2c33"/><circle cx="675" cy="85" r="7" fill="#55676f"/><rect x="688" y="74" width="22" height="22" fill="#2b2c33"/><circle cx="699" cy="85" r="7" fill="#55676f"/><rect x="712" y="74" width="22" height="22" fill="#2b2c33"/><circle cx="723" cy="85" r="7" fill="#55676f"/><rect x="736" y="74" width="22" height="22" fill="#2b2c33"/><circle cx="747" cy="85" r="7" fill="#55676f"/><rect x="760" y="74" width="22" height="22" fill="#2b2c33"/><circle cx="771" cy="85" r="7" fill="#55676f"/><rect x="784" y="74" width="22" height="22" fill="#2b2c33"/><circle cx="795" cy="85" r="7" fill="#55676f"/><rect x="808" y="74" width="22" height="22" fill="#2b2c33"/><circle cx="819" cy="85" r="7" fill="#55676f"/><rect x="832" y="74" width="22" height="22" fill="#2b2c33"/><circle cx="843" cy="85" r="7" fill="#55676f"/><rect x="856" y="74" width="22" height="22" fill="#2b2c33"/><circle cx="867" cy="85" r="7" fill="#55676f"/><rect x="880" y="74" width="22" height="22" fill="#2b2c33"/><circle cx="891" cy="85" r="7" fill="#55676f"/><rect x="904" y="74" width="22" height="22" fill="#1e1f23"/><circle cx="915" cy="85" r="7" fill="#c9c9c9"/><rect x="928" y="74" width="22" height="22" fill="#2b2c33"/><circle cx="939" cy="85" r="7" fill="#55676f"/><rect x="952" y="74" width="22" height="22" fill="#2b2c33"/><circle cx="963" cy="85" r="7" fill="#55676f"/><rect x="976" y="74" width="22" height="22" fill="#2b2c33"/><circle cx="987" cy="85" r="7" fill="#55676f"/><rect x="1000" y="74" width="22" height="22" fill="#2b2c33"/><circle cx="1011" cy="85" r="7" fill="#55676f"/><rect x="1024" y="74" width="22" height="22" fill="#2b2c33"/><circle cx="1035" cy="85" r="6" fill="none" stroke="#222328" stroke-width="2"/><rect x="1048" y="74" width="22" height="22" fill="#2b2c33"/><circle cx="1059" cy="85" r="6" fill="none" stroke="#222328" stroke-width="2"/><rect x="1072" y="74" width="22" height="22" fill="#2b2c33"/><circle cx="1083" cy="85" r="6" fill="none" stroke="#222328" stroke-width="2"/><rect x="1096" y="74" width="22" height="22" fill="#2b2c33"/><circle cx="1107" cy="85" r="6" fill="none" stroke="#222328" stroke-width="2"/><rect x="1120" y="74" width="22" height="22" fill="#2b2c33"/><circle cx="1131" cy="85" r="6" fill="none" stroke="#222328" stroke-width="2"/><rect x="1144" y="74" width="22" height="22" fill="#2b2c33"/><circle cx="1155" cy="85" r="6" fill="none" stroke="#222328" stroke-width="2"/><rect x="1168" y="74" width="22" height="22" fill="#2b2c33"/><circle cx="1179" cy="85" r="6" fill="none" stroke="#222328" stroke-width="2"/><rect x="1192" y="74" width="22" height="22" fill="#2b2c33"/><circle cx="1203" cy="85" r="6" fill="none" stroke="#222328" stroke-width="2"/><rect x="1216" y="74" width="22" height="22" fill="#2b2c33"/><circle cx="1227" cy="85" r="6" fill="none" stroke="#222328" stroke-width="2"/><rect x="1240" y="74" width="22" height="22" fill="#2b2c33"/><circle cx="1251" cy="85" r="6" fill="none" stroke="#222328" stroke-width="2"/><rect x="1264" y="74" width="22" height="22" fill="#2b2c33"/><circle cx="1275" cy="85" r="6" fill="none" stroke="#222328" stroke-width="2"/><rect x="1288" y="74" width="22" height="22" fill="#2b2c33"/><circle cx="1299" cy="85" r="6" fill="none" stroke="#222328" stroke-width="2"/><rect x="1312" y="74" width="22" height="22" fill="#2b2c33"/><circle cx="1323" cy="85" r="6" fill="none" stroke="#222328" stroke-width="2"/><rect x="1336" y="74" width="22" height="22" fill="#2b2c33"/><circle cx="1347" cy="85" r="6" fill="none" stroke="#222328" stroke-width="2"/><rect x="1360" y="74" width="22" height="22" fill="#2b2c33"/><circle cx="1371" cy="85" r="6" fill="none" stroke="#222328" stroke-width="2"/><rect x="1384" y="74" width="22" height="22" fill="#2b2c33"/><circle cx="1395" cy="85" r="6" fill="none" stroke="#222328" stroke-width="2"/><rect x="1408" y="74" width="22" height="22" fill="#2b2c33"/><circle cx="1419" cy="85" r="6" fill="none" stroke="#222328" stroke-width="2"/><rect x="1432" y="74" width="22" height="22" fill="#2b2c33"/><circle cx="1443" cy="85" r="6" fill="none" stroke="#222328" stroke-width="2"/><rect x="1456" y="74" width="22" height="22" fill="#2b2c33"/><circle cx="1467" cy="85" r="6" fill="none" stroke="#222328" stroke-width="2"/><rect x="304" y="98" width="22" height="22" fill="#2b2c33"/><circle cx="315" cy="109" r="7" fill="#55676f"/><rect x="328" y="98" width="22" height="22" fill="#2b2c33"/><circle cx="339" cy="109" r="7" fill="#55676f"/><rect x="352" y="98" width="22" height="22" fill="#2b2c33"/><circle cx="363" cy="109" r="7" fill="#55676f"/><rect x="376" y="98" width="22" height="22" fill="#2b2c33"/><circle cx="387" cy="109" r="7" fill="#55676f"/><rect x="400" y="98" width="22" height="22" fill="#2b2c33"/><circle cx="411" cy="109" r="7" fill="#55676f"/><rect x="424" y="98" width="22" height="22" fill="#2b2c33"/><circle cx="435" cy="109" r="7" fill="#55676f"/><rect x="448" y="98" width="22" height="22" fill="#2b2c33"/><circle cx="459" cy="109" r="7" fill="#55676f"/><rect x="472" y="98" width="22" height="22" fill="#2b2c33"/><circle cx="483" cy="109" r="7" fill="#55676f"/><rect x="496" y="98" width="22" height="22" fill="#2b2c33"/><circle cx="507" cy="109" r="7" fill="#55676f"/><rect x="520" y="98" width="22" height="22" fill="#2b2c33"/><circle cx="531" cy="109" r="7" fill="#55676f"/><rect x="544" y="98" width="22" height="22" fill="#2b2c33"/><circle cx="555" cy="109" r="7" fill="#55676f"/><rect x="568" y="98" width="22" height="22" fill="#2b2c33"/><circle cx="579" cy="109" r="7" fill="#55676f"/><rect x="592" y="98" width="22" height="22" fill="#2b2c33"/><circle cx="603" cy="109" r="7" fill="#55676f"/><rect x="616" y="98" width="22" height="22" fill="#2b2c33"/><circle cx="627" cy="109" r="7" fill="#55676f"/><rect x="640" y="98" width="22" height="22" fill="#2b2c33"/><circle cx="651" cy="109" r="7" fill="#55676f"/><rect x="664" y="98" width="22" height="22" fill="#2b2c33"/><circle cx="675" cy="109" r="7" fill="#55676f"/><rect x="688" y="98" width="22" height="22" fill="#2b2c33"/><circle cx="699" cy="109" r="7" fill="#55676f"/><rect x="712" y="98" width="22" height="22" fill="#2b2c33"/><circle cx="723" cy="109" r="7" fill="#55676f"/><rect x="736" y="98" width="22" height="22" fill="#2b2c33"/><circle cx="747" cy="109" r="7" fill="#55676f"/><rect x="760" y="98" width="22" height="22" fill="#2b2c33"/><circle cx="771" cy="109" r="7" fill="#55676f"/><rect x="784" y="98" width="22" height="22" fill="#2b2c33"/><circle cx="795" cy="109" r="7" fill="#55676f"/><rect x="808" y="98" width="22" height="22" fill="#2b2c33"/><circle cx="819" cy="109" r="7" fill="#55676f"/><rect x="832" y="98" width="22" height="22" fill="#2b2c33"/><circle cx="843" cy="109" r="7" fill="#55676f"/><rect x="856" y="98" width="22" height="22" fill="#2b2c33"/><circle cx="867" cy="109" r="7" fill="#55676f"/><rect x="880" y="98" width="22" height="22" fill="#2b2c33"/><circle cx="891" cy="109" r="7" fill="#55676f"/><rect x="904" y="98" width="22" height="22" fill="#1e1f23"/><circle cx="915" cy="109" r="7" fill="#c9c9c9"/><rect x="928" y="98" width="22" height="22" fill="#2b2c33"/><circle cx="939" cy="109" r="7" fill="#55676f"/><rect x="952" y="98" width="22" height="22" fill="#2b2c33"/><circle cx="963" cy="109" r="7" fill="#55676f"/><rect x="976" y="98" width="22" height="22" fill="#2b2c33"/><circle cx="987" cy="109" r="7" fill="#55676f"/><rect x="1000" y="98" width="22" height="22" fill="#2b2c33"/><circle cx="1011" cy="109" r="7" fill="#55676f"/><rect x="1024" y="98" width="22" height="22" fill="#2b2c33"/><circle cx="1035" cy="109" r="6" fill="none" stroke="#222328" stroke-width="2"/><rect x="1048" y="98" width="22" height="22" fill="#2b2c33"/><circle cx="1059" cy="109" r="6" fill="none" stroke="#222328" stroke-width="2"/><rect x="1072" y="98" width="22" height="22" fill="#2b2c33"/><circle cx="1083" cy="109" r="6" fill="none" stroke="#222328" stroke-width="2"/><rect x="1096" y="98" width="22" height="22" fill="#2b2c33"/><circle cx="1107" cy="109" r="6" fill="none" stroke="#222328" stroke-width="2"/><rect x="1120" y="98" width="22" height="22" fill="#2b2c33"/><circle cx="1131" cy="109" r="6" fill="none" stroke="#222328" stroke-width="2"/><rect x="1144" y="98" width="22" height="22" fill="#2b2c33"/><circle cx="1155" cy="109" r="6" fill="none" stroke="#222328" stroke-width="2"/><rect x="1168" y="98" width="22" height="22" fill="#2b2c33"/><circle cx="1179" cy="109" r="7" fill="#55676f"/><rect x="1192" y="98" width="22" height="22" fill="#2b2c33"/><circle cx="1203" cy="109" r="7" fill="#55676f"/><rect x="1216" y="98" width="22" height="22" fill="#2b2c33"/><circle cx="1227" cy="109" r="7" fill="#55676f"/><rect x="1240" y="98" width="22" height="22" fill="#2b2c33"/><circle cx="1251" cy="109" r="7" fill="#55676f"/><rect x="1264" y="98" width="22" height="22" fill="#2b2c33"/><circle cx="1275" cy="109" r="7" fill="#55676f"/><rect x="1288" y="98" width="22" height="22" fill="#2b2c33"/><circle cx="1299" cy="109" r="7" fill="#55676f"/><rect x="1312" y="98" width="22" height="22" fill="#2b2c33"/><circle cx="1323" cy="109" r="7" fill="#55676f"/><rect x="1336" y="98" width="22" height="22" fill="#2b2c33"/><circle cx="1347" cy="109" r="7" fill="#55676f"/><rect x="1360" y="98" width="22" height="22" fill="#2b2c33"/><circle cx="1371" cy="109" r="7" fill="#55676f"/><rect x="1384" y="98" width="22" height="22" fill="#2b2c33"/><circle cx="1395" cy="109" r="7" fill="#55676f"/><rect x="1408" y="98" width="22" height="22" fill="#2b2c33"/><circle cx="1419" cy="109" r="7" fill="#55676f"/><rect x="1432" y="98" width="22" height="22" fill="#2b2c33"/><circle cx="1443" cy="109" r="7" fill="#55676f"/><rect x="1456" y="98" width="22" height="22" fill="#2b2c33"/><circle cx="1467" cy="109" r="7" fill="#55676f"/><rect x="304" y="122" width="22" height="22" fill="#2b2c33"/><circle cx="315" cy="133" r="7" fill="#55676f"/><rect x="328" y="122" width="22" height="22" fill="#2b2c33"/><circle cx="339" cy="133" r="7" fill="#55676f"/><rect x="352" y="122" width="22" height="22" fill="#2b2c33"/><circle cx="363" cy="133" r="7" fill="#55676f"/><rect x="376" y="122" width="22" height="22" fill="#2b2c33"/><circle cx="387" cy="133" r="7" fill="#55676f"/><rect x="400" y="122" width="22" height="22" fill="#2b2c33"/><circle cx="411" cy="133" r="7" fill="#55676f"/><rect x="424" y="122" width="22" height="22" fill="#2b2c33"/><circle cx="435" cy="133" r="7" fill="#55676f"/><rect x="448" y="122" width="22" height="22" fill="#2b2c33"/><circle cx="459" cy="133" r="7" fill="#55676f"/><rect x="472" y="122" width="22" height="22" fill="#2b2c33"/><circle cx="483" cy="133" r="7" fill="#55676f"/><rect x="496" y="122" width="22" height="22" fill="#2b2c33"/><circle cx="507" cy="133" r="7" fill="#55676f"/><rect x="520" y="122" width="22" height="22" fill="#2b2c33"/><circle cx="531" cy="133" r="7" fill="#55676f"/><rect x="544" y="122" width="22" height="22" fill="#2b2c33"/><circle cx="555" cy="133" r="7" fill="#55676f"/><rect x="568" y="122" width="22" height="22" fill="#2b2c33"/><circle cx="579" cy="133" r="7" fill="#55676f"/><rect x="592" y="122" width="22" height="22" fill="#2b2c33"/><circle cx="603" cy="133" r="7" fill="#55676f"/><rect x="616" y="122" width="22" height="22" fill="#2b2c33"/><circle cx="627" cy="133" r="7" fill="#55676f"/><rect x="640" y="122" width="22" height="22" fill="#2b2c33"/><circle cx="651" cy="133" r="7" fill="#55676f"/><rect x="664" y="122" width="22" height="22" fill="#2b2c33"/><circle cx="675" cy="133" r="7" fill="#55676f"/><rect x="688" y="122" width="22" height="22" fill="#2b2c33"/><circle cx="699" cy="133" r="7" fill="#55676f"/><rect x="712" y="122" width="22" height="22" fill="#2b2c33"/><circle cx="723" cy="133" r="7" fill="#55676f"/><rect x="736" y="122" width="22" height="22" fill="#2b2c33"/><circle cx="747" cy="133" r="7" fill="#55676f"/><rect x="760" y="122" width="22" height="22" fill="#2b2c33"/><circle cx="771" cy="133" r="7" fill="#55676f"/><rect x="784" y="122" width="22" height="22" fill="#2b2c33"/><circle cx="795" cy="133" r="7" fill="#55676f"/><rect x="808" y="122" width="22" height="22" fill="#2b2c33"/><circle cx="819" cy="133" r="7" fill="#55676f"/><rect x="832" y="122" width="22" height="22" fill="#2b2c33"/><circle cx="843" cy="133" r="7" fill="#55676f"/><rect x="856" y="122" width="22" height="22" fill="#2b2c33"/><circle cx="867" cy="133" r="7" fill="#55676f"/><rect x="880" y="122" width="22" height="22" fill="#2b2c33"/><circle cx="891" cy="133" r="7" fill="#55676f"/><rect x="904" y="122" width="22" height="22" fill="#1e1f23"/><circle cx="915" cy="133" r="7" fill="#c9c9c9"/><rect x="928" y="122" width="22" height="22" fill="#2b2c33"/><circle cx="939" cy="133" r="7" fill="#55676f"/><rect x="952" y="122" width="22" height="22" fill="#2b2c33"/><circle cx="963" cy="133" r="7" fill="#55676f"/><rect x="976" y="122" width="22" height="22" fill="#2b2c33"/><circle cx="987" cy="133" r="7" fill="#55676f"/><rect x="1000" y="122" width="22" height="22" fill="#2b2c33"/><circle cx="1011" cy="133" r="7" fill="#55676f"/><rect x="1024" y="122" width="22" height="22" fill="#2b2c33"/><circle cx="1035" cy="133" r="6" fill="none" stroke="#222328" stroke-width="2"/><rect x="1048" y="122" width="22" height="22" fill="#2b2c33"/><circle cx="1059" cy="133" r="6" fill="none" stroke="#222328" stroke-width="2"/><rect x="1072" y="122" width="22" height="22" fill="#2b2c33"/><circle cx="1083" cy="133" r="6" fill="none" stroke="#222328" stroke-width="2"/><rect x="1096" y="122" width="22" height="22" fill="#2b2c33"/><circle cx="1107" cy="133" r="6" fill="none" stroke="#222328" stroke-width="2"/><rect x="1120" y="122" width="22" height="22" fill="#2b2c33"/><circle cx="1131" cy="133" r="6" fill="none" stroke="#222328" stroke-width="2"/><rect x="1144" y="122" width="22" height="22" fill="#2b2c33"/><circle cx="1155" cy="133" r="6" fill="none" stroke="#222328" stroke-width="2"/><rect x="1168" y="122" width="22" height="22" fill="#2b2c33"/><circle cx="1179" cy="133" r="7" fill="#55676f"/><rect x="1192" y="122" width="22" height="22" fill="#2b2c33"/><circle cx="1203" cy="133" r="7" fill="#55676f"/><rect x="1216" y="122" width="22" height="22" fill="#2b2c33"/><circle cx="1227" cy="133" r="7" fill="#55676f"/><rect x="1240" y="122" width="22" height="22" fill="#2b2c33"/><circle cx="1251" cy="133" r="7" fill="#55676f"/><rect x="1264" y="122" width="22" height="22" fill="#2b2c33"/><circle cx="1275" cy="133" r="7" fill="#55676f"/><rect x="1288" y="122" width="22" height="22" fill="#2b2c33"/><circle cx="1299" cy="133" r="7" fill="#55676f"/><rect x="1312" y="122" width="22" height="22" fill="#2b2c33"/><circle cx="1323" cy="133" r="7" fill="#55676f"/><rect x="1336" y="122" width="22" height="22" fill="#2b2c33"/><circle cx="1347" cy="133" r="7" fill="#55676f"/><rect x="1360" y="122" width="22" height="22" fill="#2b2c33"/><circle cx="1371" cy="133" r="7" fill="#55676f"/><rect x="1384" y="122" width="22" height="22" fill="#2b2c33"/><circle cx="1395" cy="133" r="7" fill="#55676f"/><rect x="1408" y="122" width="22" height="22" fill="#2b2c33"/><circle cx="1419" cy="133" r="7" fill="#55676f"/><rect x="1432" y="122" width="22" height="22" fill="#2b2c33"/><circle cx="1443" cy="133" r="7" fill="#55676f"/><rect x="1456" y="122" width="22" height="22" fill="#2b2c33"/><circle cx="1467" cy="133" r="7" fill="#55676f"/><rect x="304" y="146" width="22" height="22" fill="#2b2c33"/><circle cx="315" cy="157" r="7" fill="#55676f"/><rect x="328" y="146" width="22" height="22" fill="#2b2c33"/><circle cx="339" cy="157" r="7" fill="#55676f"/><rect x="352" y="146" width="22" height="22" fill="#2b2c33"/><circle cx="363" cy="157" r="7" fill="#55676f"/><rect x="376" y="146" width="22" height="22" fill="#2b2c33"/><circle cx="387" cy="157" r="7" fill="#55676f"/><rect x="400" y="146" width="22" height="22" fill="#2b2c33"/><circle cx="411" cy="157" r="7" fill="#55676f"/><rect x="424" y="146" width="22" height="22" fill="#2b2c33"/><circle cx="435" cy="157" r="7" fill="#55676f"/><rect x="448" y="146" width="22" height="22" fill="#2b2c33"/><circle cx="459" cy="157" r="7" fill="#55676f"/><rect x="472" y="146" width="22" height="22" fill="#2b2c33"/><circle cx="483" cy="157" r="7" fill="#55676f"/><rect x="496" y="146" width="22" height="22" fill="#2b2c33"/><circle cx="507" cy="157" r="7" fill="#55676f"/><rect x="520" y="146" width="22" height="22" fill="#2b2c33"/><circle cx="531" cy="157" r="7" fill="#55676f"/><rect x="544" y="146" width="22" height="22" fill="#2b2c33"/><circle cx="555" cy="157" r="7" fill="#55676f"/><rect x="568" y="146" width="22" height="22" fill="#2b2c33"/><circle cx="579" cy="157" r="7" fill="#55676f"/><rect x="592" y="146" width="22" height="22" fill="#2b2c33"/><circle cx="603" cy="157" r="7" fill="#55676f"/><rect x="616" y="146" width="22" height="22" fill="#2b2c33"/><circle cx="627" cy="157" r="7" fill="#55676f"/><rect x="640" y="146" width="22" height="22" fill="#2b2c33"/><circle cx="651" cy="157" r="7" fill="#55676f"/><rect x="664" y="146" width="22" height="22" fill="#2b2c33"/><circle cx="675" cy="157" r="7" fill="#55676f"/><rect x="688" y="146" width="22" height="22" fill="#2b2c33"/><circle cx="699" cy="157" r="7" fill="#55676f"/><rect x="712" y="146" width="22" height="22" fill="#2b2c33"/><circle cx="723" cy="157" r="7" fill="#55676f"/><rect x="736" y="146" width="22" height="22" fill="#2b2c33"/><circle cx="747" cy="157" r="7" fill="#55676f"/><rect x="760" y="146" width="22" height="22" fill="#2b2c33"/><circle cx="771" cy="157" r="7" fill="#55676f"/><rect x="784" y="146" width="22" height="22" fill="#2b2c33"/><circle cx="795" cy="157" r="7" fill="#55676f"/><rect x="808" y="146" width="22" height="22" fill="#2b2c33"/><circle cx="819" cy="157" r="7" fill="#55676f"/><rect x="832" y="146" width="22" height="22" fill="#2b2c33"/><circle cx="843" cy="157" r="7" fill="#55676f"/><rect x="856" y="146" width="22" height="22" fill="#2b2c33"/><circle cx="867" cy="157" r="7" fill="#55676f"/><rect x="880" y="146" width="22" height="22" fill="#2b2c33"/><circle cx="891" cy="157" r="7" fill="#55676f"/><rect x="904" y="146" width="22" height="22" fill="#1e1f23"/><circle cx="915" cy="157" r="7" fill="#c9c9c9"/><rect x="928" y="146" width="22" height="22" fill="#2b2c33"/><circle cx="939" cy="157" r="7" fill="#55676f"/><rect x="952" y="146" width="22" height="22" fill="#2b2c33"/><circle cx="963" cy="157" r="7" fill="#55676f"/><rect x="976" y="146" width="22" height="22" fill="#2b2c33"/><circle cx="987" cy="157" r="7" fill="#55676f"/><rect x="1000" y="146" width="22" height="22" fill="#2b2c33"/><circle cx="1011" cy="157" r="7" fill="#55676f"/><rect x="1024" y="146" width="22" height="22" fill="#2b2c33"/><circle cx="1035" cy="157" r="7" fill="#55676f"/><rect x="1048" y="146" width="22" height="22" fill="#2b2c33"/><circle cx="1059" cy="157" r="7" fill="#55676f"/><rect x="1072" y="146" width="22" height="22" fill="#2b2c33"/><circle cx="1083" cy="157" r="7" fill="#55676f"/><rect x="1096" y="146" width="22" height="22" fill="#2b2c33"/><circle cx="1107" cy="157" r="7" fill="#55676f"/><rect x="1120" y="146" width="22" height="22" fill="#2b2c33"/><circle cx="1131" cy="157" r="7" fill="#55676f"/><rect x="1144" y="146" width="22" height="22" fill="#2b2c33"/><circle cx="1155" cy="157" r="7" fill="#55676f"/><rect x="1168" y="146" width="22" height="22" fill="#2b2c33"/><circle cx="1179" cy="157" r="7" fill="#55676f"/><rect x="1192" y="146" width="22" height="22" fill="#2b2c33"/><circle cx="1203" cy="157" r="7" fill="#55676f"/><rect x="1216" y="146" width="22" height="22" fill="#2b2c33"/><circle cx="1227" cy="157" r="7" fill="#55676f"/><rect x="1240" y="146" width="22" height="22" fill="#2b2c33"/><circle cx="1251" cy="157" r="7" fill="#55676f"/><rect x="1264" y="146" width="22" height="22" fill="#2b2c33"/><circle cx="1275" cy="157" r="7" fill="#55676f"/><rect x="1288" y="146" width="22" height="22" fill="#2b2c33"/><circle cx="1299" cy="157" r="7" fill="#55676f"/><rect x="1312" y="146" width="22" height="22" fill="#2b2c33"/><circle cx="1323" cy="157" r="7" fill="#55676f"/><rect x="1336" y="146" width="22" height="22" fill="#2b2c33"/><circle cx="1347" cy="157" r="7" fill="#55676f"/><rect x="1360" y="146" width="22" height="22" fill="#2b2c33"/><circle cx="1371" cy="157" r="7" fill="#55676f"/><rect x="1384" y="146" width="22" height="22" fill="#2b2c33"/><circle cx="1395" cy="157" r="7" fill="#55676f"/><rect x="1408" y="146" width="22" height="22" fill="#2b2c33"/><circle cx="1419" cy="157" r="7" fill="#55676f"/><rect x="1432" y="146" width="22" height="22" fill="#2b2c33"/><circle cx="1443" cy="157" r="7" fill="#55676f"/><rect x="1456" y="146" width="22" height="22" fill="#2b2c33"/><circle cx="1467" cy="157" r="7" fill="#55676f"/><rect x="304" y="170" width="22" height="8" fill="#2b2c33"/><circle cx="315" cy="181" r="7" fill="#55676f"/><rect x="328" y="170" width="22" height="8" fill="#2b2c33"/><circle cx="339" cy="181" r="7" fill="#55676f"/><rect x="352" y="170" width="22" height="8" fill="#2b2c33"/><circle cx="363" cy="181" r="7" fill="#55676f"/><rect x="376" y="170" width="22" height="8" fill="#2b2c33"/><circle cx="387" cy="181" r="7" fill="#55676f"/><rect x="400" y="170" width="22" height="8" fill="#2b2c33"/><circle cx="411" cy="181" r="7" fill="#55676f"/><rect x="424" y="170" width="22" height="8" fill="#2b2c33"/><circle cx="435" cy="181" r="7" fill="#55676f"/><rect x="448" y="170" width="22" height="8" fill="#2b2c33"/><circle cx="459" cy="181" r="7" fill="#55676f"/><rect x="472" y="170" width="22" height="8" fill="#2b2c33"/><circle cx="483" cy="181" r="7" fill="#55676f"/><rect x="496" y="170" width="22" height="8" fill="#2b2c33"/><circle cx="507" cy="181" r="7" fill="#55676f"/><rect x="520" y="170" width="22" height="8" fill="#2b2c33"/><circle cx="531" cy="181" r="7" fill="#55676f"/><rect x="544" y="170" width="22" height="8" fill="#2b2c33"/><circle cx="555" cy="181" r="7" fill="#55676f"/><rect x="568" y="170" width="22" height="8" fill="#2b2c33"/><circle cx="579" cy="181" r="7" fill="#55676f"/><rect x="592" y="170" width="22" height="8" fill="#2b2c33"/><circle cx="603" cy="181" r="7" fill="#55676f"/><rect x="616" y="170" width="22" height="8" fill="#2b2c33"/><circle cx="627" cy="181" r="7" fill="#55676f"/><rect x="640" y="170" width="22" height="8" fill="#2b2c33"/><circle cx="651" cy="181" r="7" fill="#55676f"/><rect x="664" y="170" width="22" height="8" fill="#2b2c33"/><circle cx="675" cy="181" r="7" fill="#55676f"/><rect x="688" y="170" width="22" height="8" fill="#2b2c33"/><circle cx="699" cy="181" r="7" fill="#55676f"/><rect x="712" y="170" width="22" height="8" fill="#2b2c33"/><circle cx="723" cy="181" r="7" fill="#55676f"/><rect x="736" y="170" width="22" height="8" fill="#2b2c33"/><circle cx="747" cy="181" r="7" fill="#55676f"/><rect x="760" y="170" width="22" height="8" fill="#2b2c33"/><circle cx="771" cy="181" r="7" fill="#55676f"/><rect x="784" y="170" width="22" height="8" fill="#2b2c33"/><circle cx="795" cy="181" r="7" fill="#55676f"/><rect x="808" y="170" width="22" height="8" fill="#2b2c33"/><circle cx="819" cy="181" r="7" fill="#55676f"/><rect x="832" y="170" width="22" height="8" fill="#2b2c33"/><circle cx="843" cy="181" r="7" fill="#55676f"/><rect x="856" y="170" width="22" height="8" fill="#2b2c33"/><circle cx="867" cy="181" r="7" fill="#55676f"/><rect x="880" y="170" width="22" height="8" fill="#2b2c33"/><circle cx="891" cy="181" r="7" fill="#55676f"/><rect x="904" y="170" width="22" height="8" fill="#1e1f23"/><circle cx="915" cy="181" r="7" fill="#c9c9c9"/><rect x="928" y="170" width="22" height="8" fill="#2b2c33"/><circle cx="939" cy="181" r="7" fill="#55676f"/><rect x="952" y="170" width="22" height="8" fill="#2b2c33"/><circle cx="963" cy="181" r="7" fill="#55676f"/><rect x="976" y="170" width="22" height="8" fill="#2b2c33"/><circle cx="987" cy="181" r="7" fill="#55676f"/><rect x="1000" y="170" width="22" height="8" fill="#2b2c33"/><circle cx="1011" cy="181" r="7" fill="#55676f"/><rect x="1024" y="170" width="22" height="8" fill="#2b2c33"/><circle cx="1035" cy="181" r="7" fill="#55676f"/><rect x="1048" y="170" width="22" height="8" fill="#2b2c33"/><circle cx="1059" cy="181" r="7" fill="#55676f"/><rect x="1072" y="170" width="22" height="8" fill="#2b2c33"/><circle cx="1083" cy="181" r="7" fill="#55676f"/><rect x="1096" y="170" width="22" height="8" fill="#2b2c33"/><circle cx="1107" cy="181" r="7" fill="#55676f"/><rect x="1120" y="170" width="22" height="8" fill="#2b2c33"/><circle cx="1131" cy="181" r="7" fill="#55676f"/><rect x="1144" y="170" width="22" height="8" fill="#2b2c33"/><circle cx="1155" cy="181" r="7" fill="#55676f"/><rect x="1168" y="170" width="22" height="8" fill="#2b2c33"/><circle cx="1179" cy="181" r="7" fill="#55676f"/><rect x="1192" y="170" width="22" height="8" fill="#2b2c33"/><circle cx="1203" cy="181" r="7" fill="#55676f"/><rect x="1216" y="170" width="22" height="8" fill="#2b2c33"/><circle cx="1227" cy="181" r="7" fill="#55676f"/><rect x="1240" y="170" width="22" height="8" fill="#2b2c33"/><circle cx="1251" cy="181" r="7" fill="#55676f"/><rect x="1264" y="170" width="22" height="8" fill="#2b2c33"/><circle cx="1275" cy="181" r="7" fill="#55676f"/><rect x="1288" y="170" width="22" height="8" fill="#2b2c33"/><circle cx="1299" cy="181" r="7" fill="#55676f"/><rect x="1312" y="170" width="22" height="8" fill="#2b2c33"/><circle cx="1323" cy="181" r="7" fill="#55676f"/><rect x="1336" y="170" width="22" height="8" fill="#2b2c33"/><circle cx="1347" cy="181" r="7" fill="#55676f"/><rect x="1360" y="170" width="22" height="8" fill="#2b2c33"/><circle cx="1371" cy="181" r="7" fill="#55676f"/><rect x="1384" y="170" width="22" height="8" fill="#2b2c33"/><circle cx="1395" cy="181" r="7" fill="#55676f"/><rect x="1408" y="170" width="22" height="8" fill="#2b2c33"/><circle cx="1419" cy="181" r="7" fill="#55676f"/><rect x="1432" y="170" width="22" height="8" fill="#2b2c33"/><circle cx="1443" cy="181" r="7" fill="#55676f"/><rect x="1456" y="170" width="22" height="8" fill="#2b2c33"/><circle cx="1467" cy="181" r="7" fill="#55676f"/></svg><div style="left:1875px;top:851px;width:7px;height:106px;background:#41444e;"></div><div style="left:1876px;top:850px;width:5px;height:108px;background:#41444e;"></div><div style="left:708px;top:993px;width:304px;height:5px;background:#41444e;"></div><div style="left:0px;top:1001px;width:1919px;height:30px;background:#343434;"></div>
<!-- gen_status --><span class="t" style="left:11px;top:1006.07px;font-size:16.5px;color:#5d6974;letter-spacing:0.53px;">RaidScene.aseprite</span><svg style="left:181px;top:1007px" width="16" height="14" viewBox="0 0 8 7" shape-rendering="crispEdges"><rect x="1" y="0" width="6" height="1" fill="#5d6974"/><rect x="1" y="1" width="1" height="1" fill="#5d6974"/><rect x="6" y="1" width="2" height="1" fill="#5d6974"/><rect x="1" y="2" width="1" height="1" fill="#5d6974"/><rect x="6" y="2" width="1" height="1" fill="#5d6974"/><rect x="1" y="3" width="1" height="1" fill="#5d6974"/><rect x="6" y="3" width="1" height="1" fill="#5d6974"/><rect x="1" y="4" width="1" height="1" fill="#5d6974"/><rect x="6" y="4" width="1" height="1" fill="#5d6974"/><rect x="0" y="5" width="7" height="1" fill="#5d6974"/><rect x="1" y="6" width="1" height="1" fill="#5d6974"/></svg><span class="t" style="left:205px;top:1006.07px;font-size:16.5px;color:#5d6974;letter-spacing:1.23px;">480 270</span><span class="t" style="left:289px;top:1006.07px;font-size:16.5px;color:#5d6974;letter-spacing:0.94px;">(D:\Streaming Mk 2\Scenes\Raid Scene)</span><span class="t" style="left:1643px;top:1006.07px;font-size:16.5px;color:#d2d2d2;letter-spacing:0.95px;">Frame:</span><div style="left:1718px;top:1005px;width:60px;height:20px;background:#000;"></div><div style="left:1716px;top:1007px;width:64px;height:16px;background:#000;"></div><div style="left:1718px;top:1007px;width:60px;height:16px;background:#41444e;"></div><span class="t" style="left:1720px;top:1006.07px;font-size:16.5px;color:#d2d2d2;letter-spacing:-1.35px;">26</span><div style="left:1794px;top:1025px;width:18px;height:2px;background:#232323;"></div><div style="left:1794px;top:1003px;width:18px;height:22px;background:#000;"></div><div style="left:1792px;top:1005px;width:22px;height:18px;background:#000;"></div><div style="left:1794px;top:1005px;width:18px;height:18px;background:#3f424c;"></div><div style="left:1794px;top:1021px;width:18px;height:2px;background:#30323a;"></div><svg style="left:1798px;top:1008px" width="10" height="10" viewBox="0 0 5 5" shape-rendering="crispEdges"><rect x="2" y="0" width="1" height="1" fill="#dcdcdc"/><rect x="2" y="1" width="1" height="1" fill="#dcdcdc"/><rect x="0" y="2" width="5" height="1" fill="#dcdcdc"/><rect x="2" y="3" width="1" height="1" fill="#dcdcdc"/><rect x="2" y="4" width="1" height="1" fill="#dcdcdc"/></svg><div style="left:1828px;top:1005px;width:71px;height:20px;background:#000;"></div><div style="left:1826px;top:1007px;width:75px;height:16px;background:#000;"></div><div style="left:1828px;top:1007px;width:71px;height:16px;background:#41444e;"></div><span class="t" style="left:1830px;top:1006.07px;font-size:16.5px;color:#d2d2d2;letter-spacing:-0.59px;">100.0%</span>
<!-- gen_taskbar --><div style="left:0px;top:1031px;width:1919px;height:47px;background:#1c1c1c;"></div><div style="left:0px;top:1031px;width:1919px;height:1px;background:#d9d9d9;"></div><svg style="left:0;top:1031px" width="1919" height="47" viewBox="0 0 1919 47"><defs><linearGradient id="wg" x1="0" y1="0" x2="1" y2="1"><stop offset="0" stop-color="#6fd4ff"/><stop offset="1" stop-color="#0a84e0"/></linearGradient><linearGradient id="ff" x1="0" y1="0" x2="0" y2="1"><stop offset="0" stop-color="#ffd23a"/><stop offset="0.5" stop-color="#ff7a1a"/><stop offset="1" stop-color="#e3266d"/></linearGradient><linearGradient id="sw" x1="0" y1="0" x2="1" y2="1"><stop offset="0" stop-color="#2aa7e0"/><stop offset="0.5" stop-color="#fff"/><stop offset="1" stop-color="#c23bd6"/></linearGradient><linearGradient id="st" x1="0" y1="0" x2="0" y2="1"><stop offset="0" stop-color="#14234f"/><stop offset="1" stop-color="#2a7fc4"/></linearGradient></defs><rect x="441" y="13.5" width="11" height="11" rx="1" fill="url(#wg)"/><rect x="453" y="13.5" width="11" height="11" rx="1" fill="url(#wg)"/><rect x="441" y="25.5" width="11" height="11" rx="1" fill="url(#wg)"/><rect x="453" y="25.5" width="11" height="11" rx="1" fill="url(#wg)"/><rect x="477.5" y="9" width="219" height="32" rx="16" fill="#353535" stroke="#414141"/><circle cx="495" cy="24" r="5.2" fill="none" stroke="#e8e8e8" stroke-width="1.6"/><path d="M499 28l4 4.500" stroke="#e8e8e8" stroke-width="1.8" stroke-linecap="round"/><text x="514" y="30" font-size="13.2" fill="#dcdcdc" font-family="Liberation Sans, sans-serif">Search</text><circle cx="667" cy="23" r="11" fill="#f0b342"/><circle cx="663" cy="20" r="2" fill="#d9962a"/><circle cx="671" cy="26" r="2.500" fill="#d9962a"/><circle cx="668" cy="17" r="1.300" fill="#d9962a"/><path d="M648 36l3-8 2 5 2-7 3 8 2-4 2 6zM676 36l2-6 2 4 3-8 2 7 2-5 2 8z" fill="#3b5bb5"/><ellipse cx="667" cy="37" rx="16" ry="2.500" fill="#c9d4ee"/><rect x="709" y="21" width="15" height="14" rx="2" fill="#6a6a6a"/><rect x="714" y="15" width="18" height="16" rx="2" fill="#f2f2f2"/><circle cx="765" cy="25" r="12" fill="#5865f2"/><path d="M758 22q7-3 14 0q3 5 2 9q-9 3-18 0q-1-4 2-9z" fill="#fff"/><circle cx="762.500" cy="27" r="1.600" fill="#5865f2"/><circle cx="767.500" cy="27" r="1.600" fill="#5865f2"/><circle cx="774" cy="15" r="7" fill="#e0313c"/><text x="774" y="18.5" font-size="9" font-weight="bold" fill="#fff" text-anchor="middle" font-family="Liberation Sans, sans-serif">9+</text><circle cx="808" cy="26" r="11.500" fill="url(#ff)"/><circle cx="809" cy="26" r="5.500" fill="#6b3fd6"/><path d="M800 17q5-6 12-2q4-4 5 2q-5-3-9 1z" fill="#ffbd2e"/><path d="M845 14h14l3 3-1 10-9 10-9-10-1-10z" fill="#f1562b"/><path d="M848 20h8l1 5-5 7-5-7z" fill="#fff"/><path d="M850 23h4l-2 5z" fill="#f1562b"/><circle cx="896" cy="25" r="12" fill="#e33b2e"/><path d="M896 25L885.600 19A12 12 0 0 0 896 37z" fill="#2ba24c"/><path d="M896 25L896 37A12 12 0 0 0 906.400 19z" fill="#fbc116"/><circle cx="896" cy="25" r="5.500" fill="#fff"/><circle cx="896" cy="25" r="4.300" fill="#2a72e5"/><rect x="930.500" y="15" width="20" height="20" rx="2.500" fill="#a9a7ee"/><text x="940.500" y="28.5" font-size="9" fill="#1c1c3a" text-anchor="middle" font-family="Liberation Sans, sans-serif" font-weight="bold">Live</text><path d="M973 15h8l2 3h12v4h-22z" fill="#e9a825"/><rect x="973" y="19" width="23" height="16" rx="1.500" fill="#f8d04e"/><rect x="978" y="28" width="13" height="7" rx="1" fill="#2f88e0"/><rect x="1018" y="15" width="20" height="20" rx="4" fill="#252a3a" stroke="#8a6a5a" stroke-width="1"/><circle cx="1028" cy="21" r="3" fill="#5ac8e8"/><circle cx="1023.500" cy="28" r="3" fill="#f2c230"/><circle cx="1032.500" cy="28" r="3" fill="#e84a5a"/><rect x="1061" y="14" width="23" height="23" rx="4" fill="#0f1626"/><text x="1072.500" y="26" font-size="13" font-weight="bold" fill="#fff" text-anchor="middle" font-family="Liberation Sans, sans-serif">W</text><path d="M1064 28h17M1066 30v4M1069 30v5M1072 30v3M1075 30v5M1078 30v4" stroke="#cfd6e6" stroke-width="1"/><circle cx="1116" cy="25" r="11.500" fill="#1ed760"/><path d="M1109 21q7-2.500 14 1M1110 25q6-2 12 1M1111 29q5-1.500 10 0.800" stroke="#111" stroke-width="2" fill="none" stroke-linecap="round"/><rect x="1151" y="15" width="18" height="21" rx="1.500" fill="#39b7e6"/><rect x="1151" y="34" width="18" height="2.500" fill="#d8792a"/><path d="M1154 20h12M1154 24h12M1154 28h12" stroke="#bfeaf9" stroke-width="1.500"/><path d="M1153 14v3M1157 14v3M1161 14v3M1165 14v3" stroke="#1c1c1c" stroke-width="1"/><circle cx="1204" cy="25" r="11.500" fill="#2a2a2a" stroke="#d8d8d8" stroke-width="1.400"/><path d="M1204 17a5 5 0 0 1 4 8M1211 28a5 5 0 0 1-9 3M1198 30a5 5 0 0 1 2-10" stroke="#e6e6e6" stroke-width="2" fill="none"/><circle cx="1248" cy="25" r="12" fill="url(#sw)"/><path d="M1248 15a10 10 0 0 0-8 16M1248 19a6 6 0 0 0-5 10M1252 16a10 10 0 0 1 6 13M1251 21a5 5 0 0 1 2 8" stroke="#2a62c9" stroke-width="1.600" fill="none"/><rect x="1281" y="15" width="22" height="20" rx="3" fill="#26272b"/><path d="M1284 30v-9l4 6 4-6v9M1293 27l2-4 2 6 2-4h2" stroke="#e8e8e8" stroke-width="1.400" fill="none"/><circle cx="1336" cy="25" r="12" fill="#3d5894"/><circle cx="1336" cy="25" r="12" fill="none" stroke="#2c4273" stroke-width="1.500"/><path d="M1330 23l6 4 6-6M1331 28l5-2 5 4" stroke="#30477d" stroke-width="1.500" fill="none"/><circle cx="1380" cy="25" r="12" fill="url(#st)"/><circle cx="1385" cy="22" r="4" fill="none" stroke="#fff" stroke-width="1.800"/><circle cx="1376" cy="29" r="3" fill="#fff"/><path d="M1369 26l7 3M1379 28l4-4" stroke="#fff" stroke-width="2.200"/><rect x="1404" y="6" width="40" height="40" rx="4" fill="#2e2e2e"/><rect x="1414" y="15" width="21" height="17" rx="2" fill="#fff"/><rect x="1414" y="31" width="21" height="3" fill="#b9aed0"/><rect x="1415" y="34" width="19" height="2" fill="#7d6b8a"/><rect x="1420" y="19" width="2.500" height="7" fill="#222"/><rect x="1427" y="19" width="2.500" height="7" fill="#222"/><rect x="1416" y="43.5" width="16" height="3" rx="1.500" fill="#f28b9b"/><circle cx="1468" cy="25" r="12" fill="#8d98ea"/><circle cx="1468" cy="25" r="9.500" fill="#dfe3fb"/><rect x="1462.500" y="24" width="11" height="8" rx="1" fill="#1f2233"/><path d="M1464.500 24v-3a3.500 3.500 0 0 1 7 0v3" stroke="#1f2233" stroke-width="1.800" fill="none"/><rect x="762" y="44" width="6" height="3" rx="1.500" fill="#8a8a8a"/><rect x="805" y="44" width="6" height="3" rx="1.500" fill="#8a8a8a"/><rect x="937" y="44" width="6" height="3" rx="1.500" fill="#8a8a8a"/><rect x="981" y="44" width="6" height="3" rx="1.500" fill="#8a8a8a"/><rect x="1113" y="44" width="6" height="3" rx="1.500" fill="#8a8a8a"/><rect x="1377" y="44" width="6" height="3" rx="1.500" fill="#8a8a8a"/><rect x="1465" y="44" width="6" height="3" rx="1.500" fill="#8a8a8a"/><path d="M1683 28l5.500-5.500 5.500 5.500" stroke="#fff" stroke-width="1.500" fill="none"/><rect x="1717.500" y="17" width="5" height="10" rx="2.500" fill="none" stroke="#e5a3ad" stroke-width="1.300"/><path d="M1715 25a5 5 0 0 0 10 0M1720 30v3" stroke="#e5a3ad" stroke-width="1.300" fill="none"/><text x="1759" y="22" font-size="11.500" fill="#fff" text-anchor="middle" font-family="Liberation Sans, sans-serif">ENG</text><text x="1759" y="38" font-size="11.500" fill="#fff" text-anchor="middle" font-family="Liberation Sans, sans-serif">US</text><rect x="1789.500" y="17.5" width="12" height="10" rx="1" fill="none" stroke="#fff" stroke-width="1.200"/><path d="M1792 31.5h7M1795.500 28v3" stroke="#fff" stroke-width="1.200"/><rect x="1800.500" y="16.5" width="4" height="7" rx="1" fill="#1c1c1c" stroke="#fff" stroke-width="1"/><path d="M1814 23h3l4-4v12l-4-4h-3z" fill="none" stroke="#fff" stroke-width="1.200"/><path d="M1823.500 22a4 4 0 0 1 0 6M1826 19.5a7 7 0 0 1 0 11M1828.500 17a10 10 0 0 1 0 16" stroke="#fff" stroke-width="1.100" fill="none"/><text x="1900" y="22" font-size="12.200" fill="#fff" text-anchor="end" font-family="Liberation Sans, sans-serif">8:33 AM</text><text x="1900" y="38" font-size="12.200" fill="#fff" text-anchor="end" font-family="Liberation Sans, sans-serif">1/02/2026</text></svg>
<!-- gen_dialog --><div style="left:710px;top:463px;width:502px;height:130px;background:#000;"></div><div style="left:712px;top:465px;width:498px;height:125px;background:#41444e;"></div><div style="left:712px;top:465px;width:498px;height:2px;background:#4a4d58;"></div><div style="left:714px;top:490px;width:494px;height:3px;background:#393b43;"></div><div style="left:714px;top:493px;width:494px;height:91px;background:#2b2b30;"></div><div style="left:714px;top:584px;width:494px;height:3px;background:#34363d;"></div><div style="left:1188px;top:471px;width:18px;height:16px;background:#000;"></div><div style="left:1190px;top:469px;width:14px;height:20px;background:#000;"></div><div style="left:1190px;top:471px;width:14px;height:14px;background:#2b2c33;"></div><div style="left:1190px;top:485px;width:14px;height:2px;background:#3a3c45;"></div><svg style="left:1192px;top:473px" width="10" height="10" viewBox="0 0 5 5" shape-rendering="crispEdges"><rect x="0" y="0" width="1" height="1" fill="#d8d8d8"/><rect x="4" y="0" width="1" height="1" fill="#d8d8d8"/><rect x="1" y="1" width="1" height="1" fill="#d8d8d8"/><rect x="3" y="1" width="1" height="1" fill="#d8d8d8"/><rect x="2" y="2" width="1" height="1" fill="#d8d8d8"/><rect x="1" y="3" width="1" height="1" fill="#d8d8d8"/><rect x="3" y="3" width="1" height="1" fill="#d8d8d8"/><rect x="0" y="4" width="1" height="1" fill="#d8d8d8"/><rect x="4" y="4" width="1" height="1" fill="#d8d8d8"/></svg><span class="t" style="left:723px;top:504.07px;font-size:16.5px;color:#dcdcdc;letter-spacing:1.11px;">Frame: 26 Timestamp: 00:02.60 Frame Duration: 100 ms</span><div style="left:903px;top:548px;width:114px;height:30px;background:#000;"></div><div style="left:901px;top:550px;width:118px;height:26px;background:#000;"></div><div style="left:903px;top:550px;width:114px;height:26px;background:#41444e;"></div><div style="left:905px;top:551px;width:110px;height:23px;background:#3d6fd6;"></div><div style="left:907px;top:553px;width:106px;height:19px;background:#2a2b31;"></div><span class="t m" style="left:950px;top:552.97px;font-size:15.5px;color:#d2d2d2;letter-spacing:-1.89px;"><u>O</u>K</span></div></body></html>
